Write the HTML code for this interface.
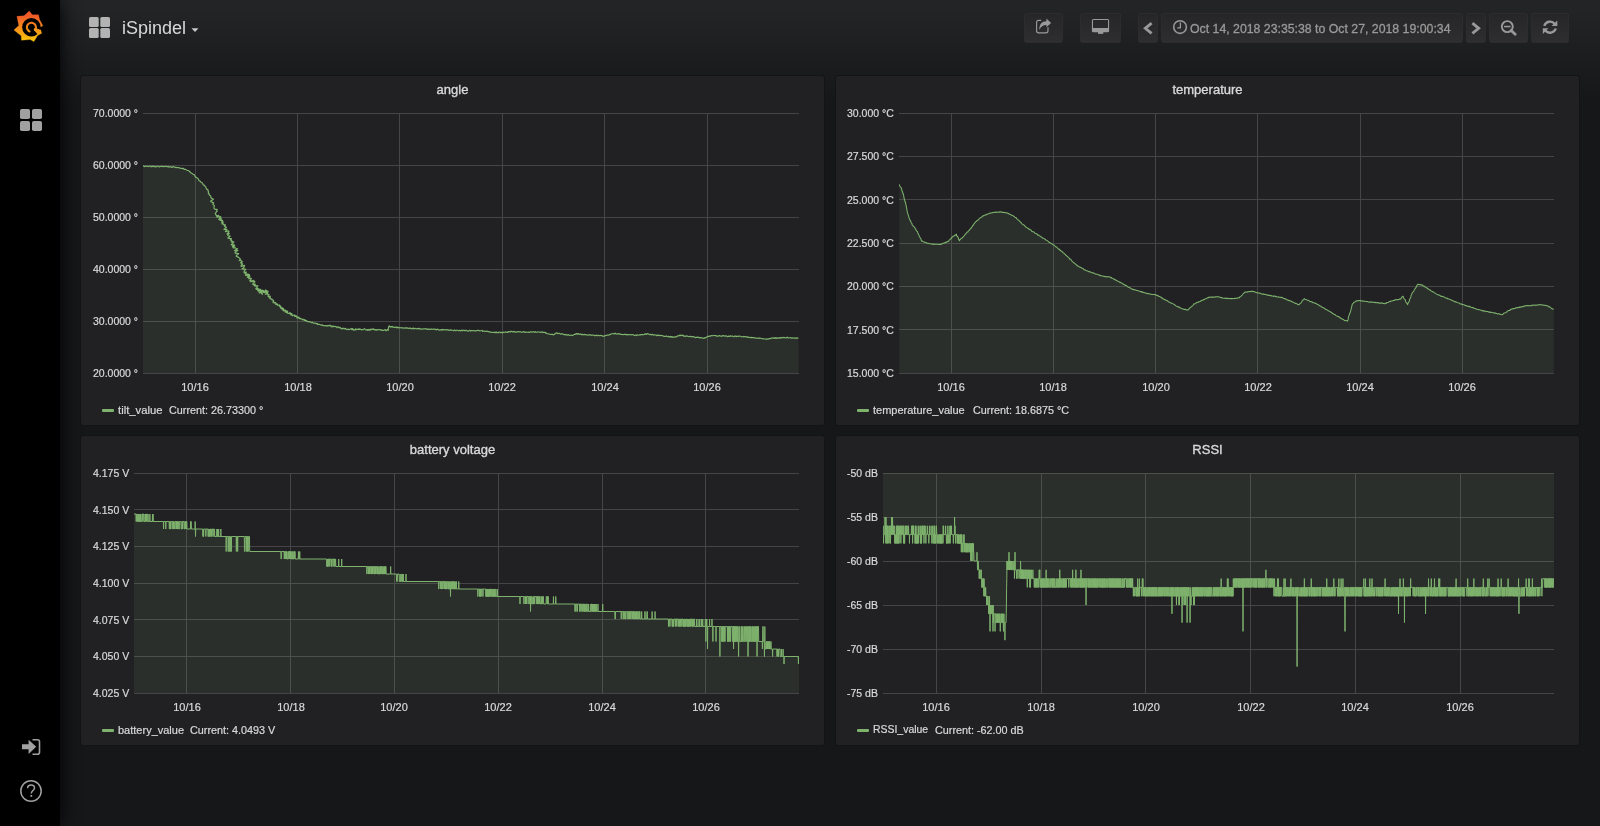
<!DOCTYPE html><html><head><meta charset="utf-8"><title>iSpindel - Grafana</title><style>
*{box-sizing:border-box}
html,body{margin:0;padding:0;width:1600px;height:826px;overflow:hidden}
body{-webkit-font-smoothing:antialiased;background:linear-gradient(180deg,#222426 10px,#161719 100px);font-family:"Liberation Sans",sans-serif;color:#d8d9da;position:relative}
.side{position:absolute;left:0;top:0;width:60px;height:826px;background:#000;box-shadow:0 0 20px #000;z-index:5}
.panel{position:absolute;background:#212124;border:1px solid #141414;border-radius:3px}
.ptitle{will-change:transform;-webkit-text-stroke:0.35px #d8d9da;position:absolute;text-align:center;font-size:13px;color:#d8d9da;line-height:14px}
.chart{position:absolute}
.ylab{will-change:transform;-webkit-text-stroke:0.2px #d8d9da;position:absolute;font-size:10.5px;line-height:14px;white-space:nowrap;text-align:right;color:#d8d9da}
.xlab{will-change:transform;-webkit-text-stroke:0.2px #d8d9da;position:absolute;width:60px;text-align:center;font-size:11px;line-height:14px;color:#d8d9da}
.lsw{position:absolute;width:12px;height:3.5px;background:#7eb26d;border-radius:1px}
.ltxt{will-change:transform;-webkit-text-stroke:0.2px #d8d9da;position:absolute;font-size:11px;line-height:14px;white-space:nowrap;color:#d8d9da}
.lcur{font-size:10.8px}
.btn{position:absolute;top:13px;height:30px;border:1px solid #2c2c2f;border-radius:2px;background:linear-gradient(180deg,#262628,#2e2e31)}
.ttl{will-change:transform;position:absolute;left:122px;top:18px;font-size:18px;line-height:21px;color:#d8d9da}
.tp{will-change:transform;-webkit-text-stroke:0.3px #999;position:absolute;left:1190px;top:22px;font-size:12.3px;line-height:14px;color:#999;white-space:nowrap}
</style></head><body>
<div class="btn" style="left:1024px;width:39px"></div>
<div class="btn" style="left:1080px;width:41px"></div>
<div class="btn" style="left:1138px;width:20px"></div>
<div class="btn" style="left:1161px;width:302px"></div>
<div class="btn" style="left:1466px;width:20px"></div>
<div class="btn" style="left:1489px;width:39px"></div>
<div class="btn" style="left:1531px;width:38px"></div>
<div class="tp">Oct 14, 2018 23:35:38 to Oct 27, 2018 19:00:34</div>
<div class="side"></div>
<svg width="60" height="826" style="position:absolute;left:0;top:0;z-index:6"><defs><linearGradient id="lg" x1="0" y1="11" x2="0" y2="42" gradientUnits="userSpaceOnUse"><stop offset="0" stop-color="#f05a28"/><stop offset="0.15" stop-color="#f05a28"/><stop offset="1" stop-color="#fbca0a"/></linearGradient></defs><path d="M29.3,11.0 L32.3,14.8 L38.5,14.7 L39.6,19.5 L42.8,25.6 L40.3,28.5 L41.7,33.3 L37.6,35.6 L33.9,41.6 L30.2,39.6 L21.5,40.2 L21.2,35.8 L13.9,30.1 L18.8,25.5 L16.9,16.3 L24.0,15.8 Z" fill="url(#lg)" stroke="url(#lg)" stroke-width="0.3" stroke-linejoin="round"/><circle cx="31.4" cy="27.3" r="9.25" fill="#000"/><path d="M33.61,29.75 L37.82,34.43 L38.31,33.97 L38.75,33.47 L39.17,32.94 L39.54,32.39 L39.88,31.81 L40.17,31.20 L40.42,30.58 L40.63,29.95 L40.71,29.62 L34.60,28.10 Z" fill="url(#lg)"/><path d="M34.41,30.64 L34.69,30.37 L34.95,30.07 L35.17,29.75 L35.37,29.41 L35.54,29.06 L35.68,28.69 L35.78,28.31 L35.86,27.93 L35.89,27.54 L35.90,27.14 L35.87,26.75 L35.80,26.36 L35.70,25.98 L35.57,25.61 L35.41,25.26 L35.22,24.92 L34.99,24.59 L34.74,24.29 L34.47,24.01 L34.17,23.75 L33.85,23.53 L33.51,23.33 L33.16,23.16 L32.79,23.02 L32.41,22.92 L32.03,22.84 L31.64,22.81 L31.24,22.80 L30.85,22.83 L30.46,22.90 L30.08,23.00 L29.71,23.13 L29.36,23.29 L29.02,23.48 L28.69,23.71 L28.39,23.96 L28.11,24.23 L27.85,24.53 L27.63,24.85 L27.43,25.19 L27.26,25.54 L27.12,25.91 L27.02,26.29 L26.94,26.67 L26.91,27.06 L26.90,27.46 L26.93,27.85 L27.00,28.24 L27.10,28.62 L27.23,28.99 L27.39,29.34 L27.58,29.68 L27.81,30.01 L28.06,30.31 L28.33,30.59 L28.63,30.85 L28.95,31.07 L29.29,31.27 L29.64,31.44 L30.01,31.58 L30.39,31.68" fill="none" stroke="url(#lg)" stroke-width="2.0"/><path d="M38.19,28.99 L43.04,30.20 L43.38,26.67 L38.39,26.93 Z" fill="#000"/><rect x="20" y="109" width="10" height="10" rx="1.8" fill="#a1a1a1"/><rect x="32" y="109" width="10" height="10" rx="1.8" fill="#a1a1a1"/><rect x="20" y="121" width="10" height="10" rx="1.8" fill="#a1a1a1"/><rect x="32" y="121" width="10" height="10" rx="1.8" fill="#a1a1a1"/><path d="M22,744.3 h6.6 v-4.6 l7.6,7.1 l-7.6,7.1 v-4.6 h-6.6 z" fill="#a1a1a1"/><path d="M32.5,739.7 h5 a2,2 0 0 1 2,2 v10.6 a2,2 0 0 1 -2,2 h-5" fill="none" stroke="#a1a1a1" stroke-width="1.6"/><circle cx="31" cy="791" r="10.2" fill="none" stroke="#a1a1a1" stroke-width="1.5"/><path d="M27.6,788.3 C27.6,786 29.2,784.9 31.1,784.9 C33.1,784.9 34.5,786.1 34.5,787.9 C34.5,790.4 31.3,790.6 31.3,793.4" fill="none" stroke="#a1a1a1" stroke-width="1.5"/><rect x="30.4" y="795" width="1.8" height="1.8" fill="#a1a1a1"/></svg>
<svg width="1600" height="60" style="position:absolute;left:0;top:0"><rect x="89" y="17" width="9.7" height="10.1" rx="1.6" fill="#b3b3b3"/><rect x="100.3" y="17" width="9.7" height="10.1" rx="1.6" fill="#b3b3b3"/><rect x="89" y="28" width="9.7" height="10" rx="1.6" fill="#b3b3b3"/><rect x="100.3" y="28" width="9.7" height="10" rx="1.6" fill="#b3b3b3"/><path d="M191.5,28.3 h7 l-3.5,3.8 z" fill="#c8c8c8"/><path d="M1041.2,20.4 h-2.6 a2,2 0 0 0 -2,2 v8.4 a2,2 0 0 0 2,2 h7.4 a2,2 0 0 0 2,-2 v-3.6" fill="none" stroke="#999" stroke-width="1.15"/><path d="M1039.4,29.9 C1039.1,24.2 1041.8,21.2 1046.4,21.2 V18.6 L1051.1,23.1 L1046.4,27.2 V25 C1043.2,25 1040.6,26.4 1039.4,29.9 Z" fill="#999"/><path d="M1093.4,18.9 h14.2 a1.5,1.5 0 0 1 1.5,1.5 v10.3 a1.5,1.5 0 0 1 -1.5,1.5 h-14.2 a1.5,1.5 0 0 1 -1.5,-1.5 v-10.3 a1.5,1.5 0 0 1 1.5,-1.5 z M1093,20 v8 h15 v-8 z" fill="#999" fill-rule="evenodd"/><rect x="1098" y="32" width="5.3" height="1.9" fill="#999"/><path d="M1151.6,23.2 L1145.3,28.3 L1151.6,33.4" fill="none" stroke="#999" stroke-width="2.8" stroke-linejoin="miter"/><path d="M1472.4,23.2 L1478.7,28.3 L1472.4,33.4" fill="none" stroke="#999" stroke-width="2.8" stroke-linejoin="miter"/><circle cx="1180.05" cy="27.05" r="6.35" fill="none" stroke="#999" stroke-width="1.55"/><path d="M1180.4,22.6 V27.8 H1177.3" fill="none" stroke="#999" stroke-width="1.3"/><circle cx="1507.3" cy="26.6" r="5.5" fill="none" stroke="#999" stroke-width="1.9"/><path d="M1504.1,26.55 H1510.5" stroke="#999" stroke-width="1.6"/><path d="M1511.1,30.4 L1515.2,34.3" stroke="#999" stroke-width="2.7" stroke-linecap="round"/><path d="M1544.3,25.9 A6.1,6.1 0 0 1 1554.8,23.9" fill="none" stroke="#999" stroke-width="2.4"/><path d="M1557.3,20.4 V26.1 H1551.6 Z" fill="#999"/><path d="M1555.8,28.5 A6.1,6.1 0 0 1 1545.3,30.6" fill="none" stroke="#999" stroke-width="2.4"/><path d="M1542.8,28.3 H1548.5 L1542.8,34 Z" fill="#999"/></svg>
<div class="ttl">iSpindel</div>
<div class="panel" style="left:80px;top:75px;width:745px;height:351px"></div>
<div class="ptitle" style="left:80px;top:82.5px;width:745px">angle</div>
<svg class="chart" width="1600" height="826" viewBox="0 0 1600 826" style="left:0;top:0"><defs><clipPath id="cl_angle"><rect x="143" y="83" width="656" height="290"/></clipPath></defs><path d="M143,113h656v1h-656zM143,165h656v1h-656zM143,217h656v1h-656zM143,269h656v1h-656zM143,321h656v1h-656zM143,373h656v1h-656zM195,113h1v261h-1zM297,113h1v261h-1zM399,113h1v261h-1zM502,113h1v261h-1zM604,113h1v261h-1zM707,113h1v261h-1z" fill="rgba(200,200,200,0.22)"/><g clip-path="url(#cl_angle)"><path d="M143,166.2 L143.71,165.89 L144.4,166.54 L145.1,166.49 L145.81,166.04 L146.51,166.28 L147.21,166.25 L147.91,166.45 L148.61,166.59 L149.33,165.98 L150.03,165.93 L150.72,166.68 L151.43,166.33 L152.12,166.64 L152.84,165.97 L153.54,166.39 L154.23,166.65 L154.94,166.23 L155.63,166.89 L156.33,166.86 L157.06,166.1 L157.76,166.11 L158.45,166.59 L159.14,166.96 L159.86,166.47 L160.56,166.34 L161.26,166.54 L161.97,166.21 L162.67,166.4 L163.37,166.61 L164.07,166.67 L164.78,166.45 L165.48,166.47 L166.18,166.47 L166.88,166.7 L167.58,166.57 L168.29,166.34 L168.98,167.09 L169.69,166.86 L170.39,166.95 L171.1,166.55 L171.78,167.3 L172.49,167.19 L173.21,166.54 L173.92,166.75 L174.58,167.21 L175.29,167.31 L175.97,167.62 L176.75,167.27 L177.4,167.74 L178.14,167.71 L178.9,167.5 L179.57,167.86 L180.24,168.23 L180.9,168.29 L181.67,168.24 L182.32,168.55 L183.16,168.31 L183.77,168.73 L184.27,169.43 L185.06,169.35 L185.81,169.38 L186.37,169.93 L186.99,170.3 L187.68,170.51 L188.47,170.51 L189.16,171.16 L189.86,171.81 L190.43,172.59 L191.31,173.01 L192.11,173.53 L192.79,174.19 L193.78,174.47 L194.5,175.08 L194.85,176.14 L195.39,176.91 L196.35,177.37 L197.18,177.95 L198.03,178.52 L198.53,179.43 L198.93,180.45 L199.78,181.02 L200.63,181.58 L201.14,182.5 L202.25,182.8 L202.77,183.69 L203.2,184.68 L204.14,185.14 L204.9,186.02 L205.7,186.87 L206.16,187.96 L206.53,189.12 L207.9,189.57 L207.99,190.91 L208.63,191.88 L208.27,193.55 L209.27,193.83 L209.3,195.11 L210.73,196.04 L210.86,197.3 L211.69,198.38 L213.42,199.24 L210.56,201.23 L212.03,202.15 L213.71,202.85 L212.89,204.06 L213.27,204.79 L214.05,205.35 L214.4,206.09 L213.99,207.14 L213.98,208.02 L214.33,208.76 L215.21,209.29 L217.11,209.4 L216.66,210.46 L217.17,211.13 L215.96,212.5 L215.24,213.67 L215.78,214.34 L216.09,215.09 L216.43,216.07 L218.63,215.36 L216.94,217.08 L217.81,217.21 L220.11,216.44 L220.64,216.78 L220.95,217.25 L218.73,219.3 L220.75,218.71 L221.52,218.89 L220.08,220.46 L221.33,220.35 L222.56,220.25 L222.55,220.92 L221.61,222.18 L223.13,221.9 L223.07,222.6 L221.88,224.01 L223.05,223.94 L223.8,224.14 L223.59,224.95 L225.51,224.76 L224.52,226.02 L224.7,226.69 L225.84,226.88 L226.42,227.35 L223.9,229.38 L225.6,229.29 L226.98,229.36 L225.87,230.68 L225.42,231.67 L228.57,230.85 L228.88,231.46 L228.73,232.3 L226.99,233.93 L229.29,233.54 L227.65,235.13 L228.05,235.69 L228.83,236.06 L230.29,236.09 L227.9,238.05 L228.83,238.33 L230.14,238.44 L231.49,238.52 L230.27,239.88 L231.48,240.04 L231.13,240.96 L232.34,241.12 L231.53,242.27 L233.88,241.86 L233.32,242.89 L231.22,244.69 L231.85,245.13 L234.19,244.72 L232.52,246.31 L234.78,245.94 L232.83,247.66 L233.83,247.92 L235.3,247.94 L236.19,248.25 L237.44,248.6 L234.49,250.65 L237.94,250.26 L235.33,252.18 L235.11,253.19 L236.88,253.44 L238.68,253.68 L236.38,255.48 L236.3,256.44 L237.61,256.87 L238.65,257.4 L239.45,258.02 L239.85,258.73 L240.65,259.08 L239.28,260.52 L240.44,260.69 L241.6,260.87 L242.22,261.32 L240.51,262.92 L242.13,262.87 L241.7,263.83 L242.63,264.13 L240.97,265.7 L241.17,266.36 L244.63,265.39 L244.27,266.32 L244.12,267.15 L242.06,268.93 L243.09,269.17 L244.98,268.98 L245.73,269.36 L244.37,270.79 L244.09,271.68 L244.05,272.46 L246.46,272.01 L244.83,273.58 L245.9,273.95 L246.85,273.87 L245.56,275.48 L248.26,274.07 L247,275.66 L249.35,274.52 L249.38,275.13 L247.32,277.32 L249.85,276.04 L248.41,277.76 L249.22,277.78 L248.76,278.77 L250.57,278.03 L250.96,278.37 L251.43,278.66 L249.89,280.45 L251.03,280.22 L250.22,281.46 L250.74,281.71 L253.44,280.3 L252.42,281.71 L254.15,281.04 L254.66,281.28 L254.86,281.77 L252.62,284.07 L253.17,284.29 L253.34,284.79 L255.21,284.03 L254.63,285.09 L254.39,285.89 L255.99,285.33 L255.67,286.2 L257.09,285.77 L257.84,285.84 L257.55,286.69 L255.84,288.58 L257.19,288.2 L256.33,289.47 L258.14,288.76 L259.02,288.73 L257.68,290.35 L257.85,290.85 L260.77,289.31 L258.95,291.29 L261.11,290.31 L261.34,290.77 L259.16,293.01 L262.18,291.4 L260.42,292.04 L262.4,294.31 L261.44,292.22 L261.06,291 L261.49,290.96 L261.96,291 L263.4,292.46 L262.27,290.13 L264.39,292.59 L263.5,290.62 L265.14,292.38 L265.31,291.96 L265.35,289.89 L265.78,290.18 L265.38,291.12 L266.87,290.58 L265.43,292.33 L267.67,291.21 L268.07,291.53 L265.3,294.31 L267.77,293.01 L267.13,294.14 L267.89,294.17 L268.33,294.45 L269.03,294.53 L267.99,295.97 L268.21,296.43 L268.51,296.82 L270.17,296.15 L270.31,296.67 L269.98,297.55 L269.71,298.39 L270.7,298.24 L270.78,298.81 L271.12,299.16 L272.06,299.06 L271.92,299.79 L272.59,299.9 L272.99,300.21 L273.56,300.4 L273.47,300.96 L272.9,302.3 L273.87,301.7 L273.92,302.26 L274.23,302.49 L274.16,303.2 L275.15,302.58 L275.56,302.7 L275.84,302.97 L276.15,303.2 L275.79,304.27 L276.04,304.58 L277.08,303.9 L277.34,304.19 L277.38,304.76 L277.64,305.06 L277.92,305.33 L278.66,305.02 L279.24,304.92 L279.27,305.51 L279.79,305.48 L279.49,306.47 L280.39,305.97 L280.69,306.21 L280.29,307.33 L281.02,307.04 L280.7,308.06 L281.38,307.84 L281.22,308.66 L282.41,307.79 L282.27,308.58 L282.21,309.28 L283.41,308.4 L282.62,310 L283.89,309.04 L283.44,310.22 L283.48,310.79 L283.99,310.77 L284.92,310.23 L285.49,310.14 L285.29,311.03 L285.21,311.9 L286.1,310.96 L285.83,312.18 L286.85,311.02 L286.42,312.54 L287.56,311.15 L287.59,311.81 L287.34,313.01 L287.73,313 L287.94,313.34 L288.31,313.39 L288.7,313.38 L289.05,313.45 L289.84,312.71 L289.9,313.32 L290.46,313 L290.24,314.14 L290.59,314.22 L291.28,313.65 L291.76,313.48 L291.21,315.23 L291.66,315.12 L292.21,314.82 L292.52,314.97 L292.53,315.68 L293.21,315.14 L293.57,315.2 L293.92,315.27 L294.3,315.29 L294.83,315.04 L294.54,316.3 L295.06,316.05 L295.22,316.49 L296,315.75 L296.02,316.43 L296.53,316.21 L296.85,316.35 L297.02,316.75 L296.79,317.92 L297.47,317.31 L297.77,317.42 L297.93,317.93 L298.49,317.33 L298.95,317.01 L298.89,318.1 L299.21,318.16 L299.42,318.55 L299.86,318.26 L300.07,318.65 L300.35,318.8 L300.81,318.49 L301.03,318.82 L301.34,318.91 L301.72,318.81 L301.96,319.08 L302.22,319.31 L302.42,319.71 L302.72,319.83 L303.22,319.4 L303.4,319.82 L303.89,319.43 L304.19,319.56 L304.35,320.04 L304.54,320.46 L305.07,319.96 L305.18,320.59 L305.45,320.79 L305.93,320.42 L306.11,320.85 L306.37,321.1 L306.82,320.8 L307.02,321.19 L307.31,321.33 L307.66,321.32 L307.88,321.65 L308.17,321.8 L308.45,321.96 L308.87,321.74 L309.3,321.52 L309.55,321.68 L310.25,321.82 L310.87,322.3 L311.52,322.64 L312.36,322.19 L312.91,322.92 L313.6,323.12 L314.37,322.97 L315.02,323.28 L315.79,323.15 L316.35,323.82 L317.19,323.38 L317.68,324.38 L318.41,324.4 L319.14,324.41 L319.91,324.27 L320.46,325 L321.14,325.22 L322.01,324.67 L322.56,325.4 L323.24,325.63 L323.99,325.64 L324.66,325.71 L325.34,325.51 L325.98,325.96 L326.65,326.03 L327.34,325.53 L327.99,325.94 L328.67,325.63 L329.35,325.42 L330.03,325.6 L330.84,325.32 L331.28,326.7 L331.97,326.94 L332.97,325.79 L333.52,326.7 L334.3,326.55 L335.11,326.26 L335.76,326.69 L336.48,326.78 L337.02,327.72 L337.99,326.71 L338.63,327.16 L339.26,327.71 L340.11,327.21 L340.61,328.32 L341.33,328.44 L341.96,328.96 L342.89,328.13 L343.52,328.41 L344,328.85 L344.52,328.44 L344.99,328.97 L345.52,328.46 L345.98,329.18 L346.47,329.38 L346.97,329.44 L347.46,329.73 L348,329.07 L348.5,329.01 L348.97,329.62 L349.48,329.51 L349.99,329.22 L350.51,328.95 L351.02,328.82 L351.53,328.57 L351.97,329.71 L352.53,328.64 L352.98,329.67 L353.5,329.38 L353.96,330.08 L354.48,329.78 L354.96,330.15 L355.53,328.84 L356,329.45 L356.49,329.59 L357,329.2 L357.5,329.5 L358,329.27 L358.5,329.55 L359,328.7 L359.5,329.41 L360,329.42 L360.5,329.19 L361,329.34 L361.5,329.95 L362,329.79 L362.5,329.49 L363,329.74 L363.5,329.3 L364,329.03 L364.5,328.71 L365,329.14 L365.5,329.66 L366,330.11 L366.5,330.03 L367,329.52 L367.5,330.28 L368,329.44 L368.5,330.04 L369,329.35 L369.5,329.89 L370,330.28 L370.5,329.19 L371,328.97 L371.5,329.69 L372,329.55 L372.5,329.28 L373,328.71 L373.5,329.32 L374,329.38 L374.5,329.35 L375,330.08 L375.5,329.64 L376,329.87 L376.5,330.14 L377,329.9 L377.5,329.49 L378,329.89 L378.5,329.72 L379,329.74 L379.48,329.71 L380.03,329.4 L380.51,329.8 L381.03,329.85 L381.5,330.38 L382.04,330.18 L382.54,330.33 L383.07,330.25 L383.58,330.38 L384.13,330.09 L384.68,329.73 L385.21,329.64 L385.66,330.39 L386.15,330.71 L386.71,330.23 L387.28,329.65 L388.26,330.39 L388.25,328.37 L388.81,326.45 L389.39,325.84 L389.82,326.64 L390.3,326.9 L390.85,326.67 L391.37,326.67 L391.84,327 L392.42,326.49 L392.88,326.99 L393.34,327.44 L393.88,327.27 L394.42,327.07 L394.9,327.39 L395.42,327.37 L395.97,327.08 L396.48,327.14 L396.92,327.81 L397.49,327.31 L398.02,327.2 L398.46,327.94 L399,327.72 L399.71,327.62 L400.41,327.78 L401.11,328.02 L401.84,327.54 L402.52,328.01 L403.23,328.1 L403.93,328.23 L404.66,327.78 L405.35,328.12 L406.07,327.81 L406.76,328.14 L407.49,327.83 L408.16,328.42 L408.87,328.52 L409.6,328.08 L410.31,328.02 L410.98,328.72 L411.7,328.52 L412.4,328.68 L413.14,327.98 L413.81,328.8 L414.52,328.59 L415.24,328.35 L415.94,328.49 L416.64,328.82 L417.34,328.87 L418.07,328.37 L418.76,328.8 L419.49,328.42 L420.16,329.18 L420.88,328.74 L421.57,329.2 L422.28,329.07 L423,329 L423.72,328.72 L424.41,328.99 L425.13,328.68 L425.84,328.72 L426.52,329.27 L427.24,328.99 L427.93,329.37 L428.66,328.95 L429.34,329.41 L430.05,329.45 L430.77,329.11 L431.49,328.97 L432.18,329.27 L432.88,329.39 L433.61,329.07 L434.31,329.18 L435.02,329.1 L435.69,329.61 L436.38,329.9 L437.1,329.33 L437.8,329.19 L438.48,329.82 L439.17,329.94 L439.86,330.1 L440.57,329.82 L441.27,329.6 L441.95,330.07 L442.67,329.45 L443.35,329.99 L444.07,329.48 L444.75,329.78 L445.45,329.9 L446.15,329.82 L446.85,329.66 L447.54,329.74 L448.22,330.3 L448.93,330 L449.62,330.13 L450.33,329.83 L451.01,330.31 L451.72,329.99 L452.41,330.25 L453.09,330.56 L453.79,330.67 L454.52,329.84 L455.19,330.54 L455.88,330.63 L456.6,330.17 L457.29,330.25 L457.98,330.46 L458.66,330.79 L459.38,330.35 L460.06,330.81 L460.76,330.72 L461.48,330.21 L462.15,330.92 L462.87,330.14 L463.57,330.28 L464.24,330.77 L464.96,330.25 L465.65,330.57 L466.35,330.37 L467.04,330.7 L467.72,331.06 L468.41,331.15 L469.14,330.39 L469.84,330.44 L470.51,331.17 L471.23,330.48 L471.92,330.72 L472.62,330.6 L473.32,330.61 L473.92,330.58 L474.77,330.97 L475.54,330.92 L476.28,330.71 L477.06,330.71 L477.73,330.4 L478.48,330.25 L479.16,330.56 L479.83,330.96 L480.58,330.77 L481.34,330.51 L482.08,330.44 L482.68,331.32 L483.44,331.11 L484.18,330.99 L484.86,331.32 L485.58,331.38 L486.3,331.44 L487.07,331.13 L487.74,331.48 L488.45,331.63 L489.19,331.54 L489.82,332.25 L490.58,331.94 L491.27,332.25 L491.99,332.39 L492.69,332.44 L493.39,332.44 L494.09,332.49 L494.81,332.06 L495.49,332.73 L496.21,332.01 L496.89,332.72 L497.59,332.68 L498.29,332.7 L499.01,332 L499.71,332.05 L500.39,332.72 L501.1,332.43 L501.8,332.36 L502.54,332.93 L503.16,332.03 L503.89,332.41 L504.57,332.28 L505.24,331.94 L505.95,332.12 L506.67,332.34 L507.37,332.44 L508,331.61 L508.73,332 L509.39,331.56 L510.14,332.13 L510.78,331.44 L511.51,331.33 L512.2,331.66 L512.9,331.98 L513.6,331.61 L514.3,331.46 L515,332.07 L515.7,332.09 L516.4,332.14 L517.1,331.65 L517.8,331.77 L518.5,331.62 L519.2,331.91 L519.9,331.72 L520.6,331.73 L521.3,332.15 L521.99,332.31 L522.7,331.99 L523.41,331.56 L524.1,332.07 L524.8,331.89 L525.49,332.39 L526.2,332.16 L526.9,332.27 L527.6,332.16 L528.3,332.02 L528.99,332.36 L529.7,332.31 L530.4,331.83 L531.1,331.72 L531.8,331.92 L532.5,332.07 L533.21,331.7 L533.9,331.93 L534.6,332.15 L535.31,331.68 L536,332.38 L536.7,332.25 L537.4,331.95 L538.1,331.95 L538.8,332.01 L539.5,331.99 L540.2,332.38 L540.9,332.17 L541.6,332.2 L542.3,331.87 L542.91,332.56 L543.74,332.22 L544.44,332.39 L545.19,332.33 L545.7,333.3 L546.5,333.03 L547.11,333.58 L547.81,333.76 L548.5,333.97 L549.23,334.01 L549.91,334.27 L550.61,334.44 L551.34,334.5 L552.18,334.09 L552.79,334.6 L553.54,334.8 L554.54,334.43 L555.17,333.64 L555.72,332.98 L556.42,333.15 L557.2,332.95 L557.81,333.6 L558.58,333.47 L559.33,333.39 L560.03,333.58 L560.66,334.17 L561.44,333.91 L562.22,333.72 L562.93,333.84 L563.56,334.45 L564.29,334.48 L564.94,334.91 L565.78,334.41 L566.45,334.75 L567.11,335.16 L567.94,334.7 L568.64,334.88 L569.28,335.41 L569.98,335.29 L570.67,335.1 L571.38,335.19 L572.11,335.47 L572.8,335.32 L573.29,334.93 L574.04,334.43 L575.18,334.51 L575.74,333.88 L576.47,333.51 L577.11,334.19 L577.87,333.49 L578.53,333.86 L579.19,334.34 L579.9,334.28 L580.62,333.95 L581.27,334.55 L581.99,334.34 L582.66,334.64 L583.35,334.72 L584.08,334.36 L584.76,334.64 L585.46,334.58 L586.12,334.99 L586.83,334.92 L587.53,334.91 L588.21,335.04 L588.9,335.27 L589.64,334.66 L590.34,334.66 L590.99,335.21 L591.69,335.29 L592.4,335.11 L593.09,335.14 L593.79,335.13 L594.45,335.61 L595.15,335.59 L595.86,335.46 L596.6,335.02 L597.23,335.81 L597.95,335.51 L598.67,335.33 L599.35,335.48 L600.02,335.89 L600.76,335.33 L601.45,335.49 L602.13,335.71 L602.78,336.29 L603.55,336.22 L604.3,336.24 L604.91,335.69 L605.62,335.54 L606.31,335.35 L607.01,335.16 L607.71,335 L608.47,335.06 L609.2,335.01 L609.78,334.36 L610.53,334.38 L611.16,333.93 L611.86,333.75 L612.6,333.75 L613.32,333.65 L614,333.44 L614.66,333.89 L615.43,333.22 L616.09,333.71 L616.76,334.09 L617.48,333.92 L618.19,333.83 L618.91,333.71 L619.61,333.81 L620.27,334.35 L620.97,334.37 L621.69,334.23 L622.37,334.5 L623.07,334.58 L623.77,334.57 L624.51,334.22 L625.2,334.35 L625.88,334.71 L626.61,334.4 L627.28,334.8 L628,334.62 L628.71,334.55 L629.4,334.72 L630.13,334.47 L630.81,334.75 L631.51,334.87 L632.24,334.57 L632.93,334.77 L633.62,334.91 L634.27,335.51 L635.01,335.33 L635.69,334.99 L636.46,335.55 L637.1,334.81 L637.82,334.97 L638.55,335.1 L639.25,334.98 L639.93,334.68 L640.67,334.91 L641.35,334.58 L642.08,334.71 L642.76,334.43 L643.51,334.79 L644.2,334.49 L644.84,333.85 L645.55,333.82 L646.34,334.49 L647.03,333.76 L647.74,333.66 L648.41,333.94 L649.08,334.23 L649.72,334.73 L650.47,334.32 L651.13,334.69 L651.81,334.87 L652.58,334.29 L653.22,334.84 L653.87,335.26 L654.61,334.95 L655.3,335.02 L656.02,334.93 L656.65,335.55 L657.33,335.65 L658.12,334.96 L658.76,335.44 L659.47,335.41 L660.14,335.71 L660.89,335.3 L661.56,335.51 L662.25,335.61 L662.93,335.87 L663.58,336.23 L664.27,336.37 L664.97,336.39 L665.67,336.37 L666.43,335.93 L667.09,336.28 L667.75,336.61 L668.48,336.36 L669.15,336.63 L669.8,337.07 L670.58,336.45 L671.19,337.19 L671.96,336.6 L672.63,336.93 L673.26,337.48 L673.92,336.94 L674.67,337 L675.31,336.7 L676.11,336.88 L676.8,336.75 L677.27,335.94 L678,335.89 L678.78,336.02 L679.35,335.51 L680.03,335 L680.68,335.57 L681.43,335.28 L682.12,335.5 L682.88,335.16 L683.47,336.13 L684.22,335.92 L684.89,336.25 L685.59,336.37 L686.38,335.84 L687.05,336.17 L687.77,336.17 L688.44,336.54 L689.14,336.7 L689.91,336.24 L690.61,336.37 L691.27,336.85 L692.01,336.67 L692.75,336.51 L693.45,336.65 L694.11,337.07 L694.81,337.19 L695.48,337.6 L696.23,337.31 L696.93,337.46 L697.69,337.14 L698.36,337.47 L699.08,337.44 L699.74,337.9 L700.5,337.6 L701.21,337.64 L701.9,337.87 L702.59,338.05 L703.31,338.02 L704.04,338.34 L704.55,337.7 L705.47,338 L706.07,337.56 L706.68,337.15 L707.18,336.47 L707.94,336.41 L708.73,336.42 L709.38,336.1 L709.99,335.98 L710.7,336.07 L711.42,335.58 L712.12,335.76 L712.83,335.63 L713.54,335.47 L714.24,335.5 L714.95,335.63 L715.66,335.49 L716.35,335.92 L717.05,336.09 L717.76,335.98 L718.47,336.11 L719.18,335.72 L719.89,335.72 L720.59,336.07 L721.28,336.38 L722,335.98 L722.72,335.62 L723.42,335.66 L724.12,335.94 L724.82,336.24 L725.54,335.78 L726.24,335.93 L726.94,336.36 L727.63,336.65 L728.36,336.09 L729.06,336.35 L729.76,336.29 L730.48,335.87 L731.18,336.16 L731.89,336.01 L732.59,336.13 L733.29,336.62 L734,336.56 L734.72,336.01 L735.42,336.06 L736.11,336.66 L736.83,336.13 L737.53,336.34 L738.24,336.32 L738.95,336.14 L739.66,336.14 L740.36,336.26 L741.06,336.52 L741.75,337.02 L742.47,336.77 L743.18,336.44 L743.88,336.85 L744.59,336.51 L745.29,336.74 L746.02,336.59 L746.65,337.24 L747.42,336.79 L748.07,337.28 L748.78,337.22 L749.46,337.48 L750.19,337.35 L750.86,337.68 L751.61,337.35 L752.28,337.67 L752.99,337.71 L753.7,337.71 L754.39,337.83 L755.1,337.89 L755.81,337.85 L756.46,338.38 L757.19,338.23 L757.89,338.24 L758.65,337.88 L759.3,338.37 L760.04,338.16 L760.73,338.28 L761.41,338.56 L762.1,338.75 L762.83,338.57 L763.52,338.67 L764.2,338.99 L764.9,339.02 L765.61,339.04 L766.34,338.86 L766.96,339.19 L767.8,339.17 L768.51,338.81 L769.26,338.55 L770.01,338.56 L770.7,338.42 L771.39,338.36 L772.06,337.74 L772.76,337.96 L773.47,338.27 L774.14,337.77 L774.86,338.42 L775.53,337.7 L776.24,338.33 L776.91,337.71 L777.63,338.24 L778.32,338.22 L778.99,337.73 L779.71,338.2 L780.37,337.51 L781.09,338.1 L781.76,337.65 L782.46,337.68 L783.14,337.36 L783.85,337.76 L784.53,337.44 L785.24,337.77 L785.93,337.86 L786.62,337.65 L787.29,337.09 L787.97,337.91 L788.67,337.93 L789.39,337.73 L790.11,337.54 L790.8,337.76 L791.48,338.09 L792.2,337.76 L792.88,338.1 L793.59,337.99 L794.3,337.88 L794.97,338.39 L795.71,337.97 L796.39,338.19 L797.13,337.75 L797.8,338.17 L798.5,338.25 L798.5,373 L143,373 Z" fill="rgba(126,178,109,0.1)"/><path d="M143,166.2 L143.71,165.89 L144.4,166.54 L145.1,166.49 L145.81,166.04 L146.51,166.28 L147.21,166.25 L147.91,166.45 L148.61,166.59 L149.33,165.98 L150.03,165.93 L150.72,166.68 L151.43,166.33 L152.12,166.64 L152.84,165.97 L153.54,166.39 L154.23,166.65 L154.94,166.23 L155.63,166.89 L156.33,166.86 L157.06,166.1 L157.76,166.11 L158.45,166.59 L159.14,166.96 L159.86,166.47 L160.56,166.34 L161.26,166.54 L161.97,166.21 L162.67,166.4 L163.37,166.61 L164.07,166.67 L164.78,166.45 L165.48,166.47 L166.18,166.47 L166.88,166.7 L167.58,166.57 L168.29,166.34 L168.98,167.09 L169.69,166.86 L170.39,166.95 L171.1,166.55 L171.78,167.3 L172.49,167.19 L173.21,166.54 L173.92,166.75 L174.58,167.21 L175.29,167.31 L175.97,167.62 L176.75,167.27 L177.4,167.74 L178.14,167.71 L178.9,167.5 L179.57,167.86 L180.24,168.23 L180.9,168.29 L181.67,168.24 L182.32,168.55 L183.16,168.31 L183.77,168.73 L184.27,169.43 L185.06,169.35 L185.81,169.38 L186.37,169.93 L186.99,170.3 L187.68,170.51 L188.47,170.51 L189.16,171.16 L189.86,171.81 L190.43,172.59 L191.31,173.01 L192.11,173.53 L192.79,174.19 L193.78,174.47 L194.5,175.08 L194.85,176.14 L195.39,176.91 L196.35,177.37 L197.18,177.95 L198.03,178.52 L198.53,179.43 L198.93,180.45 L199.78,181.02 L200.63,181.58 L201.14,182.5 L202.25,182.8 L202.77,183.69 L203.2,184.68 L204.14,185.14 L204.9,186.02 L205.7,186.87 L206.16,187.96 L206.53,189.12 L207.9,189.57 L207.99,190.91 L208.63,191.88 L208.27,193.55 L209.27,193.83 L209.3,195.11 L210.73,196.04 L210.86,197.3 L211.69,198.38 L213.42,199.24 L210.56,201.23 L212.03,202.15 L213.71,202.85 L212.89,204.06 L213.27,204.79 L214.05,205.35 L214.4,206.09 L213.99,207.14 L213.98,208.02 L214.33,208.76 L215.21,209.29 L217.11,209.4 L216.66,210.46 L217.17,211.13 L215.96,212.5 L215.24,213.67 L215.78,214.34 L216.09,215.09 L216.43,216.07 L218.63,215.36 L216.94,217.08 L217.81,217.21 L220.11,216.44 L220.64,216.78 L220.95,217.25 L218.73,219.3 L220.75,218.71 L221.52,218.89 L220.08,220.46 L221.33,220.35 L222.56,220.25 L222.55,220.92 L221.61,222.18 L223.13,221.9 L223.07,222.6 L221.88,224.01 L223.05,223.94 L223.8,224.14 L223.59,224.95 L225.51,224.76 L224.52,226.02 L224.7,226.69 L225.84,226.88 L226.42,227.35 L223.9,229.38 L225.6,229.29 L226.98,229.36 L225.87,230.68 L225.42,231.67 L228.57,230.85 L228.88,231.46 L228.73,232.3 L226.99,233.93 L229.29,233.54 L227.65,235.13 L228.05,235.69 L228.83,236.06 L230.29,236.09 L227.9,238.05 L228.83,238.33 L230.14,238.44 L231.49,238.52 L230.27,239.88 L231.48,240.04 L231.13,240.96 L232.34,241.12 L231.53,242.27 L233.88,241.86 L233.32,242.89 L231.22,244.69 L231.85,245.13 L234.19,244.72 L232.52,246.31 L234.78,245.94 L232.83,247.66 L233.83,247.92 L235.3,247.94 L236.19,248.25 L237.44,248.6 L234.49,250.65 L237.94,250.26 L235.33,252.18 L235.11,253.19 L236.88,253.44 L238.68,253.68 L236.38,255.48 L236.3,256.44 L237.61,256.87 L238.65,257.4 L239.45,258.02 L239.85,258.73 L240.65,259.08 L239.28,260.52 L240.44,260.69 L241.6,260.87 L242.22,261.32 L240.51,262.92 L242.13,262.87 L241.7,263.83 L242.63,264.13 L240.97,265.7 L241.17,266.36 L244.63,265.39 L244.27,266.32 L244.12,267.15 L242.06,268.93 L243.09,269.17 L244.98,268.98 L245.73,269.36 L244.37,270.79 L244.09,271.68 L244.05,272.46 L246.46,272.01 L244.83,273.58 L245.9,273.95 L246.85,273.87 L245.56,275.48 L248.26,274.07 L247,275.66 L249.35,274.52 L249.38,275.13 L247.32,277.32 L249.85,276.04 L248.41,277.76 L249.22,277.78 L248.76,278.77 L250.57,278.03 L250.96,278.37 L251.43,278.66 L249.89,280.45 L251.03,280.22 L250.22,281.46 L250.74,281.71 L253.44,280.3 L252.42,281.71 L254.15,281.04 L254.66,281.28 L254.86,281.77 L252.62,284.07 L253.17,284.29 L253.34,284.79 L255.21,284.03 L254.63,285.09 L254.39,285.89 L255.99,285.33 L255.67,286.2 L257.09,285.77 L257.84,285.84 L257.55,286.69 L255.84,288.58 L257.19,288.2 L256.33,289.47 L258.14,288.76 L259.02,288.73 L257.68,290.35 L257.85,290.85 L260.77,289.31 L258.95,291.29 L261.11,290.31 L261.34,290.77 L259.16,293.01 L262.18,291.4 L260.42,292.04 L262.4,294.31 L261.44,292.22 L261.06,291 L261.49,290.96 L261.96,291 L263.4,292.46 L262.27,290.13 L264.39,292.59 L263.5,290.62 L265.14,292.38 L265.31,291.96 L265.35,289.89 L265.78,290.18 L265.38,291.12 L266.87,290.58 L265.43,292.33 L267.67,291.21 L268.07,291.53 L265.3,294.31 L267.77,293.01 L267.13,294.14 L267.89,294.17 L268.33,294.45 L269.03,294.53 L267.99,295.97 L268.21,296.43 L268.51,296.82 L270.17,296.15 L270.31,296.67 L269.98,297.55 L269.71,298.39 L270.7,298.24 L270.78,298.81 L271.12,299.16 L272.06,299.06 L271.92,299.79 L272.59,299.9 L272.99,300.21 L273.56,300.4 L273.47,300.96 L272.9,302.3 L273.87,301.7 L273.92,302.26 L274.23,302.49 L274.16,303.2 L275.15,302.58 L275.56,302.7 L275.84,302.97 L276.15,303.2 L275.79,304.27 L276.04,304.58 L277.08,303.9 L277.34,304.19 L277.38,304.76 L277.64,305.06 L277.92,305.33 L278.66,305.02 L279.24,304.92 L279.27,305.51 L279.79,305.48 L279.49,306.47 L280.39,305.97 L280.69,306.21 L280.29,307.33 L281.02,307.04 L280.7,308.06 L281.38,307.84 L281.22,308.66 L282.41,307.79 L282.27,308.58 L282.21,309.28 L283.41,308.4 L282.62,310 L283.89,309.04 L283.44,310.22 L283.48,310.79 L283.99,310.77 L284.92,310.23 L285.49,310.14 L285.29,311.03 L285.21,311.9 L286.1,310.96 L285.83,312.18 L286.85,311.02 L286.42,312.54 L287.56,311.15 L287.59,311.81 L287.34,313.01 L287.73,313 L287.94,313.34 L288.31,313.39 L288.7,313.38 L289.05,313.45 L289.84,312.71 L289.9,313.32 L290.46,313 L290.24,314.14 L290.59,314.22 L291.28,313.65 L291.76,313.48 L291.21,315.23 L291.66,315.12 L292.21,314.82 L292.52,314.97 L292.53,315.68 L293.21,315.14 L293.57,315.2 L293.92,315.27 L294.3,315.29 L294.83,315.04 L294.54,316.3 L295.06,316.05 L295.22,316.49 L296,315.75 L296.02,316.43 L296.53,316.21 L296.85,316.35 L297.02,316.75 L296.79,317.92 L297.47,317.31 L297.77,317.42 L297.93,317.93 L298.49,317.33 L298.95,317.01 L298.89,318.1 L299.21,318.16 L299.42,318.55 L299.86,318.26 L300.07,318.65 L300.35,318.8 L300.81,318.49 L301.03,318.82 L301.34,318.91 L301.72,318.81 L301.96,319.08 L302.22,319.31 L302.42,319.71 L302.72,319.83 L303.22,319.4 L303.4,319.82 L303.89,319.43 L304.19,319.56 L304.35,320.04 L304.54,320.46 L305.07,319.96 L305.18,320.59 L305.45,320.79 L305.93,320.42 L306.11,320.85 L306.37,321.1 L306.82,320.8 L307.02,321.19 L307.31,321.33 L307.66,321.32 L307.88,321.65 L308.17,321.8 L308.45,321.96 L308.87,321.74 L309.3,321.52 L309.55,321.68 L310.25,321.82 L310.87,322.3 L311.52,322.64 L312.36,322.19 L312.91,322.92 L313.6,323.12 L314.37,322.97 L315.02,323.28 L315.79,323.15 L316.35,323.82 L317.19,323.38 L317.68,324.38 L318.41,324.4 L319.14,324.41 L319.91,324.27 L320.46,325 L321.14,325.22 L322.01,324.67 L322.56,325.4 L323.24,325.63 L323.99,325.64 L324.66,325.71 L325.34,325.51 L325.98,325.96 L326.65,326.03 L327.34,325.53 L327.99,325.94 L328.67,325.63 L329.35,325.42 L330.03,325.6 L330.84,325.32 L331.28,326.7 L331.97,326.94 L332.97,325.79 L333.52,326.7 L334.3,326.55 L335.11,326.26 L335.76,326.69 L336.48,326.78 L337.02,327.72 L337.99,326.71 L338.63,327.16 L339.26,327.71 L340.11,327.21 L340.61,328.32 L341.33,328.44 L341.96,328.96 L342.89,328.13 L343.52,328.41 L344,328.85 L344.52,328.44 L344.99,328.97 L345.52,328.46 L345.98,329.18 L346.47,329.38 L346.97,329.44 L347.46,329.73 L348,329.07 L348.5,329.01 L348.97,329.62 L349.48,329.51 L349.99,329.22 L350.51,328.95 L351.02,328.82 L351.53,328.57 L351.97,329.71 L352.53,328.64 L352.98,329.67 L353.5,329.38 L353.96,330.08 L354.48,329.78 L354.96,330.15 L355.53,328.84 L356,329.45 L356.49,329.59 L357,329.2 L357.5,329.5 L358,329.27 L358.5,329.55 L359,328.7 L359.5,329.41 L360,329.42 L360.5,329.19 L361,329.34 L361.5,329.95 L362,329.79 L362.5,329.49 L363,329.74 L363.5,329.3 L364,329.03 L364.5,328.71 L365,329.14 L365.5,329.66 L366,330.11 L366.5,330.03 L367,329.52 L367.5,330.28 L368,329.44 L368.5,330.04 L369,329.35 L369.5,329.89 L370,330.28 L370.5,329.19 L371,328.97 L371.5,329.69 L372,329.55 L372.5,329.28 L373,328.71 L373.5,329.32 L374,329.38 L374.5,329.35 L375,330.08 L375.5,329.64 L376,329.87 L376.5,330.14 L377,329.9 L377.5,329.49 L378,329.89 L378.5,329.72 L379,329.74 L379.48,329.71 L380.03,329.4 L380.51,329.8 L381.03,329.85 L381.5,330.38 L382.04,330.18 L382.54,330.33 L383.07,330.25 L383.58,330.38 L384.13,330.09 L384.68,329.73 L385.21,329.64 L385.66,330.39 L386.15,330.71 L386.71,330.23 L387.28,329.65 L388.26,330.39 L388.25,328.37 L388.81,326.45 L389.39,325.84 L389.82,326.64 L390.3,326.9 L390.85,326.67 L391.37,326.67 L391.84,327 L392.42,326.49 L392.88,326.99 L393.34,327.44 L393.88,327.27 L394.42,327.07 L394.9,327.39 L395.42,327.37 L395.97,327.08 L396.48,327.14 L396.92,327.81 L397.49,327.31 L398.02,327.2 L398.46,327.94 L399,327.72 L399.71,327.62 L400.41,327.78 L401.11,328.02 L401.84,327.54 L402.52,328.01 L403.23,328.1 L403.93,328.23 L404.66,327.78 L405.35,328.12 L406.07,327.81 L406.76,328.14 L407.49,327.83 L408.16,328.42 L408.87,328.52 L409.6,328.08 L410.31,328.02 L410.98,328.72 L411.7,328.52 L412.4,328.68 L413.14,327.98 L413.81,328.8 L414.52,328.59 L415.24,328.35 L415.94,328.49 L416.64,328.82 L417.34,328.87 L418.07,328.37 L418.76,328.8 L419.49,328.42 L420.16,329.18 L420.88,328.74 L421.57,329.2 L422.28,329.07 L423,329 L423.72,328.72 L424.41,328.99 L425.13,328.68 L425.84,328.72 L426.52,329.27 L427.24,328.99 L427.93,329.37 L428.66,328.95 L429.34,329.41 L430.05,329.45 L430.77,329.11 L431.49,328.97 L432.18,329.27 L432.88,329.39 L433.61,329.07 L434.31,329.18 L435.02,329.1 L435.69,329.61 L436.38,329.9 L437.1,329.33 L437.8,329.19 L438.48,329.82 L439.17,329.94 L439.86,330.1 L440.57,329.82 L441.27,329.6 L441.95,330.07 L442.67,329.45 L443.35,329.99 L444.07,329.48 L444.75,329.78 L445.45,329.9 L446.15,329.82 L446.85,329.66 L447.54,329.74 L448.22,330.3 L448.93,330 L449.62,330.13 L450.33,329.83 L451.01,330.31 L451.72,329.99 L452.41,330.25 L453.09,330.56 L453.79,330.67 L454.52,329.84 L455.19,330.54 L455.88,330.63 L456.6,330.17 L457.29,330.25 L457.98,330.46 L458.66,330.79 L459.38,330.35 L460.06,330.81 L460.76,330.72 L461.48,330.21 L462.15,330.92 L462.87,330.14 L463.57,330.28 L464.24,330.77 L464.96,330.25 L465.65,330.57 L466.35,330.37 L467.04,330.7 L467.72,331.06 L468.41,331.15 L469.14,330.39 L469.84,330.44 L470.51,331.17 L471.23,330.48 L471.92,330.72 L472.62,330.6 L473.32,330.61 L473.92,330.58 L474.77,330.97 L475.54,330.92 L476.28,330.71 L477.06,330.71 L477.73,330.4 L478.48,330.25 L479.16,330.56 L479.83,330.96 L480.58,330.77 L481.34,330.51 L482.08,330.44 L482.68,331.32 L483.44,331.11 L484.18,330.99 L484.86,331.32 L485.58,331.38 L486.3,331.44 L487.07,331.13 L487.74,331.48 L488.45,331.63 L489.19,331.54 L489.82,332.25 L490.58,331.94 L491.27,332.25 L491.99,332.39 L492.69,332.44 L493.39,332.44 L494.09,332.49 L494.81,332.06 L495.49,332.73 L496.21,332.01 L496.89,332.72 L497.59,332.68 L498.29,332.7 L499.01,332 L499.71,332.05 L500.39,332.72 L501.1,332.43 L501.8,332.36 L502.54,332.93 L503.16,332.03 L503.89,332.41 L504.57,332.28 L505.24,331.94 L505.95,332.12 L506.67,332.34 L507.37,332.44 L508,331.61 L508.73,332 L509.39,331.56 L510.14,332.13 L510.78,331.44 L511.51,331.33 L512.2,331.66 L512.9,331.98 L513.6,331.61 L514.3,331.46 L515,332.07 L515.7,332.09 L516.4,332.14 L517.1,331.65 L517.8,331.77 L518.5,331.62 L519.2,331.91 L519.9,331.72 L520.6,331.73 L521.3,332.15 L521.99,332.31 L522.7,331.99 L523.41,331.56 L524.1,332.07 L524.8,331.89 L525.49,332.39 L526.2,332.16 L526.9,332.27 L527.6,332.16 L528.3,332.02 L528.99,332.36 L529.7,332.31 L530.4,331.83 L531.1,331.72 L531.8,331.92 L532.5,332.07 L533.21,331.7 L533.9,331.93 L534.6,332.15 L535.31,331.68 L536,332.38 L536.7,332.25 L537.4,331.95 L538.1,331.95 L538.8,332.01 L539.5,331.99 L540.2,332.38 L540.9,332.17 L541.6,332.2 L542.3,331.87 L542.91,332.56 L543.74,332.22 L544.44,332.39 L545.19,332.33 L545.7,333.3 L546.5,333.03 L547.11,333.58 L547.81,333.76 L548.5,333.97 L549.23,334.01 L549.91,334.27 L550.61,334.44 L551.34,334.5 L552.18,334.09 L552.79,334.6 L553.54,334.8 L554.54,334.43 L555.17,333.64 L555.72,332.98 L556.42,333.15 L557.2,332.95 L557.81,333.6 L558.58,333.47 L559.33,333.39 L560.03,333.58 L560.66,334.17 L561.44,333.91 L562.22,333.72 L562.93,333.84 L563.56,334.45 L564.29,334.48 L564.94,334.91 L565.78,334.41 L566.45,334.75 L567.11,335.16 L567.94,334.7 L568.64,334.88 L569.28,335.41 L569.98,335.29 L570.67,335.1 L571.38,335.19 L572.11,335.47 L572.8,335.32 L573.29,334.93 L574.04,334.43 L575.18,334.51 L575.74,333.88 L576.47,333.51 L577.11,334.19 L577.87,333.49 L578.53,333.86 L579.19,334.34 L579.9,334.28 L580.62,333.95 L581.27,334.55 L581.99,334.34 L582.66,334.64 L583.35,334.72 L584.08,334.36 L584.76,334.64 L585.46,334.58 L586.12,334.99 L586.83,334.92 L587.53,334.91 L588.21,335.04 L588.9,335.27 L589.64,334.66 L590.34,334.66 L590.99,335.21 L591.69,335.29 L592.4,335.11 L593.09,335.14 L593.79,335.13 L594.45,335.61 L595.15,335.59 L595.86,335.46 L596.6,335.02 L597.23,335.81 L597.95,335.51 L598.67,335.33 L599.35,335.48 L600.02,335.89 L600.76,335.33 L601.45,335.49 L602.13,335.71 L602.78,336.29 L603.55,336.22 L604.3,336.24 L604.91,335.69 L605.62,335.54 L606.31,335.35 L607.01,335.16 L607.71,335 L608.47,335.06 L609.2,335.01 L609.78,334.36 L610.53,334.38 L611.16,333.93 L611.86,333.75 L612.6,333.75 L613.32,333.65 L614,333.44 L614.66,333.89 L615.43,333.22 L616.09,333.71 L616.76,334.09 L617.48,333.92 L618.19,333.83 L618.91,333.71 L619.61,333.81 L620.27,334.35 L620.97,334.37 L621.69,334.23 L622.37,334.5 L623.07,334.58 L623.77,334.57 L624.51,334.22 L625.2,334.35 L625.88,334.71 L626.61,334.4 L627.28,334.8 L628,334.62 L628.71,334.55 L629.4,334.72 L630.13,334.47 L630.81,334.75 L631.51,334.87 L632.24,334.57 L632.93,334.77 L633.62,334.91 L634.27,335.51 L635.01,335.33 L635.69,334.99 L636.46,335.55 L637.1,334.81 L637.82,334.97 L638.55,335.1 L639.25,334.98 L639.93,334.68 L640.67,334.91 L641.35,334.58 L642.08,334.71 L642.76,334.43 L643.51,334.79 L644.2,334.49 L644.84,333.85 L645.55,333.82 L646.34,334.49 L647.03,333.76 L647.74,333.66 L648.41,333.94 L649.08,334.23 L649.72,334.73 L650.47,334.32 L651.13,334.69 L651.81,334.87 L652.58,334.29 L653.22,334.84 L653.87,335.26 L654.61,334.95 L655.3,335.02 L656.02,334.93 L656.65,335.55 L657.33,335.65 L658.12,334.96 L658.76,335.44 L659.47,335.41 L660.14,335.71 L660.89,335.3 L661.56,335.51 L662.25,335.61 L662.93,335.87 L663.58,336.23 L664.27,336.37 L664.97,336.39 L665.67,336.37 L666.43,335.93 L667.09,336.28 L667.75,336.61 L668.48,336.36 L669.15,336.63 L669.8,337.07 L670.58,336.45 L671.19,337.19 L671.96,336.6 L672.63,336.93 L673.26,337.48 L673.92,336.94 L674.67,337 L675.31,336.7 L676.11,336.88 L676.8,336.75 L677.27,335.94 L678,335.89 L678.78,336.02 L679.35,335.51 L680.03,335 L680.68,335.57 L681.43,335.28 L682.12,335.5 L682.88,335.16 L683.47,336.13 L684.22,335.92 L684.89,336.25 L685.59,336.37 L686.38,335.84 L687.05,336.17 L687.77,336.17 L688.44,336.54 L689.14,336.7 L689.91,336.24 L690.61,336.37 L691.27,336.85 L692.01,336.67 L692.75,336.51 L693.45,336.65 L694.11,337.07 L694.81,337.19 L695.48,337.6 L696.23,337.31 L696.93,337.46 L697.69,337.14 L698.36,337.47 L699.08,337.44 L699.74,337.9 L700.5,337.6 L701.21,337.64 L701.9,337.87 L702.59,338.05 L703.31,338.02 L704.04,338.34 L704.55,337.7 L705.47,338 L706.07,337.56 L706.68,337.15 L707.18,336.47 L707.94,336.41 L708.73,336.42 L709.38,336.1 L709.99,335.98 L710.7,336.07 L711.42,335.58 L712.12,335.76 L712.83,335.63 L713.54,335.47 L714.24,335.5 L714.95,335.63 L715.66,335.49 L716.35,335.92 L717.05,336.09 L717.76,335.98 L718.47,336.11 L719.18,335.72 L719.89,335.72 L720.59,336.07 L721.28,336.38 L722,335.98 L722.72,335.62 L723.42,335.66 L724.12,335.94 L724.82,336.24 L725.54,335.78 L726.24,335.93 L726.94,336.36 L727.63,336.65 L728.36,336.09 L729.06,336.35 L729.76,336.29 L730.48,335.87 L731.18,336.16 L731.89,336.01 L732.59,336.13 L733.29,336.62 L734,336.56 L734.72,336.01 L735.42,336.06 L736.11,336.66 L736.83,336.13 L737.53,336.34 L738.24,336.32 L738.95,336.14 L739.66,336.14 L740.36,336.26 L741.06,336.52 L741.75,337.02 L742.47,336.77 L743.18,336.44 L743.88,336.85 L744.59,336.51 L745.29,336.74 L746.02,336.59 L746.65,337.24 L747.42,336.79 L748.07,337.28 L748.78,337.22 L749.46,337.48 L750.19,337.35 L750.86,337.68 L751.61,337.35 L752.28,337.67 L752.99,337.71 L753.7,337.71 L754.39,337.83 L755.1,337.89 L755.81,337.85 L756.46,338.38 L757.19,338.23 L757.89,338.24 L758.65,337.88 L759.3,338.37 L760.04,338.16 L760.73,338.28 L761.41,338.56 L762.1,338.75 L762.83,338.57 L763.52,338.67 L764.2,338.99 L764.9,339.02 L765.61,339.04 L766.34,338.86 L766.96,339.19 L767.8,339.17 L768.51,338.81 L769.26,338.55 L770.01,338.56 L770.7,338.42 L771.39,338.36 L772.06,337.74 L772.76,337.96 L773.47,338.27 L774.14,337.77 L774.86,338.42 L775.53,337.7 L776.24,338.33 L776.91,337.71 L777.63,338.24 L778.32,338.22 L778.99,337.73 L779.71,338.2 L780.37,337.51 L781.09,338.1 L781.76,337.65 L782.46,337.68 L783.14,337.36 L783.85,337.76 L784.53,337.44 L785.24,337.77 L785.93,337.86 L786.62,337.65 L787.29,337.09 L787.97,337.91 L788.67,337.93 L789.39,337.73 L790.11,337.54 L790.8,337.76 L791.48,338.09 L792.2,337.76 L792.88,338.1 L793.59,337.99 L794.3,337.88 L794.97,338.39 L795.71,337.97 L796.39,338.19 L797.13,337.75 L797.8,338.17 L798.5,338.25" fill="none" stroke="#7eb26d" stroke-width="1.2" stroke-linejoin="round"/></g></svg>
<div class="ylab" style="right:1462px;top:106px">70.0000 °</div>
<div class="ylab" style="right:1462px;top:158px">60.0000 °</div>
<div class="ylab" style="right:1462px;top:210px">50.0000 °</div>
<div class="ylab" style="right:1462px;top:262px">40.0000 °</div>
<div class="ylab" style="right:1462px;top:314px">30.0000 °</div>
<div class="ylab" style="right:1462px;top:366px">20.0000 °</div>
<div class="xlab" style="left:165.08px;top:380px">10/16</div>
<div class="xlab" style="left:267.51px;top:380px">10/18</div>
<div class="xlab" style="left:369.94px;top:380px">10/20</div>
<div class="xlab" style="left:472.37px;top:380px">10/22</div>
<div class="xlab" style="left:574.79px;top:380px">10/24</div>
<div class="xlab" style="left:677.22px;top:380px">10/26</div>
<div class="lsw" style="left:102px;top:408.5px"></div>
<div class="ltxt" style="left:118px;top:403px;font-size:11.3px">tilt_value</div>
<div class="ltxt lcur" style="left:169.4px;top:403px">Current: 26.73300 °</div>
<div class="panel" style="left:835px;top:75px;width:745px;height:351px"></div>
<div class="ptitle" style="left:835px;top:82.5px;width:745px">temperature</div>
<svg class="chart" width="1600" height="826" viewBox="0 0 1600 826" style="left:0;top:0"><defs><clipPath id="cl_temp"><rect x="899" y="83" width="655" height="290"/></clipPath></defs><path d="M899,113h655v1h-655zM899,156h655v1h-655zM899,199h655v1h-655zM899,243h655v1h-655zM899,286h655v1h-655zM899,329h655v1h-655zM899,373h655v1h-655zM951,113h1v261h-1zM1053,113h1v261h-1zM1155,113h1v261h-1zM1257,113h1v261h-1zM1360,113h1v261h-1zM1462,113h1v261h-1z" fill="rgba(200,200,200,0.22)"/><g clip-path="url(#cl_temp)"><path d="M899.4,184.4 L899.67,185.65 L900.19,186.79 L901.19,187.72 L901.69,188.86 L901.8,190.19 L902.36,191.28 L902.9,193.27 L903.61,195.22 L903.94,197.27 L904.44,199.27 L904.95,201.26 L905.69,203.22 L906.02,205.27 L906.53,207.28 L906.83,209.35 L907.16,211.4 L907.67,213.41 L908.4,215.37 L908.94,217.38 L909.52,219.33 L910.16,220.2 L910.68,221.13 L910.97,222.19 L911.56,223.08 L912.05,224.03 L912.31,225.14 L912.99,225.7 L913.47,226.4 L914.13,226.98 L914.73,227.59 L915.08,228.39 L915.68,229.01 L916,229.83 L916.26,230.7 L916.92,231.27 L917.67,231.82 L917.78,233.01 L918.32,234 L918.84,234.99 L919.24,236.05 L919.8,237.02 L920.28,238.04 L921,238.94 L921.15,240.11 L921.8,241.26 L922.46,241.01 L922.81,241.53 L923.3,241.7 L923.84,241.76 L924.31,241.99 L924.8,242.16 L925.19,242.6 L925.77,242.56 L926.2,242.94 L926.77,242.79 L927.19,243.22 L927.69,243.36 L928.26,243.23 L928.74,243.41 L929.19,243.74 L929.72,243.76 L930.25,243.74 L930.79,243.71 L931.25,243.89 L931.73,244.14 L932.23,243.84 L932.7,244.31 L933.2,243.95 L933.67,244.36 L934.17,244.02 L934.64,244.43 L935.13,244.3 L935.62,244.2 L936.11,244.23 L936.59,244.34 L937.08,244.32 L937.57,244.18 L938.06,244.14 L938.54,244.34 L939.02,244.62 L939.51,244.45 L939.92,244.16 L940.56,244.42 L941.04,244.2 L941.58,244.14 L941.94,243.56 L942.55,243.71 L942.92,243.16 L943.53,243.33 L943.96,242.95 L944.45,242.76 L945.1,242.95 L945.37,242.32 L945.94,242.32 L946.5,242.29 L946.81,241.74 L947.27,241.5 L947.91,241.64 L948.26,241.18 L948.85,241.09 L949.01,240.3 L949.63,239.92 L950.01,239.33 L950.7,239.02 L950.91,238.27 L951.76,238.11 L951.82,237.22 L952.58,237.01 L952.81,236.35 L953.36,236.15 L954.01,236.12 L954.26,235.48 L954.74,235.18 L955.38,235.12 L955.74,234.66 L956.49,234.28 L956.51,235.57 L957.49,236.37 L958.07,237.37 L958.43,238.49 L958.81,239.6 L959.51,240.7 L959.74,239.91 L960.34,239.47 L960.71,238.81 L961.4,238.45 L962.04,238.04 L962.53,237.5 L963.11,237.03 L963.55,236.44 L964.1,235.95 L964.54,235.35 L964.94,234.72 L965.34,234.09 L966.03,233.73 L966.39,233.06 L966.8,232.44 L967.45,232.05 L968.14,231.69 L968.32,230.85 L969.03,230.5 L969.45,229.89 L970.01,229.41 L970.32,228.64 L971.2,228.31 L971.36,227.43 L972.02,226.92 L972.43,226.23 L972.73,225.45 L973.48,225.02 L973.77,224.24 L974.23,223.58 L974.71,222.94 L975.26,222.36 L975.72,221.71 L976.47,221.28 L976.9,220.6 L977.59,220.43 L978.08,220.01 L978.61,219.65 L978.84,218.89 L979.43,218.6 L979.86,218.11 L980.5,217.88 L981.02,217.5 L981.59,217.18 L982.07,216.74 L982.45,216.11 L982.97,216.01 L983.48,215.88 L983.85,215.39 L984.34,215.21 L984.91,215.23 L985.33,214.87 L985.95,215.01 L986.33,214.55 L986.79,214.28 L987.29,214.13 L987.79,213.96 L988.27,213.76 L988.82,213.73 L989.3,213.51 L989.75,213.23 L990.31,213.22 L990.7,212.78 L991.27,212.99 L991.76,212.98 L992.24,212.79 L992.7,212.57 L993.2,212.57 L993.69,212.56 L994.14,212.2 L994.65,212.37 L995.14,212.39 L995.61,212.13 L996.09,212.04 L996.61,212.41 L997.08,212.1 L997.57,212.15 L998.08,212.34 L998.55,212.11 L999.02,211.87 L999.54,212.24 L1000.01,211.82 L1000.55,211.7 L1000.98,212.17 L1001.54,211.9 L1002.02,212.11 L1002.47,212.5 L1002.98,212.48 L1003.55,212.17 L1004,212.51 L1004.51,212.57 L1005,212.69 L1005.53,212.61 L1005.99,212.91 L1006.54,212.69 L1007.02,212.89 L1007.53,213.03 L1007.88,213.59 L1008.61,213.38 L1008.93,214 L1009.58,213.95 L1009.98,214.4 L1010.53,214.56 L1011.01,214.85 L1011.43,215.26 L1012.03,215.32 L1012.6,215.43 L1013.1,215.68 L1013.61,215.92 L1013.91,216.58 L1014.46,216.72 L1014.81,217.1 L1015.42,217.45 L1016.19,217.63 L1016.43,218.37 L1016.89,218.89 L1017.41,219.34 L1018,219.7 L1018.56,220.11 L1019.02,220.62 L1019.38,221.24 L1020.09,221.47 L1020.49,222.05 L1021.01,222.5 L1021.31,223.18 L1021.88,223.58 L1022.32,224.1 L1022.86,224.53 L1023.58,224.76 L1024.11,225.2 L1024.5,225.78 L1025.08,226.13 L1025.55,226.58 L1025.98,227.06 L1026.42,227.54 L1027.05,227.74 L1027.5,228.22 L1028.26,228.23 L1028.7,228.72 L1029,229.4 L1029.81,229.34 L1030.24,229.83 L1030.88,230.02 L1031.38,230.39 L1031.62,231.12 L1032.09,231.48 L1032.7,231.62 L1033.37,231.67 L1033.82,232.07 L1034.34,232.35 L1034.7,232.89 L1035.19,233.21 L1035.77,233.4 L1036.24,233.76 L1036.87,233.87 L1037.24,234.4 L1037.61,234.92 L1038.17,235.14 L1038.88,235.12 L1039.24,235.65 L1039.68,236.06 L1040.33,236.15 L1040.62,236.79 L1041.26,236.88 L1041.68,237.33 L1042.28,237.5 L1042.59,238.12 L1043.16,238.34 L1043.73,238.56 L1044.37,238.67 L1044.77,239.14 L1045.4,239.26 L1045.72,239.86 L1046.13,240.33 L1046.85,240.3 L1047.25,240.79 L1047.76,241.1 L1048.28,241.39 L1048.68,241.87 L1049.11,242.3 L1049.68,242.51 L1050.26,242.72 L1050.6,243.29 L1051.31,243.29 L1051.67,243.83 L1052.2,244.11 L1052.66,244.48 L1053.14,244.85 L1053.85,244.87 L1054.19,245.44 L1054.76,245.72 L1055.15,246.23 L1055.52,246.76 L1056.13,246.98 L1056.85,247.07 L1057.17,247.67 L1057.56,248.17 L1057.98,248.63 L1058.56,248.9 L1058.98,249.37 L1059.76,249.37 L1059.9,250.19 L1060.47,250.47 L1061,250.8 L1061.38,251.32 L1061.87,251.7 L1062.67,251.73 L1062.86,252.5 L1063.37,252.95 L1064.1,253.17 L1064.36,253.88 L1064.92,254.28 L1065.57,254.57 L1065.81,255.31 L1066.58,255.49 L1066.87,256.16 L1067.44,256.55 L1068,256.94 L1068.37,257.54 L1068.9,257.97 L1069.5,258.32 L1069.67,259.12 L1070.53,259.2 L1071.05,259.64 L1071.35,260.32 L1071.69,260.94 L1072.26,261.33 L1072.71,261.84 L1073.31,262.19 L1073.72,262.74 L1074.35,263.06 L1074.87,263.5 L1075.27,264.07 L1075.95,264.33 L1076.38,264.78 L1076.66,265.41 L1077.32,265.39 L1077.63,265.96 L1078.11,266.26 L1078.71,266.34 L1079.11,266.76 L1079.57,267.09 L1080.03,267.41 L1080.73,267.31 L1081.21,267.6 L1081.63,267.99 L1082.09,268.31 L1082.63,268.5 L1083.2,268.63 L1083.52,269.2 L1083.89,269.69 L1084.55,269.65 L1084.99,270.02 L1085.53,270.13 L1086.01,270.37 L1086.42,270.81 L1087.04,270.69 L1087.47,271.08 L1088,271.17 L1088.49,271.37 L1088.92,271.76 L1089.58,271.46 L1089.94,272.06 L1090.54,271.94 L1090.97,272.31 L1091.44,272.57 L1091.97,272.66 L1092.52,272.69 L1092.93,273.12 L1093.58,272.87 L1093.97,273.35 L1094.52,273.39 L1094.99,273.64 L1095.43,274 L1095.94,274.14 L1096.47,274.22 L1097.04,274.22 L1097.55,274.35 L1098.01,274.65 L1098.55,274.7 L1099.04,274.9 L1099.41,275.46 L1100.08,275.16 L1100.44,275.73 L1101.02,275.66 L1101.53,275.82 L1102.04,275.97 L1102.53,276 L1103,276.27 L1103.52,276.15 L1104,276.37 L1104.51,276.33 L1104.98,276.74 L1105.47,276.8 L1106,276.57 L1106.49,276.73 L1106.97,276.96 L1107.51,276.65 L1108.02,276.56 L1108.52,276.69 L1109.02,276.71 L1109.49,277.06 L1110.03,276.93 L1110.54,277.17 L1110.92,277.66 L1111.57,277.61 L1111.92,278.17 L1112.46,278.32 L1113.03,278.45 L1113.41,278.92 L1114.04,278.92 L1114.4,279.45 L1114.89,279.73 L1115.5,279.75 L1115.95,280.1 L1116.38,280.49 L1116.93,280.63 L1117.43,280.88 L1117.89,281.23 L1118.37,281.55 L1118.92,281.74 L1119.36,282.14 L1120.06,282.07 L1120.46,282.52 L1120.95,282.83 L1121.54,282.96 L1122.03,283.26 L1122.6,283.43 L1122.86,284.12 L1123.54,284.09 L1124.01,284.44 L1124.38,284.95 L1125.09,284.86 L1125.36,285.55 L1126.11,285.4 L1126.64,285.63 L1127.04,286.09 L1127.54,286.38 L1127.88,286.95 L1128.39,287.22 L1128.92,287.44 L1129.52,287.56 L1129.99,287.9 L1130.58,288.02 L1130.9,288.62 L1131.53,288.67 L1132.06,288.9 L1132.48,289.38 L1133.06,289.24 L1133.53,289.47 L1133.93,289.97 L1134.57,289.63 L1135.06,289.79 L1135.55,289.97 L1136.04,290.14 L1136.51,290.37 L1137.04,290.42 L1137.53,290.61 L1138.04,290.69 L1138.54,290.83 L1138.98,291.18 L1139.53,291.17 L1140.02,291.33 L1140.46,291.69 L1141.07,291.43 L1141.56,291.61 L1141.94,292.16 L1142.51,292.06 L1142.95,292.4 L1143.56,292.17 L1144,292.53 L1144.44,292.86 L1145.03,292.71 L1145.46,293.09 L1145.98,293.14 L1146.52,293.16 L1146.92,293.65 L1147.51,293.44 L1148,293.57 L1148.49,293.74 L1149.02,293.64 L1149.47,294.03 L1149.99,293.97 L1150.49,294.05 L1151,294.11 L1151.45,294.45 L1151.95,294.54 L1152.47,294.54 L1153,294.39 L1153.51,294.45 L1154,294.6 L1154.54,294.4 L1155.04,294.52 L1155.45,295.13 L1156.04,294.7 L1156.37,295.23 L1156.95,295.37 L1157.38,295.77 L1158.12,295.61 L1158.56,296.01 L1158.91,296.55 L1159.64,296.41 L1160.11,296.74 L1160.54,297.14 L1161.1,297.33 L1161.6,297.59 L1161.95,298.14 L1162.62,298.12 L1162.86,298.86 L1163.46,298.97 L1164.13,298.93 L1164.38,299.65 L1165.08,299.59 L1165.51,299.99 L1165.98,300.31 L1166.61,300.37 L1167,300.83 L1167.63,300.88 L1168.09,301.23 L1168.38,301.89 L1168.91,302.11 L1169.49,302.23 L1169.95,302.6 L1170.4,302.96 L1171.1,302.83 L1171.5,303.28 L1172.1,303.35 L1172.61,303.61 L1173.11,303.87 L1173.58,304.18 L1174.12,304.36 L1174.58,304.71 L1175.03,305.06 L1175.47,305.45 L1175.9,305.84 L1176.39,306.13 L1176.94,306.29 L1177.5,306.44 L1177.88,306.92 L1178.59,306.78 L1179.11,307.02 L1179.41,307.66 L1179.96,307.82 L1180.58,307.86 L1181.03,308.21 L1181.56,308.43 L1182.01,308.76 L1182.51,308.86 L1183.01,308.94 L1183.46,309.28 L1183.96,309.38 L1184.49,309.34 L1185,309.38 L1185.53,309.37 L1185.97,309.76 L1186.44,309.99 L1187.03,309.64 L1187.48,310.02 L1188.08,310.08 L1188.57,309.57 L1188.8,308.8 L1189.52,308.52 L1189.87,307.87 L1190.37,307.37 L1191.03,307.03 L1191.56,306.56 L1192.05,306.05 L1192.6,305.6 L1193.09,305.09 L1193.49,304.49 L1193.89,303.75 L1194.57,303.92 L1195.08,303.73 L1195.58,303.51 L1196.02,303.15 L1196.39,302.62 L1196.93,302.48 L1197.4,302.21 L1198.03,302.27 L1198.51,302 L1198.92,301.58 L1199.61,301.77 L1200.12,301.56 L1200.6,301.29 L1200.99,300.83 L1201.45,300.51 L1201.93,300.24 L1202.58,300.35 L1203.05,300.06 L1203.45,299.6 L1204.1,299.72 L1204.52,299.31 L1204.98,299 L1205.48,298.78 L1206.05,298.72 L1206.49,298.35 L1207.04,298.24 L1207.41,297.72 L1208.05,297.81 L1208.44,297.35 L1209.01,297.5 L1209.49,297.05 L1210,297.1 L1210.5,297.2 L1211,297.09 L1211.5,297.14 L1212.01,297.35 L1212.49,296.9 L1213.01,297.21 L1213.51,297.14 L1214.01,297.17 L1214.5,296.94 L1215,296.92 L1215.5,296.83 L1216,296.88 L1216.49,296.73 L1216.99,296.66 L1217.5,296.81 L1218.04,296.62 L1218.5,296.91 L1218.99,297.09 L1219.53,297.06 L1220.05,297.11 L1220.48,297.49 L1220.95,297.76 L1221.54,297.51 L1221.98,297.87 L1222.48,298.02 L1222.94,298.27 L1223.47,298.28 L1224.01,298.18 L1224.51,298.15 L1224.99,298.55 L1225.51,298.25 L1226.01,298.11 L1226.49,298.65 L1227.01,298.27 L1227.51,298.36 L1228.01,298.39 L1228.51,298.38 L1228.99,298.68 L1229.5,298.48 L1230,298.56 L1230.5,298.58 L1230.99,298.85 L1231.51,298.39 L1232,298.75 L1232.51,298.5 L1232.96,298.54 L1233.51,298.73 L1233.99,298.5 L1234.45,298.23 L1235.01,298.45 L1235.54,298.56 L1236.02,298.31 L1236.5,298.13 L1237.03,298.23 L1237.54,298.21 L1237.96,297.67 L1238.48,297.67 L1239.19,297.91 L1239.67,297.44 L1239.88,296.67 L1240.58,296.44 L1241.15,296.07 L1241.54,295.49 L1242.08,295.09 L1242.51,294.56 L1242.89,293.98 L1243.38,293.52 L1243.82,293 L1244.57,292.82 L1244.97,292.09 L1245.51,292.3 L1245.99,292.1 L1246.49,292.05 L1247.04,292.3 L1247.49,291.89 L1248,291.87 L1248.49,291.74 L1248.98,291.57 L1249.48,291.51 L1250,291.62 L1250.53,291.72 L1250.97,291.22 L1251.54,291.65 L1252.01,291.42 L1252.58,290.99 L1252.96,291.52 L1253.52,291.49 L1254,291.71 L1254.57,291.62 L1255,292.01 L1255.5,292.16 L1255.95,292.46 L1256.49,292.5 L1256.96,292.72 L1257.46,292.88 L1258.05,292.74 L1258.58,292.78 L1259,293.19 L1259.56,293.14 L1260.04,293.29 L1260.52,293.5 L1261,293.72 L1261.49,293.87 L1261.98,293.99 L1262.45,294.26 L1263.05,293.87 L1263.49,294.23 L1264.05,294.06 L1264.48,294.5 L1265.01,294.46 L1265.54,294.39 L1266.02,294.59 L1266.48,294.89 L1267,294.88 L1267.45,295.26 L1268.02,295 L1268.52,295.09 L1268.96,295.52 L1269.49,295.42 L1270.04,295.22 L1270.47,295.71 L1271.01,295.55 L1271.45,295.98 L1271.99,295.89 L1272.47,296.08 L1272.96,296.22 L1273.5,296.09 L1273.95,296.45 L1274.55,295.98 L1275.02,296.26 L1275.46,296.64 L1276.05,296.24 L1276.48,296.72 L1276.95,297 L1277.48,296.93 L1277.96,297.1 L1278.54,296.73 L1279,297.09 L1279.49,297.22 L1280.01,297.21 L1280.51,297.29 L1280.97,297.6 L1281.54,297.32 L1282.05,297.34 L1282.48,297.75 L1282.89,298.18 L1283.42,298.32 L1283.96,298.46 L1284.55,298.47 L1284.9,299.02 L1285.61,298.77 L1286.06,299.1 L1286.43,299.62 L1286.9,299.9 L1287.52,299.85 L1287.9,300.34 L1288.59,300.13 L1288.98,300.61 L1289.6,300.54 L1290.06,300.85 L1290.57,301.04 L1291.11,301.14 L1291.52,301.57 L1292,301.83 L1292.55,301.92 L1292.97,302.33 L1293.6,302.21 L1294,302.68 L1294.49,302.89 L1295.02,303.03 L1295.4,303.52 L1296.09,303.29 L1296.52,303.67 L1297.01,303.89 L1297.53,304.05 L1297.89,304.6 L1298.48,304.58 L1299.01,304.76 L1299.5,304.13 L1300.02,303.53 L1300.78,303.13 L1301.24,302.47 L1301.69,301.81 L1302,301.02 L1302.72,300.59 L1303.03,299.8 L1303.66,299.29 L1304.36,298.49 L1304.68,299.07 L1305.09,299.43 L1305.65,299.45 L1306.15,299.62 L1306.71,299.65 L1307.14,299.97 L1307.61,300.19 L1308.1,300.37 L1308.62,300.5 L1309.11,300.68 L1309.46,301.18 L1309.9,301.5 L1310.45,301.63 L1311.02,301.71 L1311.66,301.57 L1312.13,301.92 L1312.53,302.42 L1313.03,302.69 L1313.64,302.65 L1314.15,302.86 L1314.65,303.12 L1315.26,303.07 L1315.68,303.52 L1316.29,303.53 L1316.64,304.06 L1317.25,304.15 L1317.68,304.54 L1318.2,304.77 L1318.7,305.04 L1319.21,305.28 L1319.56,305.82 L1320.11,306.01 L1320.7,306.12 L1321.17,306.44 L1321.54,306.93 L1322.08,307.14 L1322.6,307.37 L1323,307.82 L1323.75,307.66 L1324.09,308.2 L1324.58,308.5 L1325.12,308.69 L1325.46,309.24 L1325.95,309.54 L1326.62,309.54 L1327.05,309.95 L1327.5,310.33 L1328.01,310.59 L1328.61,310.71 L1328.97,311.23 L1329.6,311.3 L1330.16,311.49 L1330.5,312.06 L1331,312.35 L1331.57,312.52 L1332.03,312.87 L1332.38,313.41 L1332.93,313.62 L1333.54,313.71 L1333.88,314.27 L1334.48,314.39 L1335.03,314.6 L1335.45,315.02 L1335.9,315.39 L1336.36,315.75 L1336.93,315.93 L1337.42,316.22 L1338,316.38 L1338.61,316.5 L1338.97,317.01 L1339.57,317.13 L1339.81,317.85 L1340.48,317.85 L1340.9,318.27 L1341.36,318.64 L1342.03,318.65 L1342.32,319.28 L1342.97,319.32 L1343.54,319.49 L1343.87,320.05 L1344.42,320.24 L1344.84,320.7 L1345.44,320.58 L1346.02,320.54 L1346.55,320.66 L1347.07,320.82 L1347.5,321.25 L1348.15,319.41 L1348.29,317.43 L1348.97,315.61 L1349.58,313.76 L1350.34,311.95 L1350.91,310.09 L1351.37,308.2 L1351.76,306.29 L1352.23,304.43 L1352.6,303.76 L1353.28,303.4 L1353.61,302.68 L1354.18,302.22 L1354.92,301.91 L1355.31,301.29 L1355.81,301.29 L1356.27,301.04 L1356.74,300.84 L1357.25,300.88 L1357.75,300.82 L1358.2,300.54 L1358.75,300.8 L1359.16,300.79 L1359.74,300.39 L1360.24,300.5 L1360.7,300.91 L1361.22,300.93 L1361.77,300.71 L1362.25,301 L1362.79,300.87 L1363.25,301.32 L1363.78,301.23 L1364.3,301.26 L1364.84,301.12 L1365.33,301.34 L1365.83,301.46 L1366.35,301.47 L1366.88,301.43 L1367.39,301.52 L1367.85,301.89 L1368.34,302.1 L1368.86,302.13 L1369.39,302.07 L1369.88,302.22 L1370.4,301.87 L1370.89,301.95 L1371.36,302.29 L1371.89,301.91 L1372.37,302 L1372.83,302.46 L1373.35,302.16 L1373.85,302.19 L1374.33,302.36 L1374.8,302.66 L1375.33,302.21 L1375.78,302.77 L1376.3,302.47 L1376.78,302.67 L1377.28,302.66 L1377.79,302.49 L1378.23,303.03 L1378.77,302.61 L1379.25,303.05 L1379.76,303.16 L1380.32,302.97 L1380.8,303.34 L1381.39,302.87 L1381.9,302.99 L1382.4,303.26 L1382.95,303.08 L1383.41,303.58 L1383.96,303.48 L1384.46,303.71 L1384.95,303.48 L1385.38,303.14 L1386.06,303.43 L1386.4,302.86 L1386.93,302.78 L1387.35,302.42 L1387.94,302.49 L1388.4,302.22 L1388.83,301.88 L1389.29,301.6 L1389.84,301.57 L1390.43,301.63 L1390.77,301.08 L1391.28,300.93 L1391.85,300.95 L1392.34,300.77 L1392.84,300.68 L1393.3,300.49 L1393.82,300.51 L1394.22,300 L1394.8,300.35 L1395.18,299.72 L1395.68,299.68 L1396.16,299.57 L1396.73,299.86 L1397.19,299.6 L1397.73,299.75 L1398.22,299.68 L1398.7,299.57 L1399.15,299.27 L1399.61,299.01 L1400.17,299.27 L1400.7,298.99 L1400.94,298.25 L1401.58,297.86 L1401.83,297.12 L1402.31,296.59 L1402.93,296.29 L1403.41,297.25 L1403.86,298.23 L1404.43,299.14 L1405.28,299.9 L1405.49,301.01 L1405.88,302.02 L1406.56,302.87 L1407.19,303.76 L1407.58,304.66 L1407.94,303.3 L1408.75,302.1 L1409.42,300.86 L1409.43,299.37 L1410.32,298.2 L1410.85,296.91 L1411.03,295.48 L1411.78,294.31 L1411.94,293.27 L1412.53,292.5 L1413.18,291.77 L1413.86,291.06 L1414.2,290.13 L1414.49,289.17 L1415.43,288.62 L1415.77,287.69 L1416.39,286.94 L1416.63,285.95 L1417.2,285.16 L1417.83,284.16 L1418.31,284.26 L1418.78,284.46 L1419.27,284.5 L1419.74,284.69 L1420.22,284.85 L1420.74,284.6 L1421.19,285 L1421.65,284.88 L1422.25,285.03 L1422.79,285.27 L1423.04,285.97 L1423.64,286.13 L1424.33,286.13 L1424.62,286.77 L1425.22,286.93 L1425.7,287.27 L1426.08,287.75 L1426.76,287.79 L1427.24,288.13 L1427.65,288.58 L1428.03,289.08 L1428.79,288.98 L1429.04,289.67 L1429.58,289.93 L1430.25,289.96 L1430.59,290.52 L1431.1,290.81 L1431.57,291.17 L1432.12,291.4 L1432.69,291.6 L1433.12,292.01 L1433.7,292.19 L1434.13,292.61 L1434.64,292.9 L1435.24,293.06 L1435.69,293.44 L1436.15,293.81 L1436.62,294.14 L1437.08,294.44 L1437.54,294.74 L1438.15,294.67 L1438.58,295.03 L1439.13,295.11 L1439.65,295.25 L1440.17,295.4 L1440.48,296.06 L1440.98,296.24 L1441.5,296.38 L1442.15,296.22 L1442.65,296.41 L1443.16,296.58 L1443.61,296.89 L1444.08,297.16 L1444.68,297.13 L1445.08,297.56 L1445.52,297.91 L1445.98,298.19 L1446.63,298.03 L1447.17,298.12 L1447.49,298.76 L1448.08,298.73 L1448.59,298.9 L1449.12,299.01 L1449.6,299.27 L1450.09,299.47 L1450.59,299.66 L1451.1,299.85 L1451.53,300.21 L1451.96,300.57 L1452.57,300.49 L1453.05,300.75 L1453.53,300.99 L1453.95,301.39 L1454.46,301.55 L1454.91,301.87 L1455.59,301.62 L1455.95,302.17 L1456.56,302.09 L1457,302.44 L1457.5,302.62 L1457.99,302.84 L1458.55,302.9 L1459.1,302.96 L1459.61,303.13 L1459.92,303.84 L1460.43,303.98 L1461,303.9 L1461.57,303.84 L1461.93,304.43 L1462.49,304.4 L1462.99,304.54 L1463.46,304.79 L1464.04,304.68 L1464.53,304.87 L1464.92,305.37 L1465.43,305.48 L1465.88,305.79 L1466.48,305.63 L1466.88,306.1 L1467.39,306.21 L1467.96,306.15 L1468.39,306.53 L1469.02,306.27 L1469.54,306.38 L1469.9,306.96 L1470.52,306.74 L1470.95,307.11 L1471.4,307.39 L1471.91,307.52 L1472.49,307.42 L1472.89,307.9 L1473.52,307.63 L1473.93,308.09 L1474.36,308.44 L1474.92,308.4 L1475.47,308.42 L1475.84,308.98 L1476.38,308.98 L1476.87,309.18 L1477.35,309.39 L1477.84,309.58 L1478.4,309.53 L1478.85,309.83 L1479.41,309.81 L1479.95,309.82 L1480.45,310 L1480.95,310.15 L1481.49,310.17 L1481.89,310.67 L1482.41,310.64 L1482.84,311.03 L1483.44,310.62 L1483.85,311.15 L1484.41,310.9 L1484.89,311.07 L1485.39,311.14 L1485.81,311.63 L1486.34,311.54 L1486.85,311.53 L1487.38,311.46 L1487.89,311.47 L1488.35,311.76 L1488.78,312.21 L1489.33,311.99 L1489.8,312.23 L1490.27,312.44 L1490.86,312.05 L1491.33,312.3 L1491.81,312.45 L1492.33,312.44 L1492.81,312.62 L1493.27,312.89 L1493.82,312.67 L1494.26,313.09 L1494.8,312.95 L1495.25,313.26 L1495.8,313.07 L1496.23,313.53 L1496.76,313.41 L1497.21,313.74 L1497.69,313.92 L1498.23,313.79 L1498.79,313.55 L1499.24,313.85 L1499.67,314.3 L1500.2,314.21 L1500.69,314.37 L1501.21,314.3 L1501.66,314.66 L1502.32,314.71 L1502.73,314.27 L1503.22,313.97 L1503.56,313.43 L1504.03,313.09 L1504.58,312.9 L1505.24,312.88 L1505.77,312.65 L1506.24,312.32 L1506.77,312.1 L1507.01,311.36 L1507.5,311.07 L1508.06,310.9 L1508.49,310.49 L1509.15,310.49 L1509.75,310.38 L1510.24,310.08 L1510.49,309.38 L1511.16,309.37 L1511.62,309.1 L1512.12,308.98 L1512.59,308.73 L1513.07,308.51 L1513.65,308.78 L1514.15,308.68 L1514.63,308.46 L1515.11,308.25 L1515.54,307.84 L1516.07,307.87 L1516.57,307.74 L1517.07,307.63 L1517.56,307.51 L1518.12,307.66 L1518.62,307.56 L1519.06,307.15 L1519.65,307.46 L1520.04,306.83 L1520.66,307.27 L1521.11,306.95 L1521.62,306.87 L1522.07,306.55 L1522.62,306.68 L1523.15,306.67 L1523.56,306.17 L1524.05,306.02 L1524.64,306.29 L1525.07,305.86 L1525.58,305.66 L1526.1,305.86 L1526.58,305.63 L1527.08,305.61 L1527.58,305.61 L1528.06,305.45 L1528.6,305.85 L1529.08,305.66 L1529.58,305.67 L1530.06,305.42 L1530.58,305.66 L1531.09,305.74 L1531.58,305.72 L1532.03,305.11 L1532.54,305.23 L1533.03,305.05 L1533.55,305.24 L1534.05,305.31 L1534.55,305.24 L1535.03,305.05 L1535.56,305.38 L1536.04,305.13 L1536.55,305.32 L1537.02,304.94 L1537.53,305.03 L1538,304.66 L1538.52,304.88 L1539.02,304.91 L1539.49,304.62 L1540.01,304.81 L1540.54,304.48 L1541,304.76 L1541.49,304.93 L1542,304.95 L1542.54,304.84 L1543.03,304.95 L1543.51,305.14 L1543.98,305.39 L1544.51,305.35 L1545.03,305.29 L1545.52,305.46 L1546.02,305.53 L1546.54,305.51 L1546.99,305.87 L1547.51,305.88 L1548.07,306.1 L1548.69,306.22 L1548.94,306.99 L1549.72,306.83 L1550.22,307.16 L1550.69,307.54 L1551.06,308.09 L1551.54,308.46 L1552.11,308.66 L1552.79,308.66 L1553.13,309.29 L1553.75,309.4 L1553.75,373 L899.4,373 Z" fill="rgba(126,178,109,0.1)"/><path d="M899.4,184.4 L899.67,185.65 L900.19,186.79 L901.19,187.72 L901.69,188.86 L901.8,190.19 L902.36,191.28 L902.9,193.27 L903.61,195.22 L903.94,197.27 L904.44,199.27 L904.95,201.26 L905.69,203.22 L906.02,205.27 L906.53,207.28 L906.83,209.35 L907.16,211.4 L907.67,213.41 L908.4,215.37 L908.94,217.38 L909.52,219.33 L910.16,220.2 L910.68,221.13 L910.97,222.19 L911.56,223.08 L912.05,224.03 L912.31,225.14 L912.99,225.7 L913.47,226.4 L914.13,226.98 L914.73,227.59 L915.08,228.39 L915.68,229.01 L916,229.83 L916.26,230.7 L916.92,231.27 L917.67,231.82 L917.78,233.01 L918.32,234 L918.84,234.99 L919.24,236.05 L919.8,237.02 L920.28,238.04 L921,238.94 L921.15,240.11 L921.8,241.26 L922.46,241.01 L922.81,241.53 L923.3,241.7 L923.84,241.76 L924.31,241.99 L924.8,242.16 L925.19,242.6 L925.77,242.56 L926.2,242.94 L926.77,242.79 L927.19,243.22 L927.69,243.36 L928.26,243.23 L928.74,243.41 L929.19,243.74 L929.72,243.76 L930.25,243.74 L930.79,243.71 L931.25,243.89 L931.73,244.14 L932.23,243.84 L932.7,244.31 L933.2,243.95 L933.67,244.36 L934.17,244.02 L934.64,244.43 L935.13,244.3 L935.62,244.2 L936.11,244.23 L936.59,244.34 L937.08,244.32 L937.57,244.18 L938.06,244.14 L938.54,244.34 L939.02,244.62 L939.51,244.45 L939.92,244.16 L940.56,244.42 L941.04,244.2 L941.58,244.14 L941.94,243.56 L942.55,243.71 L942.92,243.16 L943.53,243.33 L943.96,242.95 L944.45,242.76 L945.1,242.95 L945.37,242.32 L945.94,242.32 L946.5,242.29 L946.81,241.74 L947.27,241.5 L947.91,241.64 L948.26,241.18 L948.85,241.09 L949.01,240.3 L949.63,239.92 L950.01,239.33 L950.7,239.02 L950.91,238.27 L951.76,238.11 L951.82,237.22 L952.58,237.01 L952.81,236.35 L953.36,236.15 L954.01,236.12 L954.26,235.48 L954.74,235.18 L955.38,235.12 L955.74,234.66 L956.49,234.28 L956.51,235.57 L957.49,236.37 L958.07,237.37 L958.43,238.49 L958.81,239.6 L959.51,240.7 L959.74,239.91 L960.34,239.47 L960.71,238.81 L961.4,238.45 L962.04,238.04 L962.53,237.5 L963.11,237.03 L963.55,236.44 L964.1,235.95 L964.54,235.35 L964.94,234.72 L965.34,234.09 L966.03,233.73 L966.39,233.06 L966.8,232.44 L967.45,232.05 L968.14,231.69 L968.32,230.85 L969.03,230.5 L969.45,229.89 L970.01,229.41 L970.32,228.64 L971.2,228.31 L971.36,227.43 L972.02,226.92 L972.43,226.23 L972.73,225.45 L973.48,225.02 L973.77,224.24 L974.23,223.58 L974.71,222.94 L975.26,222.36 L975.72,221.71 L976.47,221.28 L976.9,220.6 L977.59,220.43 L978.08,220.01 L978.61,219.65 L978.84,218.89 L979.43,218.6 L979.86,218.11 L980.5,217.88 L981.02,217.5 L981.59,217.18 L982.07,216.74 L982.45,216.11 L982.97,216.01 L983.48,215.88 L983.85,215.39 L984.34,215.21 L984.91,215.23 L985.33,214.87 L985.95,215.01 L986.33,214.55 L986.79,214.28 L987.29,214.13 L987.79,213.96 L988.27,213.76 L988.82,213.73 L989.3,213.51 L989.75,213.23 L990.31,213.22 L990.7,212.78 L991.27,212.99 L991.76,212.98 L992.24,212.79 L992.7,212.57 L993.2,212.57 L993.69,212.56 L994.14,212.2 L994.65,212.37 L995.14,212.39 L995.61,212.13 L996.09,212.04 L996.61,212.41 L997.08,212.1 L997.57,212.15 L998.08,212.34 L998.55,212.11 L999.02,211.87 L999.54,212.24 L1000.01,211.82 L1000.55,211.7 L1000.98,212.17 L1001.54,211.9 L1002.02,212.11 L1002.47,212.5 L1002.98,212.48 L1003.55,212.17 L1004,212.51 L1004.51,212.57 L1005,212.69 L1005.53,212.61 L1005.99,212.91 L1006.54,212.69 L1007.02,212.89 L1007.53,213.03 L1007.88,213.59 L1008.61,213.38 L1008.93,214 L1009.58,213.95 L1009.98,214.4 L1010.53,214.56 L1011.01,214.85 L1011.43,215.26 L1012.03,215.32 L1012.6,215.43 L1013.1,215.68 L1013.61,215.92 L1013.91,216.58 L1014.46,216.72 L1014.81,217.1 L1015.42,217.45 L1016.19,217.63 L1016.43,218.37 L1016.89,218.89 L1017.41,219.34 L1018,219.7 L1018.56,220.11 L1019.02,220.62 L1019.38,221.24 L1020.09,221.47 L1020.49,222.05 L1021.01,222.5 L1021.31,223.18 L1021.88,223.58 L1022.32,224.1 L1022.86,224.53 L1023.58,224.76 L1024.11,225.2 L1024.5,225.78 L1025.08,226.13 L1025.55,226.58 L1025.98,227.06 L1026.42,227.54 L1027.05,227.74 L1027.5,228.22 L1028.26,228.23 L1028.7,228.72 L1029,229.4 L1029.81,229.34 L1030.24,229.83 L1030.88,230.02 L1031.38,230.39 L1031.62,231.12 L1032.09,231.48 L1032.7,231.62 L1033.37,231.67 L1033.82,232.07 L1034.34,232.35 L1034.7,232.89 L1035.19,233.21 L1035.77,233.4 L1036.24,233.76 L1036.87,233.87 L1037.24,234.4 L1037.61,234.92 L1038.17,235.14 L1038.88,235.12 L1039.24,235.65 L1039.68,236.06 L1040.33,236.15 L1040.62,236.79 L1041.26,236.88 L1041.68,237.33 L1042.28,237.5 L1042.59,238.12 L1043.16,238.34 L1043.73,238.56 L1044.37,238.67 L1044.77,239.14 L1045.4,239.26 L1045.72,239.86 L1046.13,240.33 L1046.85,240.3 L1047.25,240.79 L1047.76,241.1 L1048.28,241.39 L1048.68,241.87 L1049.11,242.3 L1049.68,242.51 L1050.26,242.72 L1050.6,243.29 L1051.31,243.29 L1051.67,243.83 L1052.2,244.11 L1052.66,244.48 L1053.14,244.85 L1053.85,244.87 L1054.19,245.44 L1054.76,245.72 L1055.15,246.23 L1055.52,246.76 L1056.13,246.98 L1056.85,247.07 L1057.17,247.67 L1057.56,248.17 L1057.98,248.63 L1058.56,248.9 L1058.98,249.37 L1059.76,249.37 L1059.9,250.19 L1060.47,250.47 L1061,250.8 L1061.38,251.32 L1061.87,251.7 L1062.67,251.73 L1062.86,252.5 L1063.37,252.95 L1064.1,253.17 L1064.36,253.88 L1064.92,254.28 L1065.57,254.57 L1065.81,255.31 L1066.58,255.49 L1066.87,256.16 L1067.44,256.55 L1068,256.94 L1068.37,257.54 L1068.9,257.97 L1069.5,258.32 L1069.67,259.12 L1070.53,259.2 L1071.05,259.64 L1071.35,260.32 L1071.69,260.94 L1072.26,261.33 L1072.71,261.84 L1073.31,262.19 L1073.72,262.74 L1074.35,263.06 L1074.87,263.5 L1075.27,264.07 L1075.95,264.33 L1076.38,264.78 L1076.66,265.41 L1077.32,265.39 L1077.63,265.96 L1078.11,266.26 L1078.71,266.34 L1079.11,266.76 L1079.57,267.09 L1080.03,267.41 L1080.73,267.31 L1081.21,267.6 L1081.63,267.99 L1082.09,268.31 L1082.63,268.5 L1083.2,268.63 L1083.52,269.2 L1083.89,269.69 L1084.55,269.65 L1084.99,270.02 L1085.53,270.13 L1086.01,270.37 L1086.42,270.81 L1087.04,270.69 L1087.47,271.08 L1088,271.17 L1088.49,271.37 L1088.92,271.76 L1089.58,271.46 L1089.94,272.06 L1090.54,271.94 L1090.97,272.31 L1091.44,272.57 L1091.97,272.66 L1092.52,272.69 L1092.93,273.12 L1093.58,272.87 L1093.97,273.35 L1094.52,273.39 L1094.99,273.64 L1095.43,274 L1095.94,274.14 L1096.47,274.22 L1097.04,274.22 L1097.55,274.35 L1098.01,274.65 L1098.55,274.7 L1099.04,274.9 L1099.41,275.46 L1100.08,275.16 L1100.44,275.73 L1101.02,275.66 L1101.53,275.82 L1102.04,275.97 L1102.53,276 L1103,276.27 L1103.52,276.15 L1104,276.37 L1104.51,276.33 L1104.98,276.74 L1105.47,276.8 L1106,276.57 L1106.49,276.73 L1106.97,276.96 L1107.51,276.65 L1108.02,276.56 L1108.52,276.69 L1109.02,276.71 L1109.49,277.06 L1110.03,276.93 L1110.54,277.17 L1110.92,277.66 L1111.57,277.61 L1111.92,278.17 L1112.46,278.32 L1113.03,278.45 L1113.41,278.92 L1114.04,278.92 L1114.4,279.45 L1114.89,279.73 L1115.5,279.75 L1115.95,280.1 L1116.38,280.49 L1116.93,280.63 L1117.43,280.88 L1117.89,281.23 L1118.37,281.55 L1118.92,281.74 L1119.36,282.14 L1120.06,282.07 L1120.46,282.52 L1120.95,282.83 L1121.54,282.96 L1122.03,283.26 L1122.6,283.43 L1122.86,284.12 L1123.54,284.09 L1124.01,284.44 L1124.38,284.95 L1125.09,284.86 L1125.36,285.55 L1126.11,285.4 L1126.64,285.63 L1127.04,286.09 L1127.54,286.38 L1127.88,286.95 L1128.39,287.22 L1128.92,287.44 L1129.52,287.56 L1129.99,287.9 L1130.58,288.02 L1130.9,288.62 L1131.53,288.67 L1132.06,288.9 L1132.48,289.38 L1133.06,289.24 L1133.53,289.47 L1133.93,289.97 L1134.57,289.63 L1135.06,289.79 L1135.55,289.97 L1136.04,290.14 L1136.51,290.37 L1137.04,290.42 L1137.53,290.61 L1138.04,290.69 L1138.54,290.83 L1138.98,291.18 L1139.53,291.17 L1140.02,291.33 L1140.46,291.69 L1141.07,291.43 L1141.56,291.61 L1141.94,292.16 L1142.51,292.06 L1142.95,292.4 L1143.56,292.17 L1144,292.53 L1144.44,292.86 L1145.03,292.71 L1145.46,293.09 L1145.98,293.14 L1146.52,293.16 L1146.92,293.65 L1147.51,293.44 L1148,293.57 L1148.49,293.74 L1149.02,293.64 L1149.47,294.03 L1149.99,293.97 L1150.49,294.05 L1151,294.11 L1151.45,294.45 L1151.95,294.54 L1152.47,294.54 L1153,294.39 L1153.51,294.45 L1154,294.6 L1154.54,294.4 L1155.04,294.52 L1155.45,295.13 L1156.04,294.7 L1156.37,295.23 L1156.95,295.37 L1157.38,295.77 L1158.12,295.61 L1158.56,296.01 L1158.91,296.55 L1159.64,296.41 L1160.11,296.74 L1160.54,297.14 L1161.1,297.33 L1161.6,297.59 L1161.95,298.14 L1162.62,298.12 L1162.86,298.86 L1163.46,298.97 L1164.13,298.93 L1164.38,299.65 L1165.08,299.59 L1165.51,299.99 L1165.98,300.31 L1166.61,300.37 L1167,300.83 L1167.63,300.88 L1168.09,301.23 L1168.38,301.89 L1168.91,302.11 L1169.49,302.23 L1169.95,302.6 L1170.4,302.96 L1171.1,302.83 L1171.5,303.28 L1172.1,303.35 L1172.61,303.61 L1173.11,303.87 L1173.58,304.18 L1174.12,304.36 L1174.58,304.71 L1175.03,305.06 L1175.47,305.45 L1175.9,305.84 L1176.39,306.13 L1176.94,306.29 L1177.5,306.44 L1177.88,306.92 L1178.59,306.78 L1179.11,307.02 L1179.41,307.66 L1179.96,307.82 L1180.58,307.86 L1181.03,308.21 L1181.56,308.43 L1182.01,308.76 L1182.51,308.86 L1183.01,308.94 L1183.46,309.28 L1183.96,309.38 L1184.49,309.34 L1185,309.38 L1185.53,309.37 L1185.97,309.76 L1186.44,309.99 L1187.03,309.64 L1187.48,310.02 L1188.08,310.08 L1188.57,309.57 L1188.8,308.8 L1189.52,308.52 L1189.87,307.87 L1190.37,307.37 L1191.03,307.03 L1191.56,306.56 L1192.05,306.05 L1192.6,305.6 L1193.09,305.09 L1193.49,304.49 L1193.89,303.75 L1194.57,303.92 L1195.08,303.73 L1195.58,303.51 L1196.02,303.15 L1196.39,302.62 L1196.93,302.48 L1197.4,302.21 L1198.03,302.27 L1198.51,302 L1198.92,301.58 L1199.61,301.77 L1200.12,301.56 L1200.6,301.29 L1200.99,300.83 L1201.45,300.51 L1201.93,300.24 L1202.58,300.35 L1203.05,300.06 L1203.45,299.6 L1204.1,299.72 L1204.52,299.31 L1204.98,299 L1205.48,298.78 L1206.05,298.72 L1206.49,298.35 L1207.04,298.24 L1207.41,297.72 L1208.05,297.81 L1208.44,297.35 L1209.01,297.5 L1209.49,297.05 L1210,297.1 L1210.5,297.2 L1211,297.09 L1211.5,297.14 L1212.01,297.35 L1212.49,296.9 L1213.01,297.21 L1213.51,297.14 L1214.01,297.17 L1214.5,296.94 L1215,296.92 L1215.5,296.83 L1216,296.88 L1216.49,296.73 L1216.99,296.66 L1217.5,296.81 L1218.04,296.62 L1218.5,296.91 L1218.99,297.09 L1219.53,297.06 L1220.05,297.11 L1220.48,297.49 L1220.95,297.76 L1221.54,297.51 L1221.98,297.87 L1222.48,298.02 L1222.94,298.27 L1223.47,298.28 L1224.01,298.18 L1224.51,298.15 L1224.99,298.55 L1225.51,298.25 L1226.01,298.11 L1226.49,298.65 L1227.01,298.27 L1227.51,298.36 L1228.01,298.39 L1228.51,298.38 L1228.99,298.68 L1229.5,298.48 L1230,298.56 L1230.5,298.58 L1230.99,298.85 L1231.51,298.39 L1232,298.75 L1232.51,298.5 L1232.96,298.54 L1233.51,298.73 L1233.99,298.5 L1234.45,298.23 L1235.01,298.45 L1235.54,298.56 L1236.02,298.31 L1236.5,298.13 L1237.03,298.23 L1237.54,298.21 L1237.96,297.67 L1238.48,297.67 L1239.19,297.91 L1239.67,297.44 L1239.88,296.67 L1240.58,296.44 L1241.15,296.07 L1241.54,295.49 L1242.08,295.09 L1242.51,294.56 L1242.89,293.98 L1243.38,293.52 L1243.82,293 L1244.57,292.82 L1244.97,292.09 L1245.51,292.3 L1245.99,292.1 L1246.49,292.05 L1247.04,292.3 L1247.49,291.89 L1248,291.87 L1248.49,291.74 L1248.98,291.57 L1249.48,291.51 L1250,291.62 L1250.53,291.72 L1250.97,291.22 L1251.54,291.65 L1252.01,291.42 L1252.58,290.99 L1252.96,291.52 L1253.52,291.49 L1254,291.71 L1254.57,291.62 L1255,292.01 L1255.5,292.16 L1255.95,292.46 L1256.49,292.5 L1256.96,292.72 L1257.46,292.88 L1258.05,292.74 L1258.58,292.78 L1259,293.19 L1259.56,293.14 L1260.04,293.29 L1260.52,293.5 L1261,293.72 L1261.49,293.87 L1261.98,293.99 L1262.45,294.26 L1263.05,293.87 L1263.49,294.23 L1264.05,294.06 L1264.48,294.5 L1265.01,294.46 L1265.54,294.39 L1266.02,294.59 L1266.48,294.89 L1267,294.88 L1267.45,295.26 L1268.02,295 L1268.52,295.09 L1268.96,295.52 L1269.49,295.42 L1270.04,295.22 L1270.47,295.71 L1271.01,295.55 L1271.45,295.98 L1271.99,295.89 L1272.47,296.08 L1272.96,296.22 L1273.5,296.09 L1273.95,296.45 L1274.55,295.98 L1275.02,296.26 L1275.46,296.64 L1276.05,296.24 L1276.48,296.72 L1276.95,297 L1277.48,296.93 L1277.96,297.1 L1278.54,296.73 L1279,297.09 L1279.49,297.22 L1280.01,297.21 L1280.51,297.29 L1280.97,297.6 L1281.54,297.32 L1282.05,297.34 L1282.48,297.75 L1282.89,298.18 L1283.42,298.32 L1283.96,298.46 L1284.55,298.47 L1284.9,299.02 L1285.61,298.77 L1286.06,299.1 L1286.43,299.62 L1286.9,299.9 L1287.52,299.85 L1287.9,300.34 L1288.59,300.13 L1288.98,300.61 L1289.6,300.54 L1290.06,300.85 L1290.57,301.04 L1291.11,301.14 L1291.52,301.57 L1292,301.83 L1292.55,301.92 L1292.97,302.33 L1293.6,302.21 L1294,302.68 L1294.49,302.89 L1295.02,303.03 L1295.4,303.52 L1296.09,303.29 L1296.52,303.67 L1297.01,303.89 L1297.53,304.05 L1297.89,304.6 L1298.48,304.58 L1299.01,304.76 L1299.5,304.13 L1300.02,303.53 L1300.78,303.13 L1301.24,302.47 L1301.69,301.81 L1302,301.02 L1302.72,300.59 L1303.03,299.8 L1303.66,299.29 L1304.36,298.49 L1304.68,299.07 L1305.09,299.43 L1305.65,299.45 L1306.15,299.62 L1306.71,299.65 L1307.14,299.97 L1307.61,300.19 L1308.1,300.37 L1308.62,300.5 L1309.11,300.68 L1309.46,301.18 L1309.9,301.5 L1310.45,301.63 L1311.02,301.71 L1311.66,301.57 L1312.13,301.92 L1312.53,302.42 L1313.03,302.69 L1313.64,302.65 L1314.15,302.86 L1314.65,303.12 L1315.26,303.07 L1315.68,303.52 L1316.29,303.53 L1316.64,304.06 L1317.25,304.15 L1317.68,304.54 L1318.2,304.77 L1318.7,305.04 L1319.21,305.28 L1319.56,305.82 L1320.11,306.01 L1320.7,306.12 L1321.17,306.44 L1321.54,306.93 L1322.08,307.14 L1322.6,307.37 L1323,307.82 L1323.75,307.66 L1324.09,308.2 L1324.58,308.5 L1325.12,308.69 L1325.46,309.24 L1325.95,309.54 L1326.62,309.54 L1327.05,309.95 L1327.5,310.33 L1328.01,310.59 L1328.61,310.71 L1328.97,311.23 L1329.6,311.3 L1330.16,311.49 L1330.5,312.06 L1331,312.35 L1331.57,312.52 L1332.03,312.87 L1332.38,313.41 L1332.93,313.62 L1333.54,313.71 L1333.88,314.27 L1334.48,314.39 L1335.03,314.6 L1335.45,315.02 L1335.9,315.39 L1336.36,315.75 L1336.93,315.93 L1337.42,316.22 L1338,316.38 L1338.61,316.5 L1338.97,317.01 L1339.57,317.13 L1339.81,317.85 L1340.48,317.85 L1340.9,318.27 L1341.36,318.64 L1342.03,318.65 L1342.32,319.28 L1342.97,319.32 L1343.54,319.49 L1343.87,320.05 L1344.42,320.24 L1344.84,320.7 L1345.44,320.58 L1346.02,320.54 L1346.55,320.66 L1347.07,320.82 L1347.5,321.25 L1348.15,319.41 L1348.29,317.43 L1348.97,315.61 L1349.58,313.76 L1350.34,311.95 L1350.91,310.09 L1351.37,308.2 L1351.76,306.29 L1352.23,304.43 L1352.6,303.76 L1353.28,303.4 L1353.61,302.68 L1354.18,302.22 L1354.92,301.91 L1355.31,301.29 L1355.81,301.29 L1356.27,301.04 L1356.74,300.84 L1357.25,300.88 L1357.75,300.82 L1358.2,300.54 L1358.75,300.8 L1359.16,300.79 L1359.74,300.39 L1360.24,300.5 L1360.7,300.91 L1361.22,300.93 L1361.77,300.71 L1362.25,301 L1362.79,300.87 L1363.25,301.32 L1363.78,301.23 L1364.3,301.26 L1364.84,301.12 L1365.33,301.34 L1365.83,301.46 L1366.35,301.47 L1366.88,301.43 L1367.39,301.52 L1367.85,301.89 L1368.34,302.1 L1368.86,302.13 L1369.39,302.07 L1369.88,302.22 L1370.4,301.87 L1370.89,301.95 L1371.36,302.29 L1371.89,301.91 L1372.37,302 L1372.83,302.46 L1373.35,302.16 L1373.85,302.19 L1374.33,302.36 L1374.8,302.66 L1375.33,302.21 L1375.78,302.77 L1376.3,302.47 L1376.78,302.67 L1377.28,302.66 L1377.79,302.49 L1378.23,303.03 L1378.77,302.61 L1379.25,303.05 L1379.76,303.16 L1380.32,302.97 L1380.8,303.34 L1381.39,302.87 L1381.9,302.99 L1382.4,303.26 L1382.95,303.08 L1383.41,303.58 L1383.96,303.48 L1384.46,303.71 L1384.95,303.48 L1385.38,303.14 L1386.06,303.43 L1386.4,302.86 L1386.93,302.78 L1387.35,302.42 L1387.94,302.49 L1388.4,302.22 L1388.83,301.88 L1389.29,301.6 L1389.84,301.57 L1390.43,301.63 L1390.77,301.08 L1391.28,300.93 L1391.85,300.95 L1392.34,300.77 L1392.84,300.68 L1393.3,300.49 L1393.82,300.51 L1394.22,300 L1394.8,300.35 L1395.18,299.72 L1395.68,299.68 L1396.16,299.57 L1396.73,299.86 L1397.19,299.6 L1397.73,299.75 L1398.22,299.68 L1398.7,299.57 L1399.15,299.27 L1399.61,299.01 L1400.17,299.27 L1400.7,298.99 L1400.94,298.25 L1401.58,297.86 L1401.83,297.12 L1402.31,296.59 L1402.93,296.29 L1403.41,297.25 L1403.86,298.23 L1404.43,299.14 L1405.28,299.9 L1405.49,301.01 L1405.88,302.02 L1406.56,302.87 L1407.19,303.76 L1407.58,304.66 L1407.94,303.3 L1408.75,302.1 L1409.42,300.86 L1409.43,299.37 L1410.32,298.2 L1410.85,296.91 L1411.03,295.48 L1411.78,294.31 L1411.94,293.27 L1412.53,292.5 L1413.18,291.77 L1413.86,291.06 L1414.2,290.13 L1414.49,289.17 L1415.43,288.62 L1415.77,287.69 L1416.39,286.94 L1416.63,285.95 L1417.2,285.16 L1417.83,284.16 L1418.31,284.26 L1418.78,284.46 L1419.27,284.5 L1419.74,284.69 L1420.22,284.85 L1420.74,284.6 L1421.19,285 L1421.65,284.88 L1422.25,285.03 L1422.79,285.27 L1423.04,285.97 L1423.64,286.13 L1424.33,286.13 L1424.62,286.77 L1425.22,286.93 L1425.7,287.27 L1426.08,287.75 L1426.76,287.79 L1427.24,288.13 L1427.65,288.58 L1428.03,289.08 L1428.79,288.98 L1429.04,289.67 L1429.58,289.93 L1430.25,289.96 L1430.59,290.52 L1431.1,290.81 L1431.57,291.17 L1432.12,291.4 L1432.69,291.6 L1433.12,292.01 L1433.7,292.19 L1434.13,292.61 L1434.64,292.9 L1435.24,293.06 L1435.69,293.44 L1436.15,293.81 L1436.62,294.14 L1437.08,294.44 L1437.54,294.74 L1438.15,294.67 L1438.58,295.03 L1439.13,295.11 L1439.65,295.25 L1440.17,295.4 L1440.48,296.06 L1440.98,296.24 L1441.5,296.38 L1442.15,296.22 L1442.65,296.41 L1443.16,296.58 L1443.61,296.89 L1444.08,297.16 L1444.68,297.13 L1445.08,297.56 L1445.52,297.91 L1445.98,298.19 L1446.63,298.03 L1447.17,298.12 L1447.49,298.76 L1448.08,298.73 L1448.59,298.9 L1449.12,299.01 L1449.6,299.27 L1450.09,299.47 L1450.59,299.66 L1451.1,299.85 L1451.53,300.21 L1451.96,300.57 L1452.57,300.49 L1453.05,300.75 L1453.53,300.99 L1453.95,301.39 L1454.46,301.55 L1454.91,301.87 L1455.59,301.62 L1455.95,302.17 L1456.56,302.09 L1457,302.44 L1457.5,302.62 L1457.99,302.84 L1458.55,302.9 L1459.1,302.96 L1459.61,303.13 L1459.92,303.84 L1460.43,303.98 L1461,303.9 L1461.57,303.84 L1461.93,304.43 L1462.49,304.4 L1462.99,304.54 L1463.46,304.79 L1464.04,304.68 L1464.53,304.87 L1464.92,305.37 L1465.43,305.48 L1465.88,305.79 L1466.48,305.63 L1466.88,306.1 L1467.39,306.21 L1467.96,306.15 L1468.39,306.53 L1469.02,306.27 L1469.54,306.38 L1469.9,306.96 L1470.52,306.74 L1470.95,307.11 L1471.4,307.39 L1471.91,307.52 L1472.49,307.42 L1472.89,307.9 L1473.52,307.63 L1473.93,308.09 L1474.36,308.44 L1474.92,308.4 L1475.47,308.42 L1475.84,308.98 L1476.38,308.98 L1476.87,309.18 L1477.35,309.39 L1477.84,309.58 L1478.4,309.53 L1478.85,309.83 L1479.41,309.81 L1479.95,309.82 L1480.45,310 L1480.95,310.15 L1481.49,310.17 L1481.89,310.67 L1482.41,310.64 L1482.84,311.03 L1483.44,310.62 L1483.85,311.15 L1484.41,310.9 L1484.89,311.07 L1485.39,311.14 L1485.81,311.63 L1486.34,311.54 L1486.85,311.53 L1487.38,311.46 L1487.89,311.47 L1488.35,311.76 L1488.78,312.21 L1489.33,311.99 L1489.8,312.23 L1490.27,312.44 L1490.86,312.05 L1491.33,312.3 L1491.81,312.45 L1492.33,312.44 L1492.81,312.62 L1493.27,312.89 L1493.82,312.67 L1494.26,313.09 L1494.8,312.95 L1495.25,313.26 L1495.8,313.07 L1496.23,313.53 L1496.76,313.41 L1497.21,313.74 L1497.69,313.92 L1498.23,313.79 L1498.79,313.55 L1499.24,313.85 L1499.67,314.3 L1500.2,314.21 L1500.69,314.37 L1501.21,314.3 L1501.66,314.66 L1502.32,314.71 L1502.73,314.27 L1503.22,313.97 L1503.56,313.43 L1504.03,313.09 L1504.58,312.9 L1505.24,312.88 L1505.77,312.65 L1506.24,312.32 L1506.77,312.1 L1507.01,311.36 L1507.5,311.07 L1508.06,310.9 L1508.49,310.49 L1509.15,310.49 L1509.75,310.38 L1510.24,310.08 L1510.49,309.38 L1511.16,309.37 L1511.62,309.1 L1512.12,308.98 L1512.59,308.73 L1513.07,308.51 L1513.65,308.78 L1514.15,308.68 L1514.63,308.46 L1515.11,308.25 L1515.54,307.84 L1516.07,307.87 L1516.57,307.74 L1517.07,307.63 L1517.56,307.51 L1518.12,307.66 L1518.62,307.56 L1519.06,307.15 L1519.65,307.46 L1520.04,306.83 L1520.66,307.27 L1521.11,306.95 L1521.62,306.87 L1522.07,306.55 L1522.62,306.68 L1523.15,306.67 L1523.56,306.17 L1524.05,306.02 L1524.64,306.29 L1525.07,305.86 L1525.58,305.66 L1526.1,305.86 L1526.58,305.63 L1527.08,305.61 L1527.58,305.61 L1528.06,305.45 L1528.6,305.85 L1529.08,305.66 L1529.58,305.67 L1530.06,305.42 L1530.58,305.66 L1531.09,305.74 L1531.58,305.72 L1532.03,305.11 L1532.54,305.23 L1533.03,305.05 L1533.55,305.24 L1534.05,305.31 L1534.55,305.24 L1535.03,305.05 L1535.56,305.38 L1536.04,305.13 L1536.55,305.32 L1537.02,304.94 L1537.53,305.03 L1538,304.66 L1538.52,304.88 L1539.02,304.91 L1539.49,304.62 L1540.01,304.81 L1540.54,304.48 L1541,304.76 L1541.49,304.93 L1542,304.95 L1542.54,304.84 L1543.03,304.95 L1543.51,305.14 L1543.98,305.39 L1544.51,305.35 L1545.03,305.29 L1545.52,305.46 L1546.02,305.53 L1546.54,305.51 L1546.99,305.87 L1547.51,305.88 L1548.07,306.1 L1548.69,306.22 L1548.94,306.99 L1549.72,306.83 L1550.22,307.16 L1550.69,307.54 L1551.06,308.09 L1551.54,308.46 L1552.11,308.66 L1552.79,308.66 L1553.13,309.29 L1553.75,309.4" fill="none" stroke="#7eb26d" stroke-width="1.05" stroke-linejoin="round"/></g></svg>
<div class="ylab" style="right:706px;top:106px">30.000 °C</div>
<div class="ylab" style="right:706px;top:149.33px">27.500 °C</div>
<div class="ylab" style="right:706px;top:192.67px">25.000 °C</div>
<div class="ylab" style="right:706px;top:236px">22.500 °C</div>
<div class="ylab" style="right:706px;top:279.33px">20.000 °C</div>
<div class="ylab" style="right:706px;top:322.67px">17.500 °C</div>
<div class="ylab" style="right:706px;top:366px">15.000 °C</div>
<div class="xlab" style="left:921px;top:380px">10/16</div>
<div class="xlab" style="left:1023.27px;top:380px">10/18</div>
<div class="xlab" style="left:1125.55px;top:380px">10/20</div>
<div class="xlab" style="left:1227.82px;top:380px">10/22</div>
<div class="xlab" style="left:1330.09px;top:380px">10/24</div>
<div class="xlab" style="left:1432.36px;top:380px">10/26</div>
<div class="lsw" style="left:857px;top:408.5px"></div>
<div class="ltxt" style="left:873px;top:403px;font-size:11px">temperature_value</div>
<div class="ltxt lcur" style="left:972.5px;top:403px">Current: 18.6875 °C</div>
<div class="panel" style="left:80px;top:435px;width:745px;height:311px"></div>
<div class="ptitle" style="left:80px;top:442.5px;width:745px">battery voltage</div>
<svg class="chart" width="1600" height="826" viewBox="0 0 1600 826" style="left:0;top:0"><defs><clipPath id="cl_batt"><rect x="134" y="443" width="665" height="250"/></clipPath></defs><path d="M134,473h665v1h-665zM134,509h665v1h-665zM134,546h665v1h-665zM134,583h665v1h-665zM134,619h665v1h-665zM134,656h665v1h-665zM134,693h665v1h-665zM186,473h1v221h-1zM290,473h1v221h-1zM394,473h1v221h-1zM498,473h1v221h-1zM602,473h1v221h-1zM705,473h1v221h-1z" fill="rgba(200,200,200,0.22)"/><g clip-path="url(#cl_batt)"><path d="M134,514L136.03,514L136.22,521.5L136.4,514L136.59,514L136.77,521.5L137.51,521.5L137.7,514L138.07,514L138.25,521.5L138.43,514L138.62,521.5L139.54,521.5L139.73,514L139.91,521.5L140.1,514L140.28,514L140.47,521.5L140.65,514L140.84,521.5L141.76,521.5L141.95,514L142.5,514L142.68,521.5L142.87,514L143.61,514L143.79,521.5L144.9,521.5L145.09,514L145.27,521.5L145.46,514L145.64,514L145.83,521.5L146.38,521.5L146.56,514L147.12,514L147.3,521.5L147.86,521.5L148.04,514L148.23,521.5L149.71,521.5L149.89,514L150.08,521.5L152.29,521.5L152.48,514L152.66,521.5L152.85,521.5L153.03,514L153.22,521.5L163.38,521.5L163.56,529L163.75,521.5L165.6,521.5L165.78,529L165.97,521.5L169.11,521.5L169.29,529L169.48,529L169.66,521.5L169.85,521.5L170.03,529L170.22,529L170.4,521.5L170.59,521.5L170.77,529L170.95,529L171.14,521.5L172.62,521.5L172.8,529L172.99,529L173.17,521.5L173.36,529L173.54,521.5L174.28,521.5L174.47,529L174.83,529L175.02,521.5L175.94,521.5L176.13,529L176.31,521.5L176.5,521.5L176.68,529L176.87,521.5L177.24,521.5L177.42,529L177.61,521.5L177.79,529L177.98,529L178.16,521.5L178.53,521.5L178.72,529L179.27,529L179.45,521.5L180.93,521.5L181.12,529L181.86,529L182.04,521.5L182.23,529L182.41,521.5L182.6,521.5L182.78,529L182.96,521.5L184.26,521.5L184.44,529L185,529L185.18,521.5L185.37,529L185.55,521.5L185.92,521.5L186.11,529L186.29,529L186.48,521.5L186.85,521.5L187.03,529L190.36,529L190.54,521.5L190.73,529L190.91,529L191.1,521.5L191.28,529L194.98,529L195.16,521.5L195.34,529L195.53,536.5L195.71,529L202.74,529L202.92,536.5L203.11,529L203.29,529L203.47,536.5L203.66,536.5L203.84,529L205.69,529L205.88,536.5L206.06,529L207.91,529L208.09,536.5L208.28,536.5L208.46,529L208.83,529L209.02,536.5L209.2,529L209.39,536.5L209.76,536.5L209.94,529L210.13,536.5L210.31,529L211.05,529L211.24,536.5L211.42,536.5L211.6,529L211.79,529L211.97,536.5L212.16,536.5L212.34,529L213.64,529L213.82,536.5L214.01,536.5L214.19,529L214.56,529L214.75,536.5L216.78,536.5L216.96,529L217.15,536.5L217.33,529L217.52,536.5L218.44,536.5L218.63,529L218.81,536.5L220.66,536.5L220.84,529L221.03,536.5L226.02,536.5L226.2,551.5L226.39,536.5L228.05,536.5L228.23,551.5L228.42,536.5L228.97,536.5L229.16,551.5L229.34,536.5L229.9,536.5L230.08,551.5L230.27,551.5L230.45,536.5L231.01,536.5L231.19,551.5L231.38,551.5L231.56,536.5L236.18,536.5L236.36,551.5L236.55,536.5L237.47,536.5L237.66,551.5L237.84,536.5L244.31,536.5L244.49,551.5L244.86,551.5L245.05,536.5L246.16,536.5L246.34,551.5L246.53,536.5L247.27,536.5L247.45,551.5L247.64,536.5L248.01,536.5L248.19,551.5L248.37,536.5L249.48,536.5L249.67,551.5L280.89,551.5L281.08,559L281.26,559L281.45,551.5L284.04,551.5L284.22,559L284.41,559L284.59,551.5L284.96,551.5L285.14,559L285.33,551.5L285.88,551.5L286.07,559L286.25,551.5L286.44,551.5L286.62,559L286.81,559L286.99,551.5L287.18,559L288.1,559L288.29,551.5L288.66,551.5L288.84,559L289.03,559L289.21,551.5L289.58,551.5L289.76,559L289.95,551.5L290.13,559L290.32,551.5L290.5,559L290.69,559L290.87,551.5L291.24,551.5L291.43,559L291.98,559L292.17,551.5L292.35,559L292.91,559L293.09,551.5L293.27,559L294.01,559L294.2,551.5L294.38,559L294.57,551.5L294.75,559L294.94,551.5L295.12,559L298.26,559L298.45,551.5L298.63,559L299.56,559L299.74,551.5L299.93,559L326.72,559L326.9,566.5L327.09,559L327.27,566.5L327.64,566.5L327.83,559L328.01,559L328.2,566.5L328.38,559L329.12,559L329.31,566.5L329.49,559L330.78,559L330.97,566.5L331.52,566.5L331.71,559L331.89,566.5L332.08,566.5L332.26,559L333.74,559L333.92,566.5L334.11,559L334.48,559L334.66,566.5L335.03,566.5L335.22,559L335.59,559L335.77,566.5L338.54,566.5L338.73,559L338.91,566.5L341.5,566.5L341.69,559L341.87,566.5L366.63,566.5L366.81,574L367,574L367.18,566.5L368.11,566.5L368.29,574L368.48,574L368.66,566.5L369.22,566.5L369.4,574L369.59,566.5L370.69,566.5L370.88,574L371.06,566.5L371.43,566.5L371.62,574L371.99,574L372.17,566.5L372.36,566.5L372.54,574L372.73,566.5L373.65,566.5L373.84,574L374.02,574L374.21,566.5L374.39,574L374.76,574L374.94,566.5L375.13,566.5L375.31,574L375.5,566.5L375.68,566.5L375.87,574L376.05,574L376.24,566.5L376.98,566.5L377.16,574L377.35,566.5L377.53,566.5L377.72,574L378.46,574L378.64,566.5L379.19,566.5L379.38,574L379.93,574L380.12,566.5L380.3,574L380.49,574L380.67,566.5L380.86,574L381.04,574L381.23,566.5L381.78,566.5L381.97,574L382.15,566.5L382.34,566.5L382.52,574L383.44,574L383.63,566.5L384,566.5L384.18,574L384.37,574L384.55,566.5L384.74,566.5L384.92,574L385.29,574L385.48,566.5L385.66,574L385.85,566.5L386.03,574L390.47,574L390.65,566.5L390.84,574L396.38,574L396.56,581.5L397.3,581.5L397.49,574L399.15,574L399.33,581.5L400.07,581.5L400.26,574L400.44,581.5L401.55,581.5L401.74,574L402.11,574L402.29,581.5L402.48,581.5L402.66,574L402.85,581.5L403.03,581.5L403.22,574L403.4,581.5L405.8,581.5L405.99,574L406.17,581.5L438.51,581.5L438.69,589L438.88,589L439.06,581.5L440.54,581.5L440.72,589L440.91,581.5L441.09,581.5L441.28,589L441.46,589L441.65,581.5L442.57,581.5L442.76,589L442.94,581.5L443.87,581.5L444.05,589L444.23,581.5L444.42,581.5L444.6,589L444.79,581.5L444.97,581.5L445.16,589L445.34,581.5L445.53,589L446.45,589L446.64,581.5L446.82,589L447.01,589L447.19,581.5L447.75,581.5L447.93,589L448.3,589L448.48,581.5L448.67,589L449.41,589L449.59,581.5L449.78,589L450.33,589L450.52,596.5L450.7,581.5L450.89,589L451.44,589L451.63,581.5L451.81,581.5L452,589L452.18,581.5L452.36,589L452.55,589L452.73,581.5L452.92,589L453.29,589L453.47,581.5L453.66,589L454.21,589L454.4,581.5L454.58,589L455.51,589L455.69,581.5L455.88,589L456.25,589L456.43,581.5L456.61,589L458.46,589L458.65,581.5L458.83,581.5L459.02,589L477.68,589L477.86,596.5L478.05,589L479.34,589L479.53,596.5L479.71,589L480.27,589L480.45,596.5L480.64,589L481,589L481.19,596.5L481.37,589L482.67,589L482.85,596.5L483.04,596.5L483.22,589L485.62,589L485.81,596.5L485.99,596.5L486.18,589L486.36,589L486.55,596.5L486.73,589L486.92,596.5L487.1,589L487.29,596.5L487.47,596.5L487.66,589L487.84,589L488.03,596.5L488.21,596.5L488.4,589L488.58,596.5L488.77,589L488.95,596.5L489.13,589L489.32,589L489.5,596.5L489.69,596.5L489.87,589L490.43,589L490.61,596.5L491.35,596.5L491.54,589L491.72,589L491.91,596.5L492.65,596.5L492.83,589L493.02,589L493.2,596.5L493.38,589L493.57,596.5L494.49,596.5L494.68,589L494.86,589L495.05,596.5L495.6,596.5L495.79,589L495.97,589L496.16,596.5L497.26,596.5L497.45,589L497.63,596.5L519.81,596.5L519.99,604L520.18,596.5L523.69,596.5L523.87,604L524.06,604L524.24,596.5L525.35,596.5L525.54,604L525.72,596.5L526.09,596.5L526.27,604L526.46,596.5L526.64,596.5L526.83,604L527.01,596.5L528.68,596.5L528.86,604L529.05,596.5L529.6,596.5L529.78,604L530.15,604L530.34,596.5L530.52,611.5L530.71,596.5L530.89,596.5L531.08,604L531.26,604L531.45,596.5L532.19,596.5L532.37,604L532.93,604L533.11,596.5L533.48,596.5L533.67,604L533.85,604L534.03,596.5L534.4,596.5L534.59,604L534.77,604L534.96,596.5L536.62,596.5L536.81,604L536.99,596.5L537.18,604L537.36,596.5L537.55,596.5L537.73,604L537.91,604L538.1,596.5L538.28,596.5L538.47,604L538.84,604L539.02,596.5L539.21,604L539.39,596.5L539.58,604L539.76,596.5L540.13,596.5L540.32,604L541.43,604L541.61,596.5L541.8,604L541.98,604L542.16,596.5L542.35,604L542.53,604L542.72,596.5L543.46,596.5L543.64,604L546.05,604L546.23,596.5L546.97,596.5L547.15,604L547.34,596.5L547.52,604L547.89,604L548.08,596.5L548.26,596.5L548.45,604L553.25,604L553.44,596.5L553.62,604L555.47,604L555.65,596.5L555.84,596.5L556.02,604L574.87,604L575.05,611.5L575.24,604L575.79,604L575.98,611.5L576.16,604L577.09,604L577.27,611.5L577.46,611.5L577.64,604L579.49,604L579.67,611.5L579.86,604L580.6,604L580.78,611.5L580.97,611.5L581.15,604L581.71,604L581.89,611.5L582.45,611.5L582.63,604L583.55,604L583.74,611.5L583.92,611.5L584.11,604L584.29,604L584.48,611.5L584.66,604L584.85,604L585.03,611.5L585.59,611.5L585.77,604L586.33,604L586.51,611.5L586.7,604L587.25,604L587.43,611.5L588.36,611.5L588.54,604L588.73,604L588.91,611.5L590.58,611.5L590.76,604L590.94,611.5L591.13,611.5L591.31,604L591.87,604L592.05,611.5L592.24,604L592.42,604L592.61,611.5L592.79,611.5L592.98,604L593.16,611.5L593.53,611.5L593.72,604L593.9,611.5L594.46,611.5L594.64,604L594.83,611.5L595.19,611.5L595.38,604L595.56,611.5L595.93,611.5L596.12,604L596.3,604L596.49,611.5L597.78,611.5L597.97,604L598.15,611.5L602.4,611.5L602.59,604L602.77,604L602.96,611.5L614.78,611.5L614.97,619L615.34,619L615.52,611.5L621.06,611.5L621.25,619L621.43,611.5L622.91,611.5L623.1,619L623.28,619L623.47,611.5L624.02,611.5L624.2,619L624.39,611.5L624.94,611.5L625.13,619L625.5,619L625.68,611.5L626.98,611.5L627.16,619L627.35,611.5L628.27,611.5L628.45,619L628.64,619L628.82,611.5L629.01,611.5L629.19,619L629.38,611.5L629.56,611.5L629.75,619L629.93,619L630.12,611.5L630.3,611.5L630.49,619L630.67,611.5L630.86,611.5L631.04,619L631.23,611.5L632.33,611.5L632.52,619L632.7,611.5L633.26,611.5L633.44,619L633.63,611.5L633.81,619L634.18,619L634.37,611.5L634.55,611.5L634.74,619L635.48,619L635.66,611.5L635.84,619L636.21,619L636.4,611.5L636.58,611.5L636.77,619L636.95,611.5L637.14,619L637.69,619L637.88,611.5L638.06,619L638.62,619L638.8,611.5L639.36,611.5L639.54,619L639.73,611.5L639.91,611.5L640.09,619L641.39,619L641.57,611.5L641.76,611.5L641.94,619L644.71,619L644.9,611.5L645.08,611.5L645.27,619L646.75,619L646.93,611.5L647.3,611.5L647.49,619L651.92,619L652.11,611.5L652.29,619L654.88,619L655.06,611.5L655.25,619L668.37,619L668.55,626.5L668.73,626.5L668.92,619L669.66,619L669.84,626.5L670.03,626.5L670.21,619L671.88,619L672.06,626.5L672.43,626.5L672.61,619L672.8,619L672.98,626.5L673.17,619L673.35,626.5L673.72,626.5L673.91,619L675.2,619L675.39,626.5L675.57,619L676.5,619L676.68,626.5L676.86,619L677.97,619L678.16,626.5L678.34,626.5L678.53,619L678.9,619L679.08,626.5L679.45,626.5L679.64,619L680.01,619L680.19,626.5L680.38,626.5L680.56,619L680.93,619L681.11,626.5L681.3,626.5L681.48,619L682.78,619L682.96,626.5L683.15,619L683.33,626.5L683.7,626.5L683.89,619L684.07,626.5L684.26,619L684.44,619L684.63,626.5L684.81,619L684.99,619L685.18,626.5L685.36,619L685.55,626.5L685.92,626.5L686.1,619L686.84,619L687.03,626.5L687.21,619L687.4,626.5L687.77,626.5L687.95,619L688.14,626.5L688.32,619L688.51,626.5L689.06,626.5L689.24,619L689.43,619L689.61,626.5L689.8,626.5L689.98,619L690.35,619L690.54,626.5L690.72,626.5L690.91,619L691.65,619L691.83,626.5L692.02,619L692.39,619L692.57,626.5L692.94,626.5L693.12,619L693.31,626.5L693.49,626.5L693.68,619L694.42,619L694.6,626.5L696.27,626.5L696.45,619L696.64,626.5L696.82,619L697.01,626.5L698.85,626.5L699.04,619L699.22,626.5L699.59,626.5L699.78,619L699.96,626.5L701.44,626.5L701.62,619L701.81,626.5L702.55,626.5L702.73,619L702.92,626.5L705.14,626.5L705.32,619L705.5,626.5L705.69,626.5L705.87,641.5L706.06,626.5L706.24,619L706.43,626.5L706.61,626.5L706.8,619L706.98,626.5L707.35,626.5L707.54,649L707.72,626.5L709.38,626.5L709.57,619L709.75,626.5L711.79,626.5L711.97,619L712.16,626.5L712.71,626.5L712.9,641.5L713.08,626.5L715.85,626.5L716.04,641.5L716.22,626.5L719.73,626.5L719.92,656.5L720.1,626.5L721.58,626.5L721.76,641.5L721.95,626.5L722.13,626.5L722.32,641.5L722.5,626.5L722.69,641.5L722.87,626.5L723.06,626.5L723.24,641.5L723.43,626.5L724.17,626.5L724.35,641.5L724.54,626.5L724.72,626.5L724.91,641.5L725.09,641.5L725.28,626.5L727.31,626.5L727.49,641.5L727.68,626.5L727.86,626.5L728.05,641.5L728.23,626.5L728.42,626.5L728.6,641.5L728.79,626.5L728.97,626.5L729.16,641.5L729.34,626.5L729.89,626.5L730.08,641.5L730.26,626.5L730.45,641.5L730.63,641.5L730.82,626.5L732.3,626.5L732.48,641.5L732.67,641.5L732.85,626.5L733.22,626.5L733.41,641.5L733.59,649L733.77,626.5L733.96,641.5L734.14,626.5L734.33,641.5L734.51,641.5L734.7,626.5L734.88,641.5L735.25,641.5L735.44,626.5L735.62,641.5L735.81,626.5L735.99,641.5L736.18,626.5L736.55,626.5L736.73,641.5L736.92,641.5L737.1,626.5L737.29,626.5L737.47,641.5L737.66,626.5L737.84,641.5L738.39,641.5L738.58,656.5L738.76,641.5L738.95,626.5L739.13,641.5L739.32,641.5L739.5,626.5L739.87,626.5L740.06,641.5L741.17,641.5L741.35,626.5L741.54,641.5L741.72,641.5L741.9,626.5L742.09,626.5L742.27,641.5L742.46,641.5L742.64,626.5L743.2,626.5L743.38,641.5L744.12,641.5L744.31,626.5L744.49,626.5L744.68,641.5L745.05,641.5L745.23,626.5L745.6,626.5L745.79,641.5L746.34,641.5L746.52,626.5L746.71,626.5L746.89,641.5L747.26,641.5L747.45,626.5L747.82,626.5L748,656.5L748.19,641.5L748.56,641.5L748.74,626.5L748.93,641.5L749.11,626.5L749.3,641.5L749.67,641.5L749.85,626.5L750.04,641.5L750.22,626.5L750.59,626.5L750.77,641.5L751.7,641.5L751.88,626.5L752.07,641.5L752.25,641.5L752.44,626.5L752.62,626.5L752.81,641.5L753.55,641.5L753.73,626.5L753.92,641.5L754.1,626.5L754.28,641.5L754.84,641.5L755.02,626.5L755.21,641.5L755.58,641.5L755.76,626.5L755.95,641.5L756.32,641.5L756.5,626.5L756.87,626.5L757.06,656.5L757.24,626.5L757.43,626.5L757.61,641.5L757.8,641.5L757.98,626.5L758.53,626.5L758.72,641.5L762.23,641.5L762.41,649L762.6,641.5L762.78,626.5L763.15,626.5L763.34,641.5L764.26,641.5L764.45,656.5L764.63,641.5L764.82,626.5L765,641.5L765.19,641.5L765.37,649L766.3,649L766.48,641.5L766.66,649L766.85,641.5L767.4,641.5L767.59,649L767.77,641.5L768.51,641.5L768.7,649L768.88,649L769.07,641.5L769.25,649L769.44,641.5L769.62,641.5L769.81,649L770.54,649L770.73,641.5L771.1,641.5L771.28,649L772.39,649L772.58,656.5L772.76,649L776.83,649L777.01,656.5L777.2,649L777.57,649L777.75,656.5L777.94,649L778.12,649L778.31,656.5L778.49,656.5L778.67,649L779.97,649L780.15,656.5L781.08,656.5L781.26,649L781.45,649L781.63,656.5L782.92,656.5L783.11,649L783.29,656.5L783.85,656.5L784.03,664L784.22,656.5L798.26,656.5L798.45,664L798.63,656.5L799,656.5L799.00,693L134.00,693Z" fill="rgba(126,178,109,0.1)"/><path d="M134,514L136.03,514L136.22,521.5L136.4,514L136.59,514L136.77,521.5L137.51,521.5L137.7,514L138.07,514L138.25,521.5L138.43,514L138.62,521.5L139.54,521.5L139.73,514L139.91,521.5L140.1,514L140.28,514L140.47,521.5L140.65,514L140.84,521.5L141.76,521.5L141.95,514L142.5,514L142.68,521.5L142.87,514L143.61,514L143.79,521.5L144.9,521.5L145.09,514L145.27,521.5L145.46,514L145.64,514L145.83,521.5L146.38,521.5L146.56,514L147.12,514L147.3,521.5L147.86,521.5L148.04,514L148.23,521.5L149.71,521.5L149.89,514L150.08,521.5L152.29,521.5L152.48,514L152.66,521.5L152.85,521.5L153.03,514L153.22,521.5L163.38,521.5L163.56,529L163.75,521.5L165.6,521.5L165.78,529L165.97,521.5L169.11,521.5L169.29,529L169.48,529L169.66,521.5L169.85,521.5L170.03,529L170.22,529L170.4,521.5L170.59,521.5L170.77,529L170.95,529L171.14,521.5L172.62,521.5L172.8,529L172.99,529L173.17,521.5L173.36,529L173.54,521.5L174.28,521.5L174.47,529L174.83,529L175.02,521.5L175.94,521.5L176.13,529L176.31,521.5L176.5,521.5L176.68,529L176.87,521.5L177.24,521.5L177.42,529L177.61,521.5L177.79,529L177.98,529L178.16,521.5L178.53,521.5L178.72,529L179.27,529L179.45,521.5L180.93,521.5L181.12,529L181.86,529L182.04,521.5L182.23,529L182.41,521.5L182.6,521.5L182.78,529L182.96,521.5L184.26,521.5L184.44,529L185,529L185.18,521.5L185.37,529L185.55,521.5L185.92,521.5L186.11,529L186.29,529L186.48,521.5L186.85,521.5L187.03,529L190.36,529L190.54,521.5L190.73,529L190.91,529L191.1,521.5L191.28,529L194.98,529L195.16,521.5L195.34,529L195.53,536.5L195.71,529L202.74,529L202.92,536.5L203.11,529L203.29,529L203.47,536.5L203.66,536.5L203.84,529L205.69,529L205.88,536.5L206.06,529L207.91,529L208.09,536.5L208.28,536.5L208.46,529L208.83,529L209.02,536.5L209.2,529L209.39,536.5L209.76,536.5L209.94,529L210.13,536.5L210.31,529L211.05,529L211.24,536.5L211.42,536.5L211.6,529L211.79,529L211.97,536.5L212.16,536.5L212.34,529L213.64,529L213.82,536.5L214.01,536.5L214.19,529L214.56,529L214.75,536.5L216.78,536.5L216.96,529L217.15,536.5L217.33,529L217.52,536.5L218.44,536.5L218.63,529L218.81,536.5L220.66,536.5L220.84,529L221.03,536.5L226.02,536.5L226.2,551.5L226.39,536.5L228.05,536.5L228.23,551.5L228.42,536.5L228.97,536.5L229.16,551.5L229.34,536.5L229.9,536.5L230.08,551.5L230.27,551.5L230.45,536.5L231.01,536.5L231.19,551.5L231.38,551.5L231.56,536.5L236.18,536.5L236.36,551.5L236.55,536.5L237.47,536.5L237.66,551.5L237.84,536.5L244.31,536.5L244.49,551.5L244.86,551.5L245.05,536.5L246.16,536.5L246.34,551.5L246.53,536.5L247.27,536.5L247.45,551.5L247.64,536.5L248.01,536.5L248.19,551.5L248.37,536.5L249.48,536.5L249.67,551.5L280.89,551.5L281.08,559L281.26,559L281.45,551.5L284.04,551.5L284.22,559L284.41,559L284.59,551.5L284.96,551.5L285.14,559L285.33,551.5L285.88,551.5L286.07,559L286.25,551.5L286.44,551.5L286.62,559L286.81,559L286.99,551.5L287.18,559L288.1,559L288.29,551.5L288.66,551.5L288.84,559L289.03,559L289.21,551.5L289.58,551.5L289.76,559L289.95,551.5L290.13,559L290.32,551.5L290.5,559L290.69,559L290.87,551.5L291.24,551.5L291.43,559L291.98,559L292.17,551.5L292.35,559L292.91,559L293.09,551.5L293.27,559L294.01,559L294.2,551.5L294.38,559L294.57,551.5L294.75,559L294.94,551.5L295.12,559L298.26,559L298.45,551.5L298.63,559L299.56,559L299.74,551.5L299.93,559L326.72,559L326.9,566.5L327.09,559L327.27,566.5L327.64,566.5L327.83,559L328.01,559L328.2,566.5L328.38,559L329.12,559L329.31,566.5L329.49,559L330.78,559L330.97,566.5L331.52,566.5L331.71,559L331.89,566.5L332.08,566.5L332.26,559L333.74,559L333.92,566.5L334.11,559L334.48,559L334.66,566.5L335.03,566.5L335.22,559L335.59,559L335.77,566.5L338.54,566.5L338.73,559L338.91,566.5L341.5,566.5L341.69,559L341.87,566.5L366.63,566.5L366.81,574L367,574L367.18,566.5L368.11,566.5L368.29,574L368.48,574L368.66,566.5L369.22,566.5L369.4,574L369.59,566.5L370.69,566.5L370.88,574L371.06,566.5L371.43,566.5L371.62,574L371.99,574L372.17,566.5L372.36,566.5L372.54,574L372.73,566.5L373.65,566.5L373.84,574L374.02,574L374.21,566.5L374.39,574L374.76,574L374.94,566.5L375.13,566.5L375.31,574L375.5,566.5L375.68,566.5L375.87,574L376.05,574L376.24,566.5L376.98,566.5L377.16,574L377.35,566.5L377.53,566.5L377.72,574L378.46,574L378.64,566.5L379.19,566.5L379.38,574L379.93,574L380.12,566.5L380.3,574L380.49,574L380.67,566.5L380.86,574L381.04,574L381.23,566.5L381.78,566.5L381.97,574L382.15,566.5L382.34,566.5L382.52,574L383.44,574L383.63,566.5L384,566.5L384.18,574L384.37,574L384.55,566.5L384.74,566.5L384.92,574L385.29,574L385.48,566.5L385.66,574L385.85,566.5L386.03,574L390.47,574L390.65,566.5L390.84,574L396.38,574L396.56,581.5L397.3,581.5L397.49,574L399.15,574L399.33,581.5L400.07,581.5L400.26,574L400.44,581.5L401.55,581.5L401.74,574L402.11,574L402.29,581.5L402.48,581.5L402.66,574L402.85,581.5L403.03,581.5L403.22,574L403.4,581.5L405.8,581.5L405.99,574L406.17,581.5L438.51,581.5L438.69,589L438.88,589L439.06,581.5L440.54,581.5L440.72,589L440.91,581.5L441.09,581.5L441.28,589L441.46,589L441.65,581.5L442.57,581.5L442.76,589L442.94,581.5L443.87,581.5L444.05,589L444.23,581.5L444.42,581.5L444.6,589L444.79,581.5L444.97,581.5L445.16,589L445.34,581.5L445.53,589L446.45,589L446.64,581.5L446.82,589L447.01,589L447.19,581.5L447.75,581.5L447.93,589L448.3,589L448.48,581.5L448.67,589L449.41,589L449.59,581.5L449.78,589L450.33,589L450.52,596.5L450.7,581.5L450.89,589L451.44,589L451.63,581.5L451.81,581.5L452,589L452.18,581.5L452.36,589L452.55,589L452.73,581.5L452.92,589L453.29,589L453.47,581.5L453.66,589L454.21,589L454.4,581.5L454.58,589L455.51,589L455.69,581.5L455.88,589L456.25,589L456.43,581.5L456.61,589L458.46,589L458.65,581.5L458.83,581.5L459.02,589L477.68,589L477.86,596.5L478.05,589L479.34,589L479.53,596.5L479.71,589L480.27,589L480.45,596.5L480.64,589L481,589L481.19,596.5L481.37,589L482.67,589L482.85,596.5L483.04,596.5L483.22,589L485.62,589L485.81,596.5L485.99,596.5L486.18,589L486.36,589L486.55,596.5L486.73,589L486.92,596.5L487.1,589L487.29,596.5L487.47,596.5L487.66,589L487.84,589L488.03,596.5L488.21,596.5L488.4,589L488.58,596.5L488.77,589L488.95,596.5L489.13,589L489.32,589L489.5,596.5L489.69,596.5L489.87,589L490.43,589L490.61,596.5L491.35,596.5L491.54,589L491.72,589L491.91,596.5L492.65,596.5L492.83,589L493.02,589L493.2,596.5L493.38,589L493.57,596.5L494.49,596.5L494.68,589L494.86,589L495.05,596.5L495.6,596.5L495.79,589L495.97,589L496.16,596.5L497.26,596.5L497.45,589L497.63,596.5L519.81,596.5L519.99,604L520.18,596.5L523.69,596.5L523.87,604L524.06,604L524.24,596.5L525.35,596.5L525.54,604L525.72,596.5L526.09,596.5L526.27,604L526.46,596.5L526.64,596.5L526.83,604L527.01,596.5L528.68,596.5L528.86,604L529.05,596.5L529.6,596.5L529.78,604L530.15,604L530.34,596.5L530.52,611.5L530.71,596.5L530.89,596.5L531.08,604L531.26,604L531.45,596.5L532.19,596.5L532.37,604L532.93,604L533.11,596.5L533.48,596.5L533.67,604L533.85,604L534.03,596.5L534.4,596.5L534.59,604L534.77,604L534.96,596.5L536.62,596.5L536.81,604L536.99,596.5L537.18,604L537.36,596.5L537.55,596.5L537.73,604L537.91,604L538.1,596.5L538.28,596.5L538.47,604L538.84,604L539.02,596.5L539.21,604L539.39,596.5L539.58,604L539.76,596.5L540.13,596.5L540.32,604L541.43,604L541.61,596.5L541.8,604L541.98,604L542.16,596.5L542.35,604L542.53,604L542.72,596.5L543.46,596.5L543.64,604L546.05,604L546.23,596.5L546.97,596.5L547.15,604L547.34,596.5L547.52,604L547.89,604L548.08,596.5L548.26,596.5L548.45,604L553.25,604L553.44,596.5L553.62,604L555.47,604L555.65,596.5L555.84,596.5L556.02,604L574.87,604L575.05,611.5L575.24,604L575.79,604L575.98,611.5L576.16,604L577.09,604L577.27,611.5L577.46,611.5L577.64,604L579.49,604L579.67,611.5L579.86,604L580.6,604L580.78,611.5L580.97,611.5L581.15,604L581.71,604L581.89,611.5L582.45,611.5L582.63,604L583.55,604L583.74,611.5L583.92,611.5L584.11,604L584.29,604L584.48,611.5L584.66,604L584.85,604L585.03,611.5L585.59,611.5L585.77,604L586.33,604L586.51,611.5L586.7,604L587.25,604L587.43,611.5L588.36,611.5L588.54,604L588.73,604L588.91,611.5L590.58,611.5L590.76,604L590.94,611.5L591.13,611.5L591.31,604L591.87,604L592.05,611.5L592.24,604L592.42,604L592.61,611.5L592.79,611.5L592.98,604L593.16,611.5L593.53,611.5L593.72,604L593.9,611.5L594.46,611.5L594.64,604L594.83,611.5L595.19,611.5L595.38,604L595.56,611.5L595.93,611.5L596.12,604L596.3,604L596.49,611.5L597.78,611.5L597.97,604L598.15,611.5L602.4,611.5L602.59,604L602.77,604L602.96,611.5L614.78,611.5L614.97,619L615.34,619L615.52,611.5L621.06,611.5L621.25,619L621.43,611.5L622.91,611.5L623.1,619L623.28,619L623.47,611.5L624.02,611.5L624.2,619L624.39,611.5L624.94,611.5L625.13,619L625.5,619L625.68,611.5L626.98,611.5L627.16,619L627.35,611.5L628.27,611.5L628.45,619L628.64,619L628.82,611.5L629.01,611.5L629.19,619L629.38,611.5L629.56,611.5L629.75,619L629.93,619L630.12,611.5L630.3,611.5L630.49,619L630.67,611.5L630.86,611.5L631.04,619L631.23,611.5L632.33,611.5L632.52,619L632.7,611.5L633.26,611.5L633.44,619L633.63,611.5L633.81,619L634.18,619L634.37,611.5L634.55,611.5L634.74,619L635.48,619L635.66,611.5L635.84,619L636.21,619L636.4,611.5L636.58,611.5L636.77,619L636.95,611.5L637.14,619L637.69,619L637.88,611.5L638.06,619L638.62,619L638.8,611.5L639.36,611.5L639.54,619L639.73,611.5L639.91,611.5L640.09,619L641.39,619L641.57,611.5L641.76,611.5L641.94,619L644.71,619L644.9,611.5L645.08,611.5L645.27,619L646.75,619L646.93,611.5L647.3,611.5L647.49,619L651.92,619L652.11,611.5L652.29,619L654.88,619L655.06,611.5L655.25,619L668.37,619L668.55,626.5L668.73,626.5L668.92,619L669.66,619L669.84,626.5L670.03,626.5L670.21,619L671.88,619L672.06,626.5L672.43,626.5L672.61,619L672.8,619L672.98,626.5L673.17,619L673.35,626.5L673.72,626.5L673.91,619L675.2,619L675.39,626.5L675.57,619L676.5,619L676.68,626.5L676.86,619L677.97,619L678.16,626.5L678.34,626.5L678.53,619L678.9,619L679.08,626.5L679.45,626.5L679.64,619L680.01,619L680.19,626.5L680.38,626.5L680.56,619L680.93,619L681.11,626.5L681.3,626.5L681.48,619L682.78,619L682.96,626.5L683.15,619L683.33,626.5L683.7,626.5L683.89,619L684.07,626.5L684.26,619L684.44,619L684.63,626.5L684.81,619L684.99,619L685.18,626.5L685.36,619L685.55,626.5L685.92,626.5L686.1,619L686.84,619L687.03,626.5L687.21,619L687.4,626.5L687.77,626.5L687.95,619L688.14,626.5L688.32,619L688.51,626.5L689.06,626.5L689.24,619L689.43,619L689.61,626.5L689.8,626.5L689.98,619L690.35,619L690.54,626.5L690.72,626.5L690.91,619L691.65,619L691.83,626.5L692.02,619L692.39,619L692.57,626.5L692.94,626.5L693.12,619L693.31,626.5L693.49,626.5L693.68,619L694.42,619L694.6,626.5L696.27,626.5L696.45,619L696.64,626.5L696.82,619L697.01,626.5L698.85,626.5L699.04,619L699.22,626.5L699.59,626.5L699.78,619L699.96,626.5L701.44,626.5L701.62,619L701.81,626.5L702.55,626.5L702.73,619L702.92,626.5L705.14,626.5L705.32,619L705.5,626.5L705.69,626.5L705.87,641.5L706.06,626.5L706.24,619L706.43,626.5L706.61,626.5L706.8,619L706.98,626.5L707.35,626.5L707.54,649L707.72,626.5L709.38,626.5L709.57,619L709.75,626.5L711.79,626.5L711.97,619L712.16,626.5L712.71,626.5L712.9,641.5L713.08,626.5L715.85,626.5L716.04,641.5L716.22,626.5L719.73,626.5L719.92,656.5L720.1,626.5L721.58,626.5L721.76,641.5L721.95,626.5L722.13,626.5L722.32,641.5L722.5,626.5L722.69,641.5L722.87,626.5L723.06,626.5L723.24,641.5L723.43,626.5L724.17,626.5L724.35,641.5L724.54,626.5L724.72,626.5L724.91,641.5L725.09,641.5L725.28,626.5L727.31,626.5L727.49,641.5L727.68,626.5L727.86,626.5L728.05,641.5L728.23,626.5L728.42,626.5L728.6,641.5L728.79,626.5L728.97,626.5L729.16,641.5L729.34,626.5L729.89,626.5L730.08,641.5L730.26,626.5L730.45,641.5L730.63,641.5L730.82,626.5L732.3,626.5L732.48,641.5L732.67,641.5L732.85,626.5L733.22,626.5L733.41,641.5L733.59,649L733.77,626.5L733.96,641.5L734.14,626.5L734.33,641.5L734.51,641.5L734.7,626.5L734.88,641.5L735.25,641.5L735.44,626.5L735.62,641.5L735.81,626.5L735.99,641.5L736.18,626.5L736.55,626.5L736.73,641.5L736.92,641.5L737.1,626.5L737.29,626.5L737.47,641.5L737.66,626.5L737.84,641.5L738.39,641.5L738.58,656.5L738.76,641.5L738.95,626.5L739.13,641.5L739.32,641.5L739.5,626.5L739.87,626.5L740.06,641.5L741.17,641.5L741.35,626.5L741.54,641.5L741.72,641.5L741.9,626.5L742.09,626.5L742.27,641.5L742.46,641.5L742.64,626.5L743.2,626.5L743.38,641.5L744.12,641.5L744.31,626.5L744.49,626.5L744.68,641.5L745.05,641.5L745.23,626.5L745.6,626.5L745.79,641.5L746.34,641.5L746.52,626.5L746.71,626.5L746.89,641.5L747.26,641.5L747.45,626.5L747.82,626.5L748,656.5L748.19,641.5L748.56,641.5L748.74,626.5L748.93,641.5L749.11,626.5L749.3,641.5L749.67,641.5L749.85,626.5L750.04,641.5L750.22,626.5L750.59,626.5L750.77,641.5L751.7,641.5L751.88,626.5L752.07,641.5L752.25,641.5L752.44,626.5L752.62,626.5L752.81,641.5L753.55,641.5L753.73,626.5L753.92,641.5L754.1,626.5L754.28,641.5L754.84,641.5L755.02,626.5L755.21,641.5L755.58,641.5L755.76,626.5L755.95,641.5L756.32,641.5L756.5,626.5L756.87,626.5L757.06,656.5L757.24,626.5L757.43,626.5L757.61,641.5L757.8,641.5L757.98,626.5L758.53,626.5L758.72,641.5L762.23,641.5L762.41,649L762.6,641.5L762.78,626.5L763.15,626.5L763.34,641.5L764.26,641.5L764.45,656.5L764.63,641.5L764.82,626.5L765,641.5L765.19,641.5L765.37,649L766.3,649L766.48,641.5L766.66,649L766.85,641.5L767.4,641.5L767.59,649L767.77,641.5L768.51,641.5L768.7,649L768.88,649L769.07,641.5L769.25,649L769.44,641.5L769.62,641.5L769.81,649L770.54,649L770.73,641.5L771.1,641.5L771.28,649L772.39,649L772.58,656.5L772.76,649L776.83,649L777.01,656.5L777.2,649L777.57,649L777.75,656.5L777.94,649L778.12,649L778.31,656.5L778.49,656.5L778.67,649L779.97,649L780.15,656.5L781.08,656.5L781.26,649L781.45,649L781.63,656.5L782.92,656.5L783.11,649L783.29,656.5L783.85,656.5L784.03,664L784.22,656.5L798.26,656.5L798.45,664L798.63,656.5L799,656.5" fill="none" stroke="#7eb26d" stroke-width="1"/></g></svg>
<div class="ylab" style="right:1471px;top:466px">4.175 V</div>
<div class="ylab" style="right:1471px;top:502.67px">4.150 V</div>
<div class="ylab" style="right:1471px;top:539.33px">4.125 V</div>
<div class="ylab" style="right:1471px;top:576px">4.100 V</div>
<div class="ylab" style="right:1471px;top:612.67px">4.075 V</div>
<div class="ylab" style="right:1471px;top:649.33px">4.050 V</div>
<div class="ylab" style="right:1471px;top:686px">4.025 V</div>
<div class="xlab" style="left:156.8px;top:700px">10/16</div>
<div class="xlab" style="left:260.63px;top:700px">10/18</div>
<div class="xlab" style="left:364.46px;top:700px">10/20</div>
<div class="xlab" style="left:468.3px;top:700px">10/22</div>
<div class="xlab" style="left:572.13px;top:700px">10/24</div>
<div class="xlab" style="left:675.96px;top:700px">10/26</div>
<div class="lsw" style="left:102px;top:728.5px"></div>
<div class="ltxt" style="left:118px;top:723px;font-size:11px">battery_value</div>
<div class="ltxt lcur" style="left:190px;top:723px">Current: 4.0493 V</div>
<div class="panel" style="left:835px;top:435px;width:745px;height:311px"></div>
<div class="ptitle" style="left:835px;top:442.5px;width:745px">RSSI</div>
<svg class="chart" width="1600" height="826" viewBox="0 0 1600 826" style="left:0;top:0"><defs><clipPath id="cl_rssi"><rect x="883" y="443" width="671" height="250"/></clipPath></defs><path d="M883,473h671v1h-671zM883,517h671v1h-671zM883,561h671v1h-671zM883,605h671v1h-671zM883,649h671v1h-671zM883,693h671v1h-671zM936,473h1v221h-1zM1041,473h1v221h-1zM1145,473h1v221h-1zM1250,473h1v221h-1zM1355,473h1v221h-1zM1460,473h1v221h-1z" fill="rgba(200,200,200,0.22)"/><g clip-path="url(#cl_rssi)"><path d="M883,534.6L883.19,525.8L883.37,534.6L883.56,543.4L883.75,534.6L884.86,534.6L885.05,517L885.24,534.6L885.42,525.8L885.61,534.6L885.8,543.4L885.98,517L886.17,534.6L886.36,525.8L886.54,525.8L886.73,534.6L886.92,543.4L887.1,525.8L887.29,543.4L887.47,525.8L887.66,534.6L887.85,534.6L888.03,525.8L888.22,543.4L888.41,534.6L888.97,534.6L889.15,525.8L889.34,534.6L889.71,534.6L889.9,543.4L890.08,525.8L890.27,534.6L890.46,543.4L890.64,534.6L890.83,525.8L891.02,525.8L891.2,534.6L891.39,534.6L891.58,517L891.76,525.8L891.95,534.6L892.14,525.8L892.32,534.6L892.51,517L892.69,525.8L892.88,525.8L893.07,534.6L893.44,534.6L893.63,525.8L893.81,525.8L894,534.6L894.19,525.8L894.37,534.6L894.56,534.6L894.75,543.4L894.93,534.6L895.31,534.6L895.49,543.4L895.68,534.6L895.86,534.6L896.05,543.4L896.24,525.8L896.42,525.8L896.61,543.4L896.8,534.6L896.98,525.8L897.17,543.4L897.36,525.8L897.73,525.8L897.92,543.4L898.1,534.6L898.29,534.6L898.47,525.8L898.66,543.4L898.85,534.6L899.03,543.4L899.22,525.8L899.41,534.6L899.78,534.6L899.97,525.8L900.15,534.6L900.34,534.6L900.53,525.8L900.71,534.6L900.9,543.4L901.08,534.6L901.27,525.8L901.46,534.6L901.83,534.6L902.02,525.8L902.2,534.6L902.76,534.6L902.95,525.8L903.14,525.8L903.32,534.6L903.51,543.4L903.69,525.8L903.88,525.8L904.07,534.6L904.25,543.4L904.44,534.6L904.63,543.4L904.81,534.6L905.19,534.6L905.37,525.8L905.56,534.6L905.75,525.8L905.93,534.6L906.12,534.6L906.31,525.8L906.49,534.6L907.61,534.6L907.8,525.8L907.98,525.8L908.17,534.6L908.36,525.8L908.54,525.8L908.73,534.6L909.29,534.6L909.47,543.4L909.66,534.6L911.34,534.6L911.53,525.8L911.71,534.6L912.27,534.6L912.46,525.8L912.64,543.4L912.83,525.8L913.02,534.6L913.2,525.8L913.39,525.8L913.58,534.6L913.76,525.8L913.95,534.6L914.88,534.6L915.07,543.4L915.25,534.6L915.44,543.4L915.63,525.8L915.81,534.6L916,525.8L916.19,543.4L916.56,543.4L916.75,534.6L916.93,543.4L917.12,534.6L917.31,543.4L917.49,543.4L917.68,534.6L918.05,534.6L918.24,525.8L918.42,534.6L918.61,543.4L918.8,534.6L918.98,525.8L919.17,534.6L920.29,534.6L920.47,543.4L920.66,525.8L920.85,534.6L921.03,543.4L921.22,534.6L921.41,534.6L921.59,543.4L921.78,534.6L921.97,525.8L922.15,534.6L922.34,534.6L922.53,525.8L922.71,534.6L922.9,534.6L923.08,525.8L923.27,534.6L923.83,534.6L924.02,543.4L924.2,525.8L924.39,534.6L924.58,525.8L924.76,534.6L924.95,534.6L925.14,525.8L925.32,534.6L925.69,534.6L925.88,543.4L926.07,534.6L927,534.6L927.19,525.8L927.37,525.8L927.56,534.6L928.68,534.6L928.86,543.4L929.05,534.6L929.24,534.6L929.42,525.8L929.61,534.6L930.92,534.6L931.1,525.8L931.29,534.6L931.66,534.6L931.85,543.4L932.03,534.6L932.22,534.6L932.41,525.8L932.59,525.8L932.78,534.6L932.97,534.6L933.15,543.4L933.34,534.6L933.71,534.6L933.9,543.4L934.08,525.8L934.27,543.4L934.46,525.8L934.83,525.8L935.02,534.6L935.2,534.6L935.39,543.4L935.58,534.6L935.76,543.4L935.95,534.6L936.14,534.6L936.32,525.8L936.51,525.8L936.69,534.6L936.88,534.6L937.07,543.4L937.44,543.4L937.63,534.6L938.19,534.6L938.37,543.4L938.56,543.4L938.75,534.6L939.49,534.6L939.68,543.4L939.86,543.4L940.05,534.6L940.24,543.4L940.42,534.6L940.61,534.6L940.8,543.4L940.98,534.6L941.17,534.6L941.36,543.4L941.54,543.4L941.73,534.6L941.92,543.4L942.1,534.6L942.85,534.6L943.03,543.4L943.22,525.8L943.41,534.6L943.59,525.8L943.78,534.6L945.46,534.6L945.64,525.8L945.83,534.6L946.2,534.6L946.39,543.4L946.95,543.4L947.14,534.6L947.32,543.4L947.51,534.6L947.69,534.6L947.88,525.8L948.07,534.6L948.25,543.4L948.44,534.6L949,534.6L949.19,543.4L949.37,534.6L949.75,534.6L949.93,525.8L950.12,543.4L950.31,534.6L950.49,534.6L950.68,525.8L950.86,525.8L951.05,534.6L951.24,534.6L951.42,525.8L951.61,534.6L953.1,534.6L953.29,543.4L953.47,543.4L953.66,534.6L954.41,534.6L954.59,517L954.78,534.6L954.97,525.8L955.15,534.6L955.34,534.6L955.53,543.4L955.71,534.6L957.02,534.6L957.2,543.4L957.39,534.6L957.58,534.6L957.76,543.4L957.95,534.6L958.14,543.4L958.51,543.4L958.69,534.6L958.88,543.4L959.07,534.6L959.25,543.4L960,543.4L960.19,534.6L960.37,543.4L960.56,543.4L960.75,534.6L960.93,543.4L961.12,534.6L961.31,552.2L961.49,534.6L961.68,543.4L962.24,543.4L962.42,552.2L962.61,543.4L962.8,543.4L962.98,552.2L963.17,534.6L963.36,543.4L963.92,543.4L964.1,534.6L964.29,552.2L964.47,543.4L965.03,543.4L965.22,552.2L965.41,543.4L965.78,543.4L965.97,552.2L966.15,543.4L966.34,543.4L966.53,552.2L966.71,543.4L966.9,543.4L967.08,552.2L967.27,543.4L967.46,543.4L967.64,552.2L968.39,552.2L968.58,543.4L969.32,543.4L969.51,552.2L969.69,552.2L969.88,543.4L970.07,552.2L970.44,552.2L970.63,543.4L970.81,561L971,552.2L971.19,552.2L971.37,561L971.56,543.4L971.75,552.2L971.93,552.2L972.12,543.4L972.31,552.2L972.49,552.2L972.68,543.4L972.86,561L973.05,552.2L973.24,552.2L973.42,543.4L973.61,552.2L973.8,552.2L973.98,561L976.78,561L976.97,552.2L977.15,561L977.34,561L977.53,569.8L977.9,569.8L978.08,561L978.27,561L978.46,569.8L979.02,569.8L979.2,578.6L979.39,569.8L979.58,569.8L979.76,578.6L979.95,569.8L980.14,569.8L980.32,578.6L981.07,578.6L981.25,569.8L981.44,578.6L981.63,578.6L981.81,587.4L982,578.6L982.19,587.4L982.56,587.4L982.75,578.6L982.93,587.4L983.31,587.4L983.49,578.6L983.68,587.4L983.86,596.2L984.05,578.6L984.24,587.4L984.42,596.2L984.8,596.2L984.98,587.4L985.17,596.2L985.36,596.2L985.54,587.4L985.73,587.4L985.92,596.2L986.47,596.2L986.66,605L986.85,596.2L987.03,605L987.22,605L987.41,596.2L987.78,596.2L987.97,605L988.53,605L988.71,613.8L988.9,605L989.08,596.2L989.27,613.8L989.46,596.2L989.64,605L989.83,613.8L990.02,631.4L990.2,613.8L990.39,605L990.58,613.8L991.51,613.8L991.69,605L991.88,613.8L992.25,613.8L992.44,605L992.63,613.8L992.81,613.8L993,631.4L993.19,605L993.37,622.6L993.56,613.8L994.86,613.8L995.05,631.4L995.24,613.8L995.98,613.8L996.17,622.6L996.54,622.6L996.73,613.8L996.92,622.6L997.1,613.8L997.29,622.6L997.47,613.8L997.66,613.8L997.85,622.6L998.22,622.6L998.41,613.8L998.59,622.6L998.78,622.6L998.97,613.8L999.34,613.8L999.53,622.6L999.71,622.6L999.9,613.8L1000.08,613.8L1000.27,631.4L1000.46,622.6L1001.02,622.6L1001.2,613.8L1001.39,622.6L1001.58,613.8L1001.76,613.8L1001.95,622.6L1002.14,622.6L1002.32,613.8L1002.51,622.6L1002.69,622.6L1002.88,613.8L1003.07,613.8L1003.25,622.6L1003.44,631.4L1003.63,631.4L1003.81,613.8L1004,613.8L1004.19,622.6L1004.75,622.6L1004.93,640.2L1005.12,622.6L1006.05,622.6L1006.24,613.8L1006.42,605L1006.61,587.4L1006.8,578.6L1006.98,561L1007.17,569.8L1007.36,561L1007.54,569.8L1007.73,561L1007.92,569.8L1008.1,561L1008.47,561L1008.66,569.8L1008.85,561L1009.03,552.2L1009.22,569.8L1009.41,569.8L1009.59,561L1009.78,569.8L1009.97,561L1010.15,561L1010.34,569.8L1010.53,561L1010.9,561L1011.08,569.8L1011.27,561L1011.46,569.8L1011.83,569.8L1012.02,561L1012.2,569.8L1012.76,569.8L1012.95,561L1013.14,561L1013.32,569.8L1013.88,569.8L1014.07,561L1014.25,561L1014.44,578.6L1014.63,569.8L1014.81,569.8L1015,552.2L1015.19,561L1015.37,569.8L1016.31,569.8L1016.49,578.6L1016.68,578.6L1016.86,569.8L1017.8,569.8L1017.98,578.6L1018.17,569.8L1019.66,569.8L1019.85,578.6L1020.03,569.8L1020.41,569.8L1020.59,561L1020.78,578.6L1020.97,578.6L1021.15,569.8L1021.34,578.6L1021.53,569.8L1021.71,578.6L1021.9,569.8L1022.08,578.6L1022.27,569.8L1022.46,578.6L1022.64,569.8L1022.83,569.8L1023.02,578.6L1023.2,578.6L1023.39,569.8L1023.58,578.6L1023.95,578.6L1024.14,569.8L1024.32,578.6L1024.69,578.6L1024.88,569.8L1025.07,569.8L1025.25,578.6L1025.44,569.8L1025.63,578.6L1026.19,578.6L1026.37,569.8L1026.56,569.8L1026.75,578.6L1027.12,578.6L1027.31,587.4L1027.49,569.8L1027.68,569.8L1027.86,578.6L1028.05,578.6L1028.24,569.8L1028.42,569.8L1028.61,578.6L1029.36,578.6L1029.54,569.8L1029.73,587.4L1029.92,578.6L1030.1,578.6L1030.29,569.8L1030.47,587.4L1030.66,578.6L1031.41,578.6L1031.59,569.8L1031.78,578.6L1032.71,578.6L1032.9,569.8L1033.08,578.6L1034.02,578.6L1034.2,587.4L1034.39,587.4L1034.58,578.6L1035.14,578.6L1035.32,587.4L1035.51,587.4L1035.69,578.6L1035.88,578.6L1036.07,587.4L1036.25,578.6L1036.44,578.6L1036.63,587.4L1036.81,587.4L1037,578.6L1037.56,578.6L1037.75,587.4L1038.12,587.4L1038.31,578.6L1038.49,587.4L1038.68,587.4L1038.86,578.6L1039.05,578.6L1039.24,569.8L1039.42,578.6L1039.61,578.6L1039.8,569.8L1039.98,587.4L1040.36,587.4L1040.54,578.6L1040.92,578.6L1041.1,587.4L1041.29,587.4L1041.47,578.6L1041.66,587.4L1042.03,587.4L1042.22,578.6L1042.41,587.4L1042.59,578.6L1042.78,578.6L1042.97,587.4L1043.34,587.4L1043.53,578.6L1043.71,587.4L1043.9,578.6L1044.08,587.4L1044.27,578.6L1044.64,578.6L1044.83,587.4L1045.02,578.6L1045.2,578.6L1045.39,587.4L1045.95,587.4L1046.14,569.8L1046.32,587.4L1046.51,578.6L1046.69,587.4L1047.07,587.4L1047.25,578.6L1047.44,587.4L1047.63,578.6L1048.19,578.6L1048.37,587.4L1048.56,587.4L1048.75,578.6L1048.93,578.6L1049.12,587.4L1049.68,587.4L1049.86,578.6L1050.42,578.6L1050.61,587.4L1051.17,587.4L1051.36,578.6L1051.73,578.6L1051.92,587.4L1052.1,587.4L1052.29,578.6L1052.47,587.4L1052.66,578.6L1052.85,578.6L1053.03,587.4L1053.22,578.6L1053.59,578.6L1053.78,587.4L1053.97,587.4L1054.15,578.6L1054.34,587.4L1054.53,587.4L1054.71,578.6L1054.9,578.6L1055.08,587.4L1056.02,587.4L1056.2,578.6L1056.39,578.6L1056.58,587.4L1057.14,587.4L1057.32,578.6L1057.51,587.4L1058.25,587.4L1058.44,578.6L1058.63,587.4L1059.19,587.4L1059.37,578.6L1059.56,587.4L1059.75,569.8L1059.93,578.6L1060.31,578.6L1060.49,587.4L1060.68,578.6L1061.24,578.6L1061.42,587.4L1061.61,587.4L1061.8,578.6L1062.17,578.6L1062.36,587.4L1062.73,587.4L1062.92,578.6L1063.29,578.6L1063.47,587.4L1063.66,578.6L1063.85,587.4L1064.03,587.4L1064.22,578.6L1064.41,578.6L1064.59,587.4L1064.78,587.4L1064.97,578.6L1065.15,578.6L1065.34,587.4L1065.53,587.4L1065.71,578.6L1065.9,578.6L1066.08,587.4L1066.46,587.4L1066.64,578.6L1068.51,578.6L1068.69,587.4L1068.88,587.4L1069.07,578.6L1070.56,578.6L1070.75,587.4L1070.93,578.6L1071.12,578.6L1071.31,587.4L1071.49,578.6L1071.86,578.6L1072.05,587.4L1072.24,578.6L1072.42,587.4L1072.61,569.8L1072.8,578.6L1072.98,578.6L1073.17,587.4L1073.36,578.6L1073.92,578.6L1074.1,587.4L1074.29,578.6L1074.47,578.6L1074.66,587.4L1074.85,578.6L1075.03,578.6L1075.22,587.4L1075.59,587.4L1075.78,569.8L1075.97,569.8L1076.15,578.6L1076.34,587.4L1076.53,578.6L1076.71,587.4L1077.46,587.4L1077.64,578.6L1077.83,578.6L1078.02,587.4L1078.39,587.4L1078.58,578.6L1078.95,578.6L1079.14,587.4L1079.32,578.6L1079.88,578.6L1080.07,587.4L1080.25,578.6L1080.44,578.6L1080.63,587.4L1080.81,578.6L1081,569.8L1081.19,587.4L1081.37,578.6L1081.56,587.4L1081.75,578.6L1081.93,587.4L1082.12,578.6L1082.31,587.4L1082.49,578.6L1083.05,578.6L1083.24,587.4L1083.42,587.4L1083.61,578.6L1083.8,587.4L1083.98,587.4L1084.17,578.6L1084.36,578.6L1084.54,587.4L1084.73,587.4L1084.92,578.6L1085.1,587.4L1085.29,578.6L1085.85,578.6L1086.03,605L1086.22,587.4L1086.41,578.6L1086.59,587.4L1086.78,578.6L1087.71,578.6L1087.9,587.4L1088.08,578.6L1088.46,578.6L1088.64,587.4L1088.83,587.4L1089.02,578.6L1089.2,587.4L1089.39,578.6L1089.58,587.4L1090.32,587.4L1090.51,578.6L1090.69,587.4L1091.25,587.4L1091.44,578.6L1091.81,578.6L1092,587.4L1092.19,578.6L1092.37,587.4L1092.75,587.4L1092.93,578.6L1093.12,587.4L1093.31,578.6L1093.49,578.6L1093.68,587.4L1094.24,587.4L1094.42,578.6L1094.61,587.4L1094.8,587.4L1094.98,578.6L1095.17,587.4L1095.36,587.4L1095.54,578.6L1095.73,578.6L1095.92,587.4L1096.1,578.6L1096.29,587.4L1096.66,587.4L1096.85,578.6L1097.03,587.4L1097.41,587.4L1097.59,578.6L1097.78,587.4L1098.34,587.4L1098.53,578.6L1099.46,578.6L1099.64,587.4L1099.83,578.6L1100.02,578.6L1100.2,587.4L1100.58,587.4L1100.76,578.6L1100.95,578.6L1101.14,587.4L1101.51,587.4L1101.69,578.6L1102.07,578.6L1102.25,587.4L1102.44,578.6L1102.63,587.4L1103,587.4L1103.19,578.6L1103.37,587.4L1103.75,587.4L1103.93,578.6L1104.12,587.4L1104.31,587.4L1104.49,578.6L1104.68,578.6L1104.86,587.4L1105.05,578.6L1105.24,578.6L1105.42,587.4L1106.17,587.4L1106.36,578.6L1106.54,578.6L1106.73,587.4L1107.47,587.4L1107.66,578.6L1107.85,578.6L1108.03,587.4L1108.22,587.4L1108.41,578.6L1109.15,578.6L1109.34,587.4L1109.53,587.4L1109.71,578.6L1109.9,578.6L1110.08,587.4L1110.27,578.6L1110.46,587.4L1110.64,587.4L1110.83,578.6L1111.02,578.6L1111.2,587.4L1111.39,578.6L1111.58,578.6L1111.76,587.4L1111.95,587.4L1112.14,578.6L1112.32,578.6L1112.51,587.4L1112.69,578.6L1112.88,587.4L1113.07,578.6L1113.44,578.6L1113.63,587.4L1113.81,578.6L1114,587.4L1114.56,587.4L1114.75,578.6L1114.93,587.4L1115.12,578.6L1115.31,578.6L1115.49,587.4L1115.68,587.4L1115.86,578.6L1116.24,578.6L1116.42,587.4L1116.61,578.6L1116.8,578.6L1116.98,587.4L1117.17,578.6L1117.36,578.6L1117.54,587.4L1117.92,587.4L1118.1,578.6L1118.29,587.4L1118.47,587.4L1118.66,578.6L1118.85,587.4L1119.03,587.4L1119.22,578.6L1119.41,578.6L1119.59,587.4L1119.78,587.4L1119.97,578.6L1120.34,578.6L1120.53,587.4L1120.71,578.6L1120.9,587.4L1121.83,587.4L1122.02,578.6L1122.2,578.6L1122.39,587.4L1122.58,578.6L1122.76,587.4L1122.95,587.4L1123.14,578.6L1123.32,587.4L1124.07,587.4L1124.25,578.6L1124.44,578.6L1124.63,587.4L1124.81,578.6L1126.12,578.6L1126.31,587.4L1126.49,587.4L1126.68,578.6L1126.86,578.6L1127.05,587.4L1127.61,587.4L1127.8,578.6L1127.98,587.4L1128.54,587.4L1128.73,578.6L1129.29,578.6L1129.47,587.4L1129.66,578.6L1130.03,578.6L1130.22,587.4L1130.41,578.6L1130.59,587.4L1130.78,587.4L1130.97,578.6L1131.15,578.6L1131.34,587.4L1131.53,587.4L1131.71,578.6L1131.9,578.6L1132.08,587.4L1132.27,578.6L1132.46,587.4L1132.64,578.6L1132.83,587.4L1133.2,587.4L1133.39,596.2L1133.58,587.4L1133.95,587.4L1134.14,596.2L1134.51,596.2L1134.69,587.4L1135.81,587.4L1136,596.2L1136.19,587.4L1136.37,596.2L1136.56,596.2L1136.75,587.4L1136.93,596.2L1137.49,596.2L1137.68,578.6L1137.86,596.2L1138.42,596.2L1138.61,587.4L1138.8,587.4L1138.98,596.2L1139.17,596.2L1139.36,578.6L1139.54,596.2L1139.73,587.4L1141.22,587.4L1141.41,596.2L1141.59,587.4L1141.78,587.4L1141.97,596.2L1142.15,587.4L1142.34,578.6L1142.53,587.4L1142.71,587.4L1142.9,578.6L1143.08,587.4L1143.27,596.2L1143.46,587.4L1143.64,587.4L1143.83,596.2L1144.2,596.2L1144.39,587.4L1144.58,587.4L1144.76,596.2L1144.95,587.4L1145.14,587.4L1145.32,596.2L1145.51,596.2L1145.69,587.4L1146.07,587.4L1146.25,596.2L1146.63,596.2L1146.81,587.4L1147,596.2L1147.56,596.2L1147.75,587.4L1147.93,596.2L1148.12,596.2L1148.31,587.4L1148.68,587.4L1148.86,596.2L1149.05,587.4L1149.24,587.4L1149.42,596.2L1149.61,587.4L1149.8,596.2L1150.36,596.2L1150.54,587.4L1150.92,587.4L1151.1,596.2L1151.29,596.2L1151.47,587.4L1151.66,596.2L1152.03,596.2L1152.22,587.4L1152.41,596.2L1152.59,587.4L1152.78,596.2L1152.97,587.4L1153.15,587.4L1153.34,596.2L1153.53,587.4L1153.71,587.4L1153.9,596.2L1154.08,587.4L1154.27,596.2L1154.46,587.4L1154.83,587.4L1155.02,596.2L1155.2,587.4L1155.39,596.2L1155.58,596.2L1155.76,587.4L1155.95,596.2L1156.14,596.2L1156.32,587.4L1156.51,596.2L1156.69,587.4L1157.25,587.4L1157.44,596.2L1158.37,596.2L1158.56,587.4L1158.75,596.2L1158.93,596.2L1159.12,587.4L1159.31,596.2L1159.49,587.4L1159.68,587.4L1159.86,596.2L1160.05,587.4L1160.24,596.2L1160.42,596.2L1160.61,587.4L1160.8,587.4L1160.98,596.2L1161.17,587.4L1161.36,587.4L1161.54,596.2L1161.92,596.2L1162.1,587.4L1162.29,587.4L1162.47,596.2L1162.66,587.4L1163.59,587.4L1163.78,596.2L1163.97,587.4L1164.15,596.2L1164.53,596.2L1164.71,587.4L1164.9,587.4L1165.08,596.2L1165.27,587.4L1165.83,587.4L1166.02,596.2L1166.2,587.4L1166.39,596.2L1166.58,587.4L1167.32,587.4L1167.51,596.2L1167.69,596.2L1167.88,587.4L1168.07,596.2L1168.25,596.2L1168.44,587.4L1168.63,587.4L1168.81,596.2L1169.56,596.2L1169.75,587.4L1170.12,587.4L1170.31,596.2L1170.49,596.2L1170.68,587.4L1170.86,596.2L1171.05,587.4L1171.42,587.4L1171.61,596.2L1171.8,587.4L1171.98,613.8L1172.17,587.4L1172.36,596.2L1172.54,587.4L1172.73,587.4L1172.92,596.2L1173.1,587.4L1173.29,587.4L1173.47,596.2L1173.66,596.2L1173.85,587.4L1174.03,587.4L1174.22,596.2L1174.78,596.2L1174.97,587.4L1175.15,596.2L1175.34,596.2L1175.53,587.4L1175.71,587.4L1175.9,596.2L1176.27,596.2L1176.46,605L1176.64,587.4L1176.83,596.2L1177.02,587.4L1177.2,596.2L1177.39,596.2L1177.58,587.4L1177.76,596.2L1177.95,587.4L1178.14,596.2L1178.32,587.4L1178.51,587.4L1178.69,596.2L1178.88,605L1179.07,605L1179.25,596.2L1179.44,605L1179.63,596.2L1179.81,587.4L1180,596.2L1180.19,587.4L1180.37,596.2L1180.93,596.2L1181.12,587.4L1181.31,596.2L1181.49,587.4L1181.68,596.2L1181.86,587.4L1182.05,622.6L1182.24,587.4L1182.42,596.2L1182.61,596.2L1182.8,605L1182.98,596.2L1183.17,587.4L1183.54,587.4L1183.73,596.2L1183.92,587.4L1184.1,596.2L1184.29,605L1184.47,587.4L1184.66,587.4L1184.85,596.2L1185.03,587.4L1185.22,596.2L1185.41,596.2L1185.59,605L1185.78,587.4L1185.97,587.4L1186.15,596.2L1186.34,587.4L1186.53,587.4L1186.71,596.2L1186.9,587.4L1187.08,622.6L1187.27,596.2L1187.46,596.2L1187.64,587.4L1187.83,596.2L1188.02,596.2L1188.2,587.4L1188.58,587.4L1188.76,596.2L1188.95,596.2L1189.14,587.4L1189.32,596.2L1189.88,596.2L1190.07,622.6L1190.25,596.2L1190.44,596.2L1190.63,587.4L1190.81,587.4L1191,605L1191.19,596.2L1192.31,596.2L1192.49,587.4L1192.68,596.2L1192.86,596.2L1193.05,587.4L1193.24,596.2L1193.42,587.4L1193.61,605L1193.98,605L1194.17,596.2L1194.36,605L1194.54,587.4L1194.73,587.4L1194.92,596.2L1195.1,587.4L1195.29,587.4L1195.47,596.2L1195.66,596.2L1195.85,587.4L1196.03,596.2L1196.22,587.4L1196.41,596.2L1196.59,587.4L1197.15,587.4L1197.34,596.2L1197.53,587.4L1197.71,596.2L1197.9,596.2L1198.08,587.4L1198.27,587.4L1198.46,596.2L1198.64,596.2L1198.83,587.4L1199.02,587.4L1199.2,596.2L1199.58,596.2L1199.76,587.4L1199.95,587.4L1200.14,596.2L1200.32,587.4L1200.51,587.4L1200.69,596.2L1201.07,596.2L1201.25,587.4L1201.44,596.2L1201.63,587.4L1201.81,596.2L1202,587.4L1202.19,596.2L1202.56,596.2L1202.75,587.4L1202.93,587.4L1203.12,596.2L1203.31,587.4L1203.86,587.4L1204.05,596.2L1204.42,596.2L1204.61,587.4L1204.8,587.4L1204.98,596.2L1205.17,596.2L1205.36,587.4L1205.73,587.4L1205.92,596.2L1206.47,596.2L1206.66,587.4L1206.85,596.2L1207.41,596.2L1207.59,587.4L1207.78,587.4L1207.97,596.2L1208.15,587.4L1208.34,596.2L1208.53,587.4L1208.71,596.2L1208.9,587.4L1209.08,596.2L1209.27,596.2L1209.46,587.4L1209.64,596.2L1209.83,587.4L1210.02,596.2L1210.2,596.2L1210.39,587.4L1210.58,596.2L1210.76,587.4L1211.51,587.4L1211.69,596.2L1212.81,596.2L1213,587.4L1213.37,587.4L1213.56,596.2L1213.75,587.4L1214.12,587.4L1214.31,596.2L1214.49,587.4L1214.68,596.2L1214.86,596.2L1215.05,587.4L1215.24,596.2L1215.42,587.4L1215.8,587.4L1215.98,596.2L1216.17,587.4L1216.36,587.4L1216.54,596.2L1216.73,587.4L1216.92,596.2L1217.1,587.4L1217.29,587.4L1217.47,596.2L1217.66,587.4L1217.85,596.2L1218.03,596.2L1218.22,587.4L1218.41,596.2L1218.59,596.2L1218.78,587.4L1219.53,587.4L1219.71,596.2L1220.08,596.2L1220.27,587.4L1220.46,596.2L1220.64,587.4L1220.83,596.2L1221.02,587.4L1221.2,578.6L1221.39,596.2L1222.32,596.2L1222.51,587.4L1222.69,596.2L1222.88,587.4L1223.44,587.4L1223.63,596.2L1223.81,587.4L1224,596.2L1224.19,596.2L1224.37,587.4L1224.56,587.4L1224.75,596.2L1225.31,596.2L1225.49,587.4L1225.68,596.2L1225.86,587.4L1226.05,587.4L1226.24,596.2L1226.42,587.4L1226.61,596.2L1226.8,596.2L1226.98,587.4L1227.17,587.4L1227.36,578.6L1227.54,587.4L1227.73,596.2L1227.92,587.4L1228.1,578.6L1228.29,587.4L1228.47,596.2L1228.66,587.4L1228.85,587.4L1229.03,596.2L1229.22,596.2L1229.41,587.4L1229.78,587.4L1229.97,596.2L1230.15,587.4L1230.71,587.4L1230.9,596.2L1231.08,587.4L1231.27,596.2L1231.46,587.4L1231.64,596.2L1231.83,587.4L1232.02,596.2L1232.2,587.4L1232.39,596.2L1232.58,596.2L1232.76,587.4L1232.95,596.2L1233.14,596.2L1233.32,578.6L1233.51,587.4L1234.25,587.4L1234.44,578.6L1234.63,587.4L1234.81,587.4L1235,578.6L1235.19,587.4L1235.37,587.4L1235.56,578.6L1235.75,587.4L1235.93,587.4L1236.12,578.6L1236.31,578.6L1236.49,587.4L1236.68,578.6L1236.86,578.6L1237.05,587.4L1237.24,587.4L1237.42,578.6L1237.8,578.6L1237.98,587.4L1238.36,587.4L1238.54,578.6L1238.73,578.6L1238.92,587.4L1239.1,578.6L1239.29,587.4L1239.47,578.6L1239.66,587.4L1240.22,587.4L1240.41,578.6L1240.59,578.6L1240.78,587.4L1241.15,587.4L1241.34,578.6L1241.53,587.4L1241.71,587.4L1241.9,578.6L1242.08,578.6L1242.27,587.4L1242.46,578.6L1242.64,587.4L1242.83,578.6L1243.02,631.4L1243.2,578.6L1243.39,578.6L1243.58,587.4L1244.14,587.4L1244.32,578.6L1244.51,587.4L1244.69,578.6L1244.88,587.4L1245.07,578.6L1245.63,578.6L1245.81,587.4L1246,578.6L1246.19,578.6L1246.37,587.4L1246.56,578.6L1246.75,587.4L1246.93,587.4L1247.12,578.6L1247.49,578.6L1247.68,587.4L1247.86,578.6L1248.24,578.6L1248.42,587.4L1248.61,578.6L1248.8,578.6L1248.98,587.4L1249.17,578.6L1249.54,578.6L1249.73,587.4L1249.92,578.6L1250.29,578.6L1250.47,587.4L1250.85,587.4L1251.03,578.6L1251.22,587.4L1251.41,578.6L1251.97,578.6L1252.15,587.4L1252.34,578.6L1253.27,578.6L1253.46,587.4L1253.64,578.6L1254.58,578.6L1254.76,587.4L1254.95,578.6L1255.14,587.4L1255.32,578.6L1255.51,587.4L1255.69,587.4L1255.88,578.6L1256.07,587.4L1256.44,587.4L1256.63,578.6L1256.81,587.4L1257,578.6L1257.93,578.6L1258.12,587.4L1258.31,587.4L1258.49,578.6L1258.68,587.4L1258.86,578.6L1259.05,587.4L1259.24,587.4L1259.42,578.6L1259.8,578.6L1259.98,587.4L1260.17,578.6L1260.36,587.4L1260.54,578.6L1261.29,578.6L1261.47,587.4L1261.85,587.4L1262.03,578.6L1262.22,587.4L1262.41,587.4L1262.59,578.6L1262.78,587.4L1262.97,578.6L1263.15,578.6L1263.34,587.4L1263.53,587.4L1263.71,578.6L1264.27,578.6L1264.46,587.4L1264.64,578.6L1264.83,587.4L1265.02,587.4L1265.2,578.6L1265.76,578.6L1265.95,569.8L1266.14,587.4L1266.32,587.4L1266.51,578.6L1266.69,578.6L1266.88,587.4L1267.07,587.4L1267.25,578.6L1268.19,578.6L1268.37,587.4L1268.93,587.4L1269.12,578.6L1269.49,578.6L1269.68,587.4L1270.05,587.4L1270.24,578.6L1270.42,578.6L1270.61,587.4L1270.8,578.6L1270.98,587.4L1271.17,578.6L1271.54,578.6L1271.73,587.4L1272.29,587.4L1272.47,578.6L1272.66,578.6L1272.85,587.4L1273.59,587.4L1273.78,578.6L1273.97,596.2L1274.15,587.4L1274.34,587.4L1274.53,578.6L1274.71,587.4L1274.9,587.4L1275.08,596.2L1275.27,587.4L1275.46,587.4L1275.64,596.2L1275.83,587.4L1276.2,587.4L1276.39,596.2L1276.58,587.4L1276.76,596.2L1276.95,596.2L1277.14,587.4L1277.32,587.4L1277.51,578.6L1277.69,596.2L1278.25,596.2L1278.44,578.6L1278.63,596.2L1278.81,587.4L1279,596.2L1279.37,596.2L1279.56,587.4L1279.75,596.2L1279.93,587.4L1280.12,596.2L1280.31,587.4L1280.68,587.4L1280.86,596.2L1281.05,587.4L1281.8,587.4L1281.98,596.2L1283.47,596.2L1283.66,587.4L1283.85,596.2L1284.03,578.6L1284.22,596.2L1284.97,596.2L1285.15,578.6L1285.34,587.4L1285.53,596.2L1285.71,587.4L1285.9,596.2L1286.08,587.4L1286.27,587.4L1286.46,596.2L1286.83,596.2L1287.02,587.4L1287.2,596.2L1287.39,587.4L1287.95,587.4L1288.14,596.2L1288.51,596.2L1288.69,587.4L1289.25,587.4L1289.44,596.2L1289.63,587.4L1289.81,587.4L1290,596.2L1290.37,596.2L1290.56,587.4L1290.75,587.4L1290.93,578.6L1291.12,596.2L1291.31,587.4L1292.05,587.4L1292.24,596.2L1292.42,587.4L1292.61,587.4L1292.8,596.2L1292.98,596.2L1293.17,587.4L1293.36,596.2L1293.54,587.4L1293.73,587.4L1293.92,596.2L1294.66,596.2L1294.85,587.4L1295.03,587.4L1295.22,596.2L1295.41,596.2L1295.59,587.4L1296.15,587.4L1296.34,596.2L1296.53,587.4L1296.9,587.4L1297.08,666.6L1297.27,587.4L1297.46,596.2L1297.64,587.4L1298.02,587.4L1298.2,596.2L1298.39,587.4L1299.32,587.4L1299.51,596.2L1300.44,596.2L1300.63,587.4L1300.81,587.4L1301,596.2L1301.37,596.2L1301.56,587.4L1301.75,596.2L1302.12,596.2L1302.31,587.4L1302.49,587.4L1302.68,596.2L1303.05,596.2L1303.24,587.4L1303.42,596.2L1303.61,587.4L1303.8,587.4L1303.98,596.2L1304.17,596.2L1304.36,578.6L1304.54,596.2L1304.92,596.2L1305.1,587.4L1305.29,596.2L1305.47,587.4L1305.66,596.2L1305.85,587.4L1306.03,596.2L1306.41,596.2L1306.59,587.4L1306.78,587.4L1306.97,596.2L1307.15,596.2L1307.34,587.4L1307.71,587.4L1307.9,596.2L1308.08,596.2L1308.27,587.4L1309.2,587.4L1309.39,596.2L1309.58,587.4L1309.76,596.2L1309.95,596.2L1310.14,587.4L1310.88,587.4L1311.07,596.2L1311.25,578.6L1311.44,596.2L1311.63,587.4L1311.81,596.2L1312.19,596.2L1312.37,587.4L1312.75,587.4L1312.93,596.2L1313.12,587.4L1313.31,596.2L1313.49,587.4L1313.68,587.4L1313.86,596.2L1314.05,587.4L1314.24,596.2L1314.42,596.2L1314.61,587.4L1314.8,596.2L1314.98,587.4L1315.17,587.4L1315.36,596.2L1315.54,596.2L1315.73,587.4L1316.29,587.4L1316.47,596.2L1316.85,596.2L1317.03,587.4L1317.22,587.4L1317.41,596.2L1317.59,587.4L1318.71,587.4L1318.9,596.2L1319.08,587.4L1319.27,587.4L1319.46,596.2L1319.64,587.4L1319.83,587.4L1320.02,596.2L1320.2,587.4L1320.58,587.4L1320.76,596.2L1320.95,587.4L1322.07,587.4L1322.25,596.2L1322.44,596.2L1322.63,587.4L1322.81,596.2L1323.37,596.2L1323.56,587.4L1323.75,587.4L1323.93,596.2L1324.12,587.4L1324.31,587.4L1324.49,596.2L1324.68,587.4L1325.05,587.4L1325.24,596.2L1325.42,596.2L1325.61,587.4L1325.8,596.2L1325.98,587.4L1326.36,587.4L1326.54,596.2L1326.73,578.6L1326.92,587.4L1327.1,596.2L1327.29,587.4L1327.47,596.2L1327.85,596.2L1328.03,587.4L1328.22,587.4L1328.41,596.2L1328.59,596.2L1328.78,587.4L1328.97,587.4L1329.15,596.2L1329.34,587.4L1329.53,596.2L1329.71,587.4L1330.08,587.4L1330.27,596.2L1330.64,596.2L1330.83,587.4L1331.39,587.4L1331.58,596.2L1331.76,587.4L1332.32,587.4L1332.51,596.2L1332.69,587.4L1332.88,587.4L1333.07,596.2L1333.25,587.4L1333.63,587.4L1333.81,578.6L1334,587.4L1334.19,596.2L1334.37,596.2L1334.56,587.4L1334.75,587.4L1334.93,596.2L1335.12,596.2L1335.31,587.4L1337.17,587.4L1337.36,596.2L1337.54,596.2L1337.73,587.4L1337.92,596.2L1338.1,587.4L1338.29,596.2L1338.47,587.4L1338.66,587.4L1338.85,578.6L1339.03,596.2L1339.22,587.4L1339.41,596.2L1339.97,596.2L1340.15,587.4L1340.34,587.4L1340.53,596.2L1340.71,587.4L1340.9,596.2L1341.08,578.6L1341.27,587.4L1341.64,587.4L1341.83,596.2L1342.02,587.4L1342.39,587.4L1342.58,596.2L1342.76,587.4L1342.95,578.6L1343.14,587.4L1343.32,596.2L1343.69,596.2L1343.88,587.4L1344.63,587.4L1344.81,596.2L1345,631.4L1345.19,587.4L1345.37,596.2L1345.56,587.4L1346.12,587.4L1346.31,596.2L1346.49,587.4L1346.68,596.2L1347.24,596.2L1347.42,587.4L1347.61,596.2L1347.8,587.4L1348.36,587.4L1348.54,596.2L1348.73,587.4L1348.92,587.4L1349.1,596.2L1349.85,596.2L1350.03,587.4L1350.22,596.2L1350.41,596.2L1350.59,587.4L1351.15,587.4L1351.34,596.2L1351.53,587.4L1351.71,587.4L1351.9,596.2L1352.08,587.4L1352.46,587.4L1352.64,596.2L1352.83,587.4L1353.02,587.4L1353.2,596.2L1353.39,596.2L1353.58,587.4L1353.76,587.4L1353.95,596.2L1354.14,587.4L1354.88,587.4L1355.07,596.2L1355.25,587.4L1355.63,587.4L1355.81,596.2L1356,587.4L1356.19,587.4L1356.37,596.2L1356.56,587.4L1356.75,587.4L1356.93,596.2L1357.12,587.4L1357.68,587.4L1357.86,596.2L1358.05,587.4L1358.24,587.4L1358.42,596.2L1358.61,596.2L1358.8,587.4L1358.98,596.2L1359.17,596.2L1359.36,587.4L1359.54,596.2L1359.73,596.2L1359.92,587.4L1360.1,596.2L1360.29,587.4L1360.47,596.2L1360.66,596.2L1360.85,587.4L1361.03,596.2L1361.22,587.4L1361.41,596.2L1361.97,596.2L1362.15,587.4L1363.64,587.4L1363.83,578.6L1364.02,596.2L1364.2,587.4L1364.39,596.2L1364.58,587.4L1364.76,587.4L1364.95,596.2L1365.14,587.4L1365.32,596.2L1365.51,578.6L1365.69,596.2L1365.88,596.2L1366.07,587.4L1366.25,596.2L1366.44,587.4L1366.63,587.4L1366.81,596.2L1367,587.4L1367.19,596.2L1367.37,596.2L1367.56,587.4L1367.75,596.2L1367.93,596.2L1368.12,587.4L1368.31,596.2L1368.49,587.4L1368.68,587.4L1368.86,596.2L1369.05,587.4L1369.24,587.4L1369.42,596.2L1369.61,587.4L1369.8,578.6L1369.98,587.4L1370.17,596.2L1370.36,587.4L1370.54,596.2L1371.1,596.2L1371.29,587.4L1371.47,587.4L1371.66,596.2L1371.85,587.4L1372.03,578.6L1372.22,587.4L1372.41,596.2L1372.59,587.4L1373.34,587.4L1373.53,596.2L1374.08,596.2L1374.27,587.4L1374.46,596.2L1374.64,596.2L1374.83,587.4L1375.95,587.4L1376.14,596.2L1376.32,587.4L1376.69,587.4L1376.88,596.2L1377.07,587.4L1377.81,587.4L1378,596.2L1378.19,587.4L1378.37,587.4L1378.56,596.2L1378.75,587.4L1378.93,587.4L1379.12,596.2L1379.68,596.2L1379.86,587.4L1380.05,596.2L1380.24,596.2L1380.42,587.4L1380.61,596.2L1380.8,587.4L1381.36,587.4L1381.54,596.2L1381.73,587.4L1381.92,587.4L1382.1,596.2L1382.29,587.4L1382.47,596.2L1382.66,587.4L1382.85,596.2L1383.03,596.2L1383.22,587.4L1384.15,587.4L1384.34,596.2L1384.53,587.4L1384.9,587.4L1385.08,578.6L1385.27,587.4L1385.46,596.2L1385.64,587.4L1386.2,587.4L1386.39,596.2L1386.58,587.4L1386.76,596.2L1386.95,596.2L1387.14,587.4L1387.32,596.2L1387.51,587.4L1388.07,587.4L1388.25,596.2L1388.44,587.4L1388.63,596.2L1388.81,596.2L1389,587.4L1389.56,587.4L1389.75,596.2L1389.93,596.2L1390.12,587.4L1390.31,596.2L1391.24,596.2L1391.42,587.4L1391.61,596.2L1391.8,596.2L1391.98,587.4L1392.36,587.4L1392.54,596.2L1392.73,587.4L1392.92,587.4L1393.1,596.2L1393.29,587.4L1393.47,596.2L1393.66,596.2L1393.85,587.4L1394.03,587.4L1394.22,596.2L1394.41,596.2L1394.59,587.4L1394.78,596.2L1394.97,596.2L1395.15,587.4L1395.34,596.2L1395.53,587.4L1395.71,587.4L1395.9,596.2L1396.08,587.4L1396.27,596.2L1396.46,596.2L1396.64,587.4L1397.02,587.4L1397.2,596.2L1397.39,587.4L1397.58,596.2L1397.76,587.4L1397.95,596.2L1398.14,596.2L1398.32,587.4L1398.51,613.8L1398.69,596.2L1398.88,596.2L1399.07,587.4L1399.63,587.4L1399.81,596.2L1400,578.6L1400.19,596.2L1400.37,587.4L1400.75,587.4L1400.93,596.2L1401.12,596.2L1401.31,587.4L1401.49,587.4L1401.68,596.2L1402.05,596.2L1402.24,587.4L1402.61,587.4L1402.8,596.2L1403.17,596.2L1403.36,578.6L1403.54,587.4L1403.92,587.4L1404.1,596.2L1404.29,587.4L1404.47,622.6L1404.66,587.4L1405.41,587.4L1405.59,596.2L1405.78,587.4L1405.97,587.4L1406.15,596.2L1406.34,587.4L1406.53,587.4L1406.71,596.2L1407.08,596.2L1407.27,587.4L1407.46,596.2L1407.83,596.2L1408.02,587.4L1408.58,587.4L1408.76,596.2L1408.95,587.4L1409.14,587.4L1409.32,596.2L1409.51,587.4L1410.25,587.4L1410.44,596.2L1410.63,578.6L1410.81,587.4L1412.86,587.4L1413.05,596.2L1413.24,587.4L1413.8,587.4L1413.98,596.2L1414.17,587.4L1414.36,587.4L1414.54,596.2L1414.73,587.4L1414.92,587.4L1415.1,596.2L1415.85,596.2L1416.03,587.4L1416.22,596.2L1416.41,596.2L1416.59,587.4L1417.71,587.4L1417.9,596.2L1418.08,596.2L1418.27,587.4L1418.46,596.2L1418.64,587.4L1419.2,587.4L1419.39,596.2L1420.14,596.2L1420.32,587.4L1420.51,596.2L1420.69,587.4L1420.88,587.4L1421.07,596.2L1421.25,587.4L1421.44,596.2L1422.19,596.2L1422.37,587.4L1422.56,587.4L1422.75,596.2L1422.93,587.4L1423.49,587.4L1423.68,596.2L1423.86,596.2L1424.05,587.4L1424.24,596.2L1424.42,596.2L1424.61,587.4L1424.8,596.2L1424.98,587.4L1425.17,596.2L1425.36,587.4L1425.54,613.8L1425.73,596.2L1425.92,587.4L1426.29,587.4L1426.47,596.2L1426.66,587.4L1427.22,587.4L1427.41,596.2L1427.59,596.2L1427.78,587.4L1428.15,587.4L1428.34,596.2L1428.53,578.6L1428.71,587.4L1428.9,596.2L1429.08,596.2L1429.27,587.4L1430.2,587.4L1430.39,596.2L1430.58,587.4L1430.76,596.2L1430.95,596.2L1431.14,587.4L1431.32,578.6L1431.51,587.4L1431.69,596.2L1431.88,587.4L1432.07,587.4L1432.25,596.2L1432.81,596.2L1433,587.4L1433.19,587.4L1433.37,596.2L1433.56,596.2L1433.75,587.4L1433.93,587.4L1434.12,596.2L1434.31,587.4L1434.49,578.6L1434.68,587.4L1434.86,596.2L1435.05,596.2L1435.24,587.4L1435.42,596.2L1435.61,587.4L1435.8,587.4L1435.98,596.2L1436.17,587.4L1436.36,596.2L1436.92,596.2L1437.1,587.4L1437.29,596.2L1437.47,596.2L1437.66,587.4L1437.85,596.2L1438.03,587.4L1438.59,587.4L1438.78,578.6L1438.97,587.4L1439.15,596.2L1439.34,587.4L1439.53,587.4L1439.71,578.6L1439.9,596.2L1440.08,596.2L1440.27,587.4L1440.46,596.2L1440.64,587.4L1440.83,587.4L1441.02,596.2L1441.2,587.4L1441.39,596.2L1441.58,587.4L1442.14,587.4L1442.32,596.2L1442.51,587.4L1442.69,596.2L1442.88,596.2L1443.07,587.4L1443.63,587.4L1443.81,596.2L1444,596.2L1444.19,587.4L1444.37,596.2L1444.56,587.4L1444.75,596.2L1444.93,587.4L1445.12,596.2L1445.31,587.4L1445.68,587.4L1445.86,596.2L1446.05,596.2L1446.24,587.4L1447.92,587.4L1448.1,596.2L1448.66,596.2L1448.85,587.4L1449.03,596.2L1449.22,587.4L1449.41,596.2L1449.59,596.2L1449.78,587.4L1449.97,596.2L1450.15,587.4L1450.53,587.4L1450.71,596.2L1450.9,587.4L1451.08,596.2L1451.27,587.4L1451.46,596.2L1451.64,587.4L1452.02,587.4L1452.2,596.2L1452.39,596.2L1452.58,587.4L1452.76,587.4L1452.95,596.2L1453.14,587.4L1453.32,587.4L1453.51,596.2L1453.88,596.2L1454.07,587.4L1454.25,596.2L1454.44,587.4L1454.63,596.2L1454.81,587.4L1455,587.4L1455.19,596.2L1455.37,587.4L1455.56,587.4L1455.75,596.2L1455.93,587.4L1456.12,578.6L1456.31,596.2L1456.49,587.4L1456.68,587.4L1456.86,596.2L1457.05,587.4L1457.24,596.2L1457.8,596.2L1457.98,587.4L1458.17,596.2L1458.36,587.4L1458.73,587.4L1458.92,596.2L1459.1,587.4L1459.29,596.2L1459.66,596.2L1459.85,587.4L1460.41,587.4L1460.59,596.2L1460.78,587.4L1461.71,587.4L1461.9,596.2L1462.08,587.4L1462.64,587.4L1462.83,596.2L1463.02,596.2L1463.2,587.4L1463.39,596.2L1463.58,587.4L1463.76,596.2L1463.95,587.4L1464.14,596.2L1464.69,596.2L1464.88,587.4L1466.56,587.4L1466.75,596.2L1467.12,596.2L1467.31,587.4L1467.49,587.4L1467.68,578.6L1467.86,587.4L1468.05,596.2L1468.24,596.2L1468.42,587.4L1468.61,596.2L1468.8,587.4L1468.98,587.4L1469.17,596.2L1469.36,587.4L1469.73,587.4L1469.92,596.2L1470.1,587.4L1470.29,587.4L1470.47,596.2L1470.66,587.4L1471.03,587.4L1471.22,596.2L1471.41,587.4L1471.59,596.2L1471.78,596.2L1471.97,587.4L1472.15,596.2L1472.34,587.4L1472.53,587.4L1472.71,596.2L1472.9,587.4L1473.46,587.4L1473.64,596.2L1473.83,578.6L1474.02,596.2L1474.39,596.2L1474.58,587.4L1475.51,587.4L1475.69,596.2L1475.88,587.4L1476.07,587.4L1476.25,596.2L1476.44,587.4L1476.63,587.4L1476.81,596.2L1477,587.4L1477.19,587.4L1477.37,596.2L1477.56,596.2L1477.75,587.4L1477.93,587.4L1478.12,596.2L1478.49,596.2L1478.68,587.4L1479.24,587.4L1479.42,596.2L1479.61,587.4L1480.17,587.4L1480.36,596.2L1480.54,587.4L1480.73,596.2L1480.92,587.4L1481.85,587.4L1482.03,596.2L1482.22,596.2L1482.41,587.4L1482.59,596.2L1482.78,587.4L1483.15,587.4L1483.34,578.6L1483.53,596.2L1484.08,596.2L1484.27,587.4L1484.64,587.4L1484.83,596.2L1485.58,596.2L1485.76,587.4L1486.32,587.4L1486.51,596.2L1486.69,587.4L1486.88,587.4L1487.07,596.2L1487.25,587.4L1487.63,587.4L1487.81,578.6L1488,596.2L1488.19,587.4L1488.93,587.4L1489.12,578.6L1489.31,587.4L1489.86,587.4L1490.05,596.2L1490.24,596.2L1490.42,587.4L1490.8,587.4L1490.98,596.2L1491.17,587.4L1491.54,587.4L1491.73,596.2L1491.92,596.2L1492.1,587.4L1492.29,596.2L1492.47,596.2L1492.66,587.4L1493.03,587.4L1493.22,596.2L1493.41,587.4L1493.78,587.4L1493.97,596.2L1494.15,587.4L1494.34,596.2L1494.53,596.2L1494.71,587.4L1495.46,587.4L1495.64,596.2L1495.83,596.2L1496.02,587.4L1496.2,596.2L1496.39,596.2L1496.58,587.4L1496.76,587.4L1496.95,596.2L1497.14,587.4L1497.32,596.2L1497.51,587.4L1497.69,587.4L1497.88,596.2L1498.07,578.6L1498.25,596.2L1498.44,587.4L1498.63,587.4L1498.81,596.2L1499,596.2L1499.19,587.4L1499.56,587.4L1499.75,596.2L1499.93,587.4L1500.68,587.4L1500.86,596.2L1501.05,587.4L1501.24,578.6L1501.42,587.4L1501.8,587.4L1501.98,596.2L1502.36,596.2L1502.54,587.4L1502.73,596.2L1502.92,596.2L1503.1,587.4L1503.29,587.4L1503.47,596.2L1503.66,596.2L1503.85,587.4L1504.03,587.4L1504.22,596.2L1504.41,587.4L1504.59,596.2L1504.78,587.4L1505.71,587.4L1505.9,596.2L1506.08,596.2L1506.27,587.4L1506.46,587.4L1506.64,596.2L1506.83,587.4L1507.02,587.4L1507.2,596.2L1507.39,587.4L1507.95,587.4L1508.14,578.6L1508.32,596.2L1508.69,596.2L1508.88,587.4L1509.25,587.4L1509.44,596.2L1509.63,587.4L1509.81,587.4L1510,596.2L1510.19,587.4L1510.37,587.4L1510.56,596.2L1510.75,587.4L1511.49,587.4L1511.68,596.2L1511.86,587.4L1512.05,587.4L1512.24,596.2L1512.42,587.4L1512.98,587.4L1513.17,596.2L1513.36,587.4L1513.54,596.2L1513.73,587.4L1513.92,596.2L1514.1,587.4L1514.29,596.2L1515.03,596.2L1515.22,587.4L1515.41,596.2L1515.59,596.2L1515.78,587.4L1515.97,587.4L1516.15,596.2L1516.53,596.2L1516.71,587.4L1516.9,596.2L1517.08,596.2L1517.27,587.4L1517.46,596.2L1518.02,596.2L1518.2,587.4L1518.39,587.4L1518.58,578.6L1518.76,596.2L1518.95,613.8L1519.14,596.2L1519.32,596.2L1519.51,587.4L1519.69,587.4L1519.88,596.2L1520.81,596.2L1521,587.4L1521.19,587.4L1521.37,596.2L1521.56,596.2L1521.75,587.4L1522.31,587.4L1522.49,596.2L1522.86,596.2L1523.05,587.4L1523.24,587.4L1523.42,596.2L1523.61,587.4L1523.8,587.4L1523.98,596.2L1524.17,587.4L1524.36,587.4L1524.54,596.2L1524.73,587.4L1526.03,587.4L1526.22,578.6L1526.41,596.2L1526.59,596.2L1526.78,587.4L1527.15,587.4L1527.34,596.2L1527.53,587.4L1527.9,587.4L1528.08,596.2L1528.64,596.2L1528.83,578.6L1529.02,587.4L1529.2,578.6L1529.39,587.4L1529.58,596.2L1529.95,596.2L1530.14,587.4L1530.32,596.2L1530.51,587.4L1530.69,596.2L1530.88,587.4L1531.25,587.4L1531.44,596.2L1531.63,587.4L1532,587.4L1532.19,596.2L1532.37,578.6L1532.56,587.4L1532.93,587.4L1533.12,596.2L1533.31,587.4L1533.49,587.4L1533.68,596.2L1534.05,596.2L1534.24,587.4L1534.8,587.4L1534.98,596.2L1535.17,587.4L1535.36,587.4L1535.54,596.2L1535.73,596.2L1535.92,587.4L1537.03,587.4L1537.22,596.2L1537.41,587.4L1537.59,596.2L1537.78,587.4L1537.97,596.2L1538.15,596.2L1538.34,587.4L1538.53,596.2L1538.71,587.4L1539.64,587.4L1539.83,596.2L1540.02,587.4L1541.51,587.4L1541.69,578.6L1541.88,596.2L1542.07,587.4L1542.63,587.4L1542.81,578.6L1544.68,578.6L1544.86,587.4L1545.05,578.6L1545.24,587.4L1545.42,578.6L1545.61,587.4L1545.8,578.6L1545.98,587.4L1546.17,587.4L1546.36,578.6L1546.54,587.4L1546.92,587.4L1547.1,578.6L1547.29,578.6L1547.47,587.4L1547.66,587.4L1547.85,578.6L1548.22,578.6L1548.41,587.4L1548.59,578.6L1548.78,587.4L1549.15,587.4L1549.34,578.6L1549.53,587.4L1549.71,587.4L1549.9,578.6L1550.08,587.4L1550.27,578.6L1550.46,587.4L1550.64,587.4L1550.83,578.6L1551.2,578.6L1551.39,587.4L1551.58,578.6L1551.95,578.6L1552.14,587.4L1552.51,587.4L1552.69,578.6L1552.88,578.6L1553.07,587.4L1553.25,578.6L1553.63,578.6L1553.81,587.4L1554,587.4L1554.00,473L883.00,473Z" fill="rgba(126,178,109,0.1)"/><path d="M883,534.6L883.19,525.8L883.37,534.6L883.56,543.4L883.75,534.6L884.86,534.6L885.05,517L885.24,534.6L885.42,525.8L885.61,534.6L885.8,543.4L885.98,517L886.17,534.6L886.36,525.8L886.54,525.8L886.73,534.6L886.92,543.4L887.1,525.8L887.29,543.4L887.47,525.8L887.66,534.6L887.85,534.6L888.03,525.8L888.22,543.4L888.41,534.6L888.97,534.6L889.15,525.8L889.34,534.6L889.71,534.6L889.9,543.4L890.08,525.8L890.27,534.6L890.46,543.4L890.64,534.6L890.83,525.8L891.02,525.8L891.2,534.6L891.39,534.6L891.58,517L891.76,525.8L891.95,534.6L892.14,525.8L892.32,534.6L892.51,517L892.69,525.8L892.88,525.8L893.07,534.6L893.44,534.6L893.63,525.8L893.81,525.8L894,534.6L894.19,525.8L894.37,534.6L894.56,534.6L894.75,543.4L894.93,534.6L895.31,534.6L895.49,543.4L895.68,534.6L895.86,534.6L896.05,543.4L896.24,525.8L896.42,525.8L896.61,543.4L896.8,534.6L896.98,525.8L897.17,543.4L897.36,525.8L897.73,525.8L897.92,543.4L898.1,534.6L898.29,534.6L898.47,525.8L898.66,543.4L898.85,534.6L899.03,543.4L899.22,525.8L899.41,534.6L899.78,534.6L899.97,525.8L900.15,534.6L900.34,534.6L900.53,525.8L900.71,534.6L900.9,543.4L901.08,534.6L901.27,525.8L901.46,534.6L901.83,534.6L902.02,525.8L902.2,534.6L902.76,534.6L902.95,525.8L903.14,525.8L903.32,534.6L903.51,543.4L903.69,525.8L903.88,525.8L904.07,534.6L904.25,543.4L904.44,534.6L904.63,543.4L904.81,534.6L905.19,534.6L905.37,525.8L905.56,534.6L905.75,525.8L905.93,534.6L906.12,534.6L906.31,525.8L906.49,534.6L907.61,534.6L907.8,525.8L907.98,525.8L908.17,534.6L908.36,525.8L908.54,525.8L908.73,534.6L909.29,534.6L909.47,543.4L909.66,534.6L911.34,534.6L911.53,525.8L911.71,534.6L912.27,534.6L912.46,525.8L912.64,543.4L912.83,525.8L913.02,534.6L913.2,525.8L913.39,525.8L913.58,534.6L913.76,525.8L913.95,534.6L914.88,534.6L915.07,543.4L915.25,534.6L915.44,543.4L915.63,525.8L915.81,534.6L916,525.8L916.19,543.4L916.56,543.4L916.75,534.6L916.93,543.4L917.12,534.6L917.31,543.4L917.49,543.4L917.68,534.6L918.05,534.6L918.24,525.8L918.42,534.6L918.61,543.4L918.8,534.6L918.98,525.8L919.17,534.6L920.29,534.6L920.47,543.4L920.66,525.8L920.85,534.6L921.03,543.4L921.22,534.6L921.41,534.6L921.59,543.4L921.78,534.6L921.97,525.8L922.15,534.6L922.34,534.6L922.53,525.8L922.71,534.6L922.9,534.6L923.08,525.8L923.27,534.6L923.83,534.6L924.02,543.4L924.2,525.8L924.39,534.6L924.58,525.8L924.76,534.6L924.95,534.6L925.14,525.8L925.32,534.6L925.69,534.6L925.88,543.4L926.07,534.6L927,534.6L927.19,525.8L927.37,525.8L927.56,534.6L928.68,534.6L928.86,543.4L929.05,534.6L929.24,534.6L929.42,525.8L929.61,534.6L930.92,534.6L931.1,525.8L931.29,534.6L931.66,534.6L931.85,543.4L932.03,534.6L932.22,534.6L932.41,525.8L932.59,525.8L932.78,534.6L932.97,534.6L933.15,543.4L933.34,534.6L933.71,534.6L933.9,543.4L934.08,525.8L934.27,543.4L934.46,525.8L934.83,525.8L935.02,534.6L935.2,534.6L935.39,543.4L935.58,534.6L935.76,543.4L935.95,534.6L936.14,534.6L936.32,525.8L936.51,525.8L936.69,534.6L936.88,534.6L937.07,543.4L937.44,543.4L937.63,534.6L938.19,534.6L938.37,543.4L938.56,543.4L938.75,534.6L939.49,534.6L939.68,543.4L939.86,543.4L940.05,534.6L940.24,543.4L940.42,534.6L940.61,534.6L940.8,543.4L940.98,534.6L941.17,534.6L941.36,543.4L941.54,543.4L941.73,534.6L941.92,543.4L942.1,534.6L942.85,534.6L943.03,543.4L943.22,525.8L943.41,534.6L943.59,525.8L943.78,534.6L945.46,534.6L945.64,525.8L945.83,534.6L946.2,534.6L946.39,543.4L946.95,543.4L947.14,534.6L947.32,543.4L947.51,534.6L947.69,534.6L947.88,525.8L948.07,534.6L948.25,543.4L948.44,534.6L949,534.6L949.19,543.4L949.37,534.6L949.75,534.6L949.93,525.8L950.12,543.4L950.31,534.6L950.49,534.6L950.68,525.8L950.86,525.8L951.05,534.6L951.24,534.6L951.42,525.8L951.61,534.6L953.1,534.6L953.29,543.4L953.47,543.4L953.66,534.6L954.41,534.6L954.59,517L954.78,534.6L954.97,525.8L955.15,534.6L955.34,534.6L955.53,543.4L955.71,534.6L957.02,534.6L957.2,543.4L957.39,534.6L957.58,534.6L957.76,543.4L957.95,534.6L958.14,543.4L958.51,543.4L958.69,534.6L958.88,543.4L959.07,534.6L959.25,543.4L960,543.4L960.19,534.6L960.37,543.4L960.56,543.4L960.75,534.6L960.93,543.4L961.12,534.6L961.31,552.2L961.49,534.6L961.68,543.4L962.24,543.4L962.42,552.2L962.61,543.4L962.8,543.4L962.98,552.2L963.17,534.6L963.36,543.4L963.92,543.4L964.1,534.6L964.29,552.2L964.47,543.4L965.03,543.4L965.22,552.2L965.41,543.4L965.78,543.4L965.97,552.2L966.15,543.4L966.34,543.4L966.53,552.2L966.71,543.4L966.9,543.4L967.08,552.2L967.27,543.4L967.46,543.4L967.64,552.2L968.39,552.2L968.58,543.4L969.32,543.4L969.51,552.2L969.69,552.2L969.88,543.4L970.07,552.2L970.44,552.2L970.63,543.4L970.81,561L971,552.2L971.19,552.2L971.37,561L971.56,543.4L971.75,552.2L971.93,552.2L972.12,543.4L972.31,552.2L972.49,552.2L972.68,543.4L972.86,561L973.05,552.2L973.24,552.2L973.42,543.4L973.61,552.2L973.8,552.2L973.98,561L976.78,561L976.97,552.2L977.15,561L977.34,561L977.53,569.8L977.9,569.8L978.08,561L978.27,561L978.46,569.8L979.02,569.8L979.2,578.6L979.39,569.8L979.58,569.8L979.76,578.6L979.95,569.8L980.14,569.8L980.32,578.6L981.07,578.6L981.25,569.8L981.44,578.6L981.63,578.6L981.81,587.4L982,578.6L982.19,587.4L982.56,587.4L982.75,578.6L982.93,587.4L983.31,587.4L983.49,578.6L983.68,587.4L983.86,596.2L984.05,578.6L984.24,587.4L984.42,596.2L984.8,596.2L984.98,587.4L985.17,596.2L985.36,596.2L985.54,587.4L985.73,587.4L985.92,596.2L986.47,596.2L986.66,605L986.85,596.2L987.03,605L987.22,605L987.41,596.2L987.78,596.2L987.97,605L988.53,605L988.71,613.8L988.9,605L989.08,596.2L989.27,613.8L989.46,596.2L989.64,605L989.83,613.8L990.02,631.4L990.2,613.8L990.39,605L990.58,613.8L991.51,613.8L991.69,605L991.88,613.8L992.25,613.8L992.44,605L992.63,613.8L992.81,613.8L993,631.4L993.19,605L993.37,622.6L993.56,613.8L994.86,613.8L995.05,631.4L995.24,613.8L995.98,613.8L996.17,622.6L996.54,622.6L996.73,613.8L996.92,622.6L997.1,613.8L997.29,622.6L997.47,613.8L997.66,613.8L997.85,622.6L998.22,622.6L998.41,613.8L998.59,622.6L998.78,622.6L998.97,613.8L999.34,613.8L999.53,622.6L999.71,622.6L999.9,613.8L1000.08,613.8L1000.27,631.4L1000.46,622.6L1001.02,622.6L1001.2,613.8L1001.39,622.6L1001.58,613.8L1001.76,613.8L1001.95,622.6L1002.14,622.6L1002.32,613.8L1002.51,622.6L1002.69,622.6L1002.88,613.8L1003.07,613.8L1003.25,622.6L1003.44,631.4L1003.63,631.4L1003.81,613.8L1004,613.8L1004.19,622.6L1004.75,622.6L1004.93,640.2L1005.12,622.6L1006.05,622.6L1006.24,613.8L1006.42,605L1006.61,587.4L1006.8,578.6L1006.98,561L1007.17,569.8L1007.36,561L1007.54,569.8L1007.73,561L1007.92,569.8L1008.1,561L1008.47,561L1008.66,569.8L1008.85,561L1009.03,552.2L1009.22,569.8L1009.41,569.8L1009.59,561L1009.78,569.8L1009.97,561L1010.15,561L1010.34,569.8L1010.53,561L1010.9,561L1011.08,569.8L1011.27,561L1011.46,569.8L1011.83,569.8L1012.02,561L1012.2,569.8L1012.76,569.8L1012.95,561L1013.14,561L1013.32,569.8L1013.88,569.8L1014.07,561L1014.25,561L1014.44,578.6L1014.63,569.8L1014.81,569.8L1015,552.2L1015.19,561L1015.37,569.8L1016.31,569.8L1016.49,578.6L1016.68,578.6L1016.86,569.8L1017.8,569.8L1017.98,578.6L1018.17,569.8L1019.66,569.8L1019.85,578.6L1020.03,569.8L1020.41,569.8L1020.59,561L1020.78,578.6L1020.97,578.6L1021.15,569.8L1021.34,578.6L1021.53,569.8L1021.71,578.6L1021.9,569.8L1022.08,578.6L1022.27,569.8L1022.46,578.6L1022.64,569.8L1022.83,569.8L1023.02,578.6L1023.2,578.6L1023.39,569.8L1023.58,578.6L1023.95,578.6L1024.14,569.8L1024.32,578.6L1024.69,578.6L1024.88,569.8L1025.07,569.8L1025.25,578.6L1025.44,569.8L1025.63,578.6L1026.19,578.6L1026.37,569.8L1026.56,569.8L1026.75,578.6L1027.12,578.6L1027.31,587.4L1027.49,569.8L1027.68,569.8L1027.86,578.6L1028.05,578.6L1028.24,569.8L1028.42,569.8L1028.61,578.6L1029.36,578.6L1029.54,569.8L1029.73,587.4L1029.92,578.6L1030.1,578.6L1030.29,569.8L1030.47,587.4L1030.66,578.6L1031.41,578.6L1031.59,569.8L1031.78,578.6L1032.71,578.6L1032.9,569.8L1033.08,578.6L1034.02,578.6L1034.2,587.4L1034.39,587.4L1034.58,578.6L1035.14,578.6L1035.32,587.4L1035.51,587.4L1035.69,578.6L1035.88,578.6L1036.07,587.4L1036.25,578.6L1036.44,578.6L1036.63,587.4L1036.81,587.4L1037,578.6L1037.56,578.6L1037.75,587.4L1038.12,587.4L1038.31,578.6L1038.49,587.4L1038.68,587.4L1038.86,578.6L1039.05,578.6L1039.24,569.8L1039.42,578.6L1039.61,578.6L1039.8,569.8L1039.98,587.4L1040.36,587.4L1040.54,578.6L1040.92,578.6L1041.1,587.4L1041.29,587.4L1041.47,578.6L1041.66,587.4L1042.03,587.4L1042.22,578.6L1042.41,587.4L1042.59,578.6L1042.78,578.6L1042.97,587.4L1043.34,587.4L1043.53,578.6L1043.71,587.4L1043.9,578.6L1044.08,587.4L1044.27,578.6L1044.64,578.6L1044.83,587.4L1045.02,578.6L1045.2,578.6L1045.39,587.4L1045.95,587.4L1046.14,569.8L1046.32,587.4L1046.51,578.6L1046.69,587.4L1047.07,587.4L1047.25,578.6L1047.44,587.4L1047.63,578.6L1048.19,578.6L1048.37,587.4L1048.56,587.4L1048.75,578.6L1048.93,578.6L1049.12,587.4L1049.68,587.4L1049.86,578.6L1050.42,578.6L1050.61,587.4L1051.17,587.4L1051.36,578.6L1051.73,578.6L1051.92,587.4L1052.1,587.4L1052.29,578.6L1052.47,587.4L1052.66,578.6L1052.85,578.6L1053.03,587.4L1053.22,578.6L1053.59,578.6L1053.78,587.4L1053.97,587.4L1054.15,578.6L1054.34,587.4L1054.53,587.4L1054.71,578.6L1054.9,578.6L1055.08,587.4L1056.02,587.4L1056.2,578.6L1056.39,578.6L1056.58,587.4L1057.14,587.4L1057.32,578.6L1057.51,587.4L1058.25,587.4L1058.44,578.6L1058.63,587.4L1059.19,587.4L1059.37,578.6L1059.56,587.4L1059.75,569.8L1059.93,578.6L1060.31,578.6L1060.49,587.4L1060.68,578.6L1061.24,578.6L1061.42,587.4L1061.61,587.4L1061.8,578.6L1062.17,578.6L1062.36,587.4L1062.73,587.4L1062.92,578.6L1063.29,578.6L1063.47,587.4L1063.66,578.6L1063.85,587.4L1064.03,587.4L1064.22,578.6L1064.41,578.6L1064.59,587.4L1064.78,587.4L1064.97,578.6L1065.15,578.6L1065.34,587.4L1065.53,587.4L1065.71,578.6L1065.9,578.6L1066.08,587.4L1066.46,587.4L1066.64,578.6L1068.51,578.6L1068.69,587.4L1068.88,587.4L1069.07,578.6L1070.56,578.6L1070.75,587.4L1070.93,578.6L1071.12,578.6L1071.31,587.4L1071.49,578.6L1071.86,578.6L1072.05,587.4L1072.24,578.6L1072.42,587.4L1072.61,569.8L1072.8,578.6L1072.98,578.6L1073.17,587.4L1073.36,578.6L1073.92,578.6L1074.1,587.4L1074.29,578.6L1074.47,578.6L1074.66,587.4L1074.85,578.6L1075.03,578.6L1075.22,587.4L1075.59,587.4L1075.78,569.8L1075.97,569.8L1076.15,578.6L1076.34,587.4L1076.53,578.6L1076.71,587.4L1077.46,587.4L1077.64,578.6L1077.83,578.6L1078.02,587.4L1078.39,587.4L1078.58,578.6L1078.95,578.6L1079.14,587.4L1079.32,578.6L1079.88,578.6L1080.07,587.4L1080.25,578.6L1080.44,578.6L1080.63,587.4L1080.81,578.6L1081,569.8L1081.19,587.4L1081.37,578.6L1081.56,587.4L1081.75,578.6L1081.93,587.4L1082.12,578.6L1082.31,587.4L1082.49,578.6L1083.05,578.6L1083.24,587.4L1083.42,587.4L1083.61,578.6L1083.8,587.4L1083.98,587.4L1084.17,578.6L1084.36,578.6L1084.54,587.4L1084.73,587.4L1084.92,578.6L1085.1,587.4L1085.29,578.6L1085.85,578.6L1086.03,605L1086.22,587.4L1086.41,578.6L1086.59,587.4L1086.78,578.6L1087.71,578.6L1087.9,587.4L1088.08,578.6L1088.46,578.6L1088.64,587.4L1088.83,587.4L1089.02,578.6L1089.2,587.4L1089.39,578.6L1089.58,587.4L1090.32,587.4L1090.51,578.6L1090.69,587.4L1091.25,587.4L1091.44,578.6L1091.81,578.6L1092,587.4L1092.19,578.6L1092.37,587.4L1092.75,587.4L1092.93,578.6L1093.12,587.4L1093.31,578.6L1093.49,578.6L1093.68,587.4L1094.24,587.4L1094.42,578.6L1094.61,587.4L1094.8,587.4L1094.98,578.6L1095.17,587.4L1095.36,587.4L1095.54,578.6L1095.73,578.6L1095.92,587.4L1096.1,578.6L1096.29,587.4L1096.66,587.4L1096.85,578.6L1097.03,587.4L1097.41,587.4L1097.59,578.6L1097.78,587.4L1098.34,587.4L1098.53,578.6L1099.46,578.6L1099.64,587.4L1099.83,578.6L1100.02,578.6L1100.2,587.4L1100.58,587.4L1100.76,578.6L1100.95,578.6L1101.14,587.4L1101.51,587.4L1101.69,578.6L1102.07,578.6L1102.25,587.4L1102.44,578.6L1102.63,587.4L1103,587.4L1103.19,578.6L1103.37,587.4L1103.75,587.4L1103.93,578.6L1104.12,587.4L1104.31,587.4L1104.49,578.6L1104.68,578.6L1104.86,587.4L1105.05,578.6L1105.24,578.6L1105.42,587.4L1106.17,587.4L1106.36,578.6L1106.54,578.6L1106.73,587.4L1107.47,587.4L1107.66,578.6L1107.85,578.6L1108.03,587.4L1108.22,587.4L1108.41,578.6L1109.15,578.6L1109.34,587.4L1109.53,587.4L1109.71,578.6L1109.9,578.6L1110.08,587.4L1110.27,578.6L1110.46,587.4L1110.64,587.4L1110.83,578.6L1111.02,578.6L1111.2,587.4L1111.39,578.6L1111.58,578.6L1111.76,587.4L1111.95,587.4L1112.14,578.6L1112.32,578.6L1112.51,587.4L1112.69,578.6L1112.88,587.4L1113.07,578.6L1113.44,578.6L1113.63,587.4L1113.81,578.6L1114,587.4L1114.56,587.4L1114.75,578.6L1114.93,587.4L1115.12,578.6L1115.31,578.6L1115.49,587.4L1115.68,587.4L1115.86,578.6L1116.24,578.6L1116.42,587.4L1116.61,578.6L1116.8,578.6L1116.98,587.4L1117.17,578.6L1117.36,578.6L1117.54,587.4L1117.92,587.4L1118.1,578.6L1118.29,587.4L1118.47,587.4L1118.66,578.6L1118.85,587.4L1119.03,587.4L1119.22,578.6L1119.41,578.6L1119.59,587.4L1119.78,587.4L1119.97,578.6L1120.34,578.6L1120.53,587.4L1120.71,578.6L1120.9,587.4L1121.83,587.4L1122.02,578.6L1122.2,578.6L1122.39,587.4L1122.58,578.6L1122.76,587.4L1122.95,587.4L1123.14,578.6L1123.32,587.4L1124.07,587.4L1124.25,578.6L1124.44,578.6L1124.63,587.4L1124.81,578.6L1126.12,578.6L1126.31,587.4L1126.49,587.4L1126.68,578.6L1126.86,578.6L1127.05,587.4L1127.61,587.4L1127.8,578.6L1127.98,587.4L1128.54,587.4L1128.73,578.6L1129.29,578.6L1129.47,587.4L1129.66,578.6L1130.03,578.6L1130.22,587.4L1130.41,578.6L1130.59,587.4L1130.78,587.4L1130.97,578.6L1131.15,578.6L1131.34,587.4L1131.53,587.4L1131.71,578.6L1131.9,578.6L1132.08,587.4L1132.27,578.6L1132.46,587.4L1132.64,578.6L1132.83,587.4L1133.2,587.4L1133.39,596.2L1133.58,587.4L1133.95,587.4L1134.14,596.2L1134.51,596.2L1134.69,587.4L1135.81,587.4L1136,596.2L1136.19,587.4L1136.37,596.2L1136.56,596.2L1136.75,587.4L1136.93,596.2L1137.49,596.2L1137.68,578.6L1137.86,596.2L1138.42,596.2L1138.61,587.4L1138.8,587.4L1138.98,596.2L1139.17,596.2L1139.36,578.6L1139.54,596.2L1139.73,587.4L1141.22,587.4L1141.41,596.2L1141.59,587.4L1141.78,587.4L1141.97,596.2L1142.15,587.4L1142.34,578.6L1142.53,587.4L1142.71,587.4L1142.9,578.6L1143.08,587.4L1143.27,596.2L1143.46,587.4L1143.64,587.4L1143.83,596.2L1144.2,596.2L1144.39,587.4L1144.58,587.4L1144.76,596.2L1144.95,587.4L1145.14,587.4L1145.32,596.2L1145.51,596.2L1145.69,587.4L1146.07,587.4L1146.25,596.2L1146.63,596.2L1146.81,587.4L1147,596.2L1147.56,596.2L1147.75,587.4L1147.93,596.2L1148.12,596.2L1148.31,587.4L1148.68,587.4L1148.86,596.2L1149.05,587.4L1149.24,587.4L1149.42,596.2L1149.61,587.4L1149.8,596.2L1150.36,596.2L1150.54,587.4L1150.92,587.4L1151.1,596.2L1151.29,596.2L1151.47,587.4L1151.66,596.2L1152.03,596.2L1152.22,587.4L1152.41,596.2L1152.59,587.4L1152.78,596.2L1152.97,587.4L1153.15,587.4L1153.34,596.2L1153.53,587.4L1153.71,587.4L1153.9,596.2L1154.08,587.4L1154.27,596.2L1154.46,587.4L1154.83,587.4L1155.02,596.2L1155.2,587.4L1155.39,596.2L1155.58,596.2L1155.76,587.4L1155.95,596.2L1156.14,596.2L1156.32,587.4L1156.51,596.2L1156.69,587.4L1157.25,587.4L1157.44,596.2L1158.37,596.2L1158.56,587.4L1158.75,596.2L1158.93,596.2L1159.12,587.4L1159.31,596.2L1159.49,587.4L1159.68,587.4L1159.86,596.2L1160.05,587.4L1160.24,596.2L1160.42,596.2L1160.61,587.4L1160.8,587.4L1160.98,596.2L1161.17,587.4L1161.36,587.4L1161.54,596.2L1161.92,596.2L1162.1,587.4L1162.29,587.4L1162.47,596.2L1162.66,587.4L1163.59,587.4L1163.78,596.2L1163.97,587.4L1164.15,596.2L1164.53,596.2L1164.71,587.4L1164.9,587.4L1165.08,596.2L1165.27,587.4L1165.83,587.4L1166.02,596.2L1166.2,587.4L1166.39,596.2L1166.58,587.4L1167.32,587.4L1167.51,596.2L1167.69,596.2L1167.88,587.4L1168.07,596.2L1168.25,596.2L1168.44,587.4L1168.63,587.4L1168.81,596.2L1169.56,596.2L1169.75,587.4L1170.12,587.4L1170.31,596.2L1170.49,596.2L1170.68,587.4L1170.86,596.2L1171.05,587.4L1171.42,587.4L1171.61,596.2L1171.8,587.4L1171.98,613.8L1172.17,587.4L1172.36,596.2L1172.54,587.4L1172.73,587.4L1172.92,596.2L1173.1,587.4L1173.29,587.4L1173.47,596.2L1173.66,596.2L1173.85,587.4L1174.03,587.4L1174.22,596.2L1174.78,596.2L1174.97,587.4L1175.15,596.2L1175.34,596.2L1175.53,587.4L1175.71,587.4L1175.9,596.2L1176.27,596.2L1176.46,605L1176.64,587.4L1176.83,596.2L1177.02,587.4L1177.2,596.2L1177.39,596.2L1177.58,587.4L1177.76,596.2L1177.95,587.4L1178.14,596.2L1178.32,587.4L1178.51,587.4L1178.69,596.2L1178.88,605L1179.07,605L1179.25,596.2L1179.44,605L1179.63,596.2L1179.81,587.4L1180,596.2L1180.19,587.4L1180.37,596.2L1180.93,596.2L1181.12,587.4L1181.31,596.2L1181.49,587.4L1181.68,596.2L1181.86,587.4L1182.05,622.6L1182.24,587.4L1182.42,596.2L1182.61,596.2L1182.8,605L1182.98,596.2L1183.17,587.4L1183.54,587.4L1183.73,596.2L1183.92,587.4L1184.1,596.2L1184.29,605L1184.47,587.4L1184.66,587.4L1184.85,596.2L1185.03,587.4L1185.22,596.2L1185.41,596.2L1185.59,605L1185.78,587.4L1185.97,587.4L1186.15,596.2L1186.34,587.4L1186.53,587.4L1186.71,596.2L1186.9,587.4L1187.08,622.6L1187.27,596.2L1187.46,596.2L1187.64,587.4L1187.83,596.2L1188.02,596.2L1188.2,587.4L1188.58,587.4L1188.76,596.2L1188.95,596.2L1189.14,587.4L1189.32,596.2L1189.88,596.2L1190.07,622.6L1190.25,596.2L1190.44,596.2L1190.63,587.4L1190.81,587.4L1191,605L1191.19,596.2L1192.31,596.2L1192.49,587.4L1192.68,596.2L1192.86,596.2L1193.05,587.4L1193.24,596.2L1193.42,587.4L1193.61,605L1193.98,605L1194.17,596.2L1194.36,605L1194.54,587.4L1194.73,587.4L1194.92,596.2L1195.1,587.4L1195.29,587.4L1195.47,596.2L1195.66,596.2L1195.85,587.4L1196.03,596.2L1196.22,587.4L1196.41,596.2L1196.59,587.4L1197.15,587.4L1197.34,596.2L1197.53,587.4L1197.71,596.2L1197.9,596.2L1198.08,587.4L1198.27,587.4L1198.46,596.2L1198.64,596.2L1198.83,587.4L1199.02,587.4L1199.2,596.2L1199.58,596.2L1199.76,587.4L1199.95,587.4L1200.14,596.2L1200.32,587.4L1200.51,587.4L1200.69,596.2L1201.07,596.2L1201.25,587.4L1201.44,596.2L1201.63,587.4L1201.81,596.2L1202,587.4L1202.19,596.2L1202.56,596.2L1202.75,587.4L1202.93,587.4L1203.12,596.2L1203.31,587.4L1203.86,587.4L1204.05,596.2L1204.42,596.2L1204.61,587.4L1204.8,587.4L1204.98,596.2L1205.17,596.2L1205.36,587.4L1205.73,587.4L1205.92,596.2L1206.47,596.2L1206.66,587.4L1206.85,596.2L1207.41,596.2L1207.59,587.4L1207.78,587.4L1207.97,596.2L1208.15,587.4L1208.34,596.2L1208.53,587.4L1208.71,596.2L1208.9,587.4L1209.08,596.2L1209.27,596.2L1209.46,587.4L1209.64,596.2L1209.83,587.4L1210.02,596.2L1210.2,596.2L1210.39,587.4L1210.58,596.2L1210.76,587.4L1211.51,587.4L1211.69,596.2L1212.81,596.2L1213,587.4L1213.37,587.4L1213.56,596.2L1213.75,587.4L1214.12,587.4L1214.31,596.2L1214.49,587.4L1214.68,596.2L1214.86,596.2L1215.05,587.4L1215.24,596.2L1215.42,587.4L1215.8,587.4L1215.98,596.2L1216.17,587.4L1216.36,587.4L1216.54,596.2L1216.73,587.4L1216.92,596.2L1217.1,587.4L1217.29,587.4L1217.47,596.2L1217.66,587.4L1217.85,596.2L1218.03,596.2L1218.22,587.4L1218.41,596.2L1218.59,596.2L1218.78,587.4L1219.53,587.4L1219.71,596.2L1220.08,596.2L1220.27,587.4L1220.46,596.2L1220.64,587.4L1220.83,596.2L1221.02,587.4L1221.2,578.6L1221.39,596.2L1222.32,596.2L1222.51,587.4L1222.69,596.2L1222.88,587.4L1223.44,587.4L1223.63,596.2L1223.81,587.4L1224,596.2L1224.19,596.2L1224.37,587.4L1224.56,587.4L1224.75,596.2L1225.31,596.2L1225.49,587.4L1225.68,596.2L1225.86,587.4L1226.05,587.4L1226.24,596.2L1226.42,587.4L1226.61,596.2L1226.8,596.2L1226.98,587.4L1227.17,587.4L1227.36,578.6L1227.54,587.4L1227.73,596.2L1227.92,587.4L1228.1,578.6L1228.29,587.4L1228.47,596.2L1228.66,587.4L1228.85,587.4L1229.03,596.2L1229.22,596.2L1229.41,587.4L1229.78,587.4L1229.97,596.2L1230.15,587.4L1230.71,587.4L1230.9,596.2L1231.08,587.4L1231.27,596.2L1231.46,587.4L1231.64,596.2L1231.83,587.4L1232.02,596.2L1232.2,587.4L1232.39,596.2L1232.58,596.2L1232.76,587.4L1232.95,596.2L1233.14,596.2L1233.32,578.6L1233.51,587.4L1234.25,587.4L1234.44,578.6L1234.63,587.4L1234.81,587.4L1235,578.6L1235.19,587.4L1235.37,587.4L1235.56,578.6L1235.75,587.4L1235.93,587.4L1236.12,578.6L1236.31,578.6L1236.49,587.4L1236.68,578.6L1236.86,578.6L1237.05,587.4L1237.24,587.4L1237.42,578.6L1237.8,578.6L1237.98,587.4L1238.36,587.4L1238.54,578.6L1238.73,578.6L1238.92,587.4L1239.1,578.6L1239.29,587.4L1239.47,578.6L1239.66,587.4L1240.22,587.4L1240.41,578.6L1240.59,578.6L1240.78,587.4L1241.15,587.4L1241.34,578.6L1241.53,587.4L1241.71,587.4L1241.9,578.6L1242.08,578.6L1242.27,587.4L1242.46,578.6L1242.64,587.4L1242.83,578.6L1243.02,631.4L1243.2,578.6L1243.39,578.6L1243.58,587.4L1244.14,587.4L1244.32,578.6L1244.51,587.4L1244.69,578.6L1244.88,587.4L1245.07,578.6L1245.63,578.6L1245.81,587.4L1246,578.6L1246.19,578.6L1246.37,587.4L1246.56,578.6L1246.75,587.4L1246.93,587.4L1247.12,578.6L1247.49,578.6L1247.68,587.4L1247.86,578.6L1248.24,578.6L1248.42,587.4L1248.61,578.6L1248.8,578.6L1248.98,587.4L1249.17,578.6L1249.54,578.6L1249.73,587.4L1249.92,578.6L1250.29,578.6L1250.47,587.4L1250.85,587.4L1251.03,578.6L1251.22,587.4L1251.41,578.6L1251.97,578.6L1252.15,587.4L1252.34,578.6L1253.27,578.6L1253.46,587.4L1253.64,578.6L1254.58,578.6L1254.76,587.4L1254.95,578.6L1255.14,587.4L1255.32,578.6L1255.51,587.4L1255.69,587.4L1255.88,578.6L1256.07,587.4L1256.44,587.4L1256.63,578.6L1256.81,587.4L1257,578.6L1257.93,578.6L1258.12,587.4L1258.31,587.4L1258.49,578.6L1258.68,587.4L1258.86,578.6L1259.05,587.4L1259.24,587.4L1259.42,578.6L1259.8,578.6L1259.98,587.4L1260.17,578.6L1260.36,587.4L1260.54,578.6L1261.29,578.6L1261.47,587.4L1261.85,587.4L1262.03,578.6L1262.22,587.4L1262.41,587.4L1262.59,578.6L1262.78,587.4L1262.97,578.6L1263.15,578.6L1263.34,587.4L1263.53,587.4L1263.71,578.6L1264.27,578.6L1264.46,587.4L1264.64,578.6L1264.83,587.4L1265.02,587.4L1265.2,578.6L1265.76,578.6L1265.95,569.8L1266.14,587.4L1266.32,587.4L1266.51,578.6L1266.69,578.6L1266.88,587.4L1267.07,587.4L1267.25,578.6L1268.19,578.6L1268.37,587.4L1268.93,587.4L1269.12,578.6L1269.49,578.6L1269.68,587.4L1270.05,587.4L1270.24,578.6L1270.42,578.6L1270.61,587.4L1270.8,578.6L1270.98,587.4L1271.17,578.6L1271.54,578.6L1271.73,587.4L1272.29,587.4L1272.47,578.6L1272.66,578.6L1272.85,587.4L1273.59,587.4L1273.78,578.6L1273.97,596.2L1274.15,587.4L1274.34,587.4L1274.53,578.6L1274.71,587.4L1274.9,587.4L1275.08,596.2L1275.27,587.4L1275.46,587.4L1275.64,596.2L1275.83,587.4L1276.2,587.4L1276.39,596.2L1276.58,587.4L1276.76,596.2L1276.95,596.2L1277.14,587.4L1277.32,587.4L1277.51,578.6L1277.69,596.2L1278.25,596.2L1278.44,578.6L1278.63,596.2L1278.81,587.4L1279,596.2L1279.37,596.2L1279.56,587.4L1279.75,596.2L1279.93,587.4L1280.12,596.2L1280.31,587.4L1280.68,587.4L1280.86,596.2L1281.05,587.4L1281.8,587.4L1281.98,596.2L1283.47,596.2L1283.66,587.4L1283.85,596.2L1284.03,578.6L1284.22,596.2L1284.97,596.2L1285.15,578.6L1285.34,587.4L1285.53,596.2L1285.71,587.4L1285.9,596.2L1286.08,587.4L1286.27,587.4L1286.46,596.2L1286.83,596.2L1287.02,587.4L1287.2,596.2L1287.39,587.4L1287.95,587.4L1288.14,596.2L1288.51,596.2L1288.69,587.4L1289.25,587.4L1289.44,596.2L1289.63,587.4L1289.81,587.4L1290,596.2L1290.37,596.2L1290.56,587.4L1290.75,587.4L1290.93,578.6L1291.12,596.2L1291.31,587.4L1292.05,587.4L1292.24,596.2L1292.42,587.4L1292.61,587.4L1292.8,596.2L1292.98,596.2L1293.17,587.4L1293.36,596.2L1293.54,587.4L1293.73,587.4L1293.92,596.2L1294.66,596.2L1294.85,587.4L1295.03,587.4L1295.22,596.2L1295.41,596.2L1295.59,587.4L1296.15,587.4L1296.34,596.2L1296.53,587.4L1296.9,587.4L1297.08,666.6L1297.27,587.4L1297.46,596.2L1297.64,587.4L1298.02,587.4L1298.2,596.2L1298.39,587.4L1299.32,587.4L1299.51,596.2L1300.44,596.2L1300.63,587.4L1300.81,587.4L1301,596.2L1301.37,596.2L1301.56,587.4L1301.75,596.2L1302.12,596.2L1302.31,587.4L1302.49,587.4L1302.68,596.2L1303.05,596.2L1303.24,587.4L1303.42,596.2L1303.61,587.4L1303.8,587.4L1303.98,596.2L1304.17,596.2L1304.36,578.6L1304.54,596.2L1304.92,596.2L1305.1,587.4L1305.29,596.2L1305.47,587.4L1305.66,596.2L1305.85,587.4L1306.03,596.2L1306.41,596.2L1306.59,587.4L1306.78,587.4L1306.97,596.2L1307.15,596.2L1307.34,587.4L1307.71,587.4L1307.9,596.2L1308.08,596.2L1308.27,587.4L1309.2,587.4L1309.39,596.2L1309.58,587.4L1309.76,596.2L1309.95,596.2L1310.14,587.4L1310.88,587.4L1311.07,596.2L1311.25,578.6L1311.44,596.2L1311.63,587.4L1311.81,596.2L1312.19,596.2L1312.37,587.4L1312.75,587.4L1312.93,596.2L1313.12,587.4L1313.31,596.2L1313.49,587.4L1313.68,587.4L1313.86,596.2L1314.05,587.4L1314.24,596.2L1314.42,596.2L1314.61,587.4L1314.8,596.2L1314.98,587.4L1315.17,587.4L1315.36,596.2L1315.54,596.2L1315.73,587.4L1316.29,587.4L1316.47,596.2L1316.85,596.2L1317.03,587.4L1317.22,587.4L1317.41,596.2L1317.59,587.4L1318.71,587.4L1318.9,596.2L1319.08,587.4L1319.27,587.4L1319.46,596.2L1319.64,587.4L1319.83,587.4L1320.02,596.2L1320.2,587.4L1320.58,587.4L1320.76,596.2L1320.95,587.4L1322.07,587.4L1322.25,596.2L1322.44,596.2L1322.63,587.4L1322.81,596.2L1323.37,596.2L1323.56,587.4L1323.75,587.4L1323.93,596.2L1324.12,587.4L1324.31,587.4L1324.49,596.2L1324.68,587.4L1325.05,587.4L1325.24,596.2L1325.42,596.2L1325.61,587.4L1325.8,596.2L1325.98,587.4L1326.36,587.4L1326.54,596.2L1326.73,578.6L1326.92,587.4L1327.1,596.2L1327.29,587.4L1327.47,596.2L1327.85,596.2L1328.03,587.4L1328.22,587.4L1328.41,596.2L1328.59,596.2L1328.78,587.4L1328.97,587.4L1329.15,596.2L1329.34,587.4L1329.53,596.2L1329.71,587.4L1330.08,587.4L1330.27,596.2L1330.64,596.2L1330.83,587.4L1331.39,587.4L1331.58,596.2L1331.76,587.4L1332.32,587.4L1332.51,596.2L1332.69,587.4L1332.88,587.4L1333.07,596.2L1333.25,587.4L1333.63,587.4L1333.81,578.6L1334,587.4L1334.19,596.2L1334.37,596.2L1334.56,587.4L1334.75,587.4L1334.93,596.2L1335.12,596.2L1335.31,587.4L1337.17,587.4L1337.36,596.2L1337.54,596.2L1337.73,587.4L1337.92,596.2L1338.1,587.4L1338.29,596.2L1338.47,587.4L1338.66,587.4L1338.85,578.6L1339.03,596.2L1339.22,587.4L1339.41,596.2L1339.97,596.2L1340.15,587.4L1340.34,587.4L1340.53,596.2L1340.71,587.4L1340.9,596.2L1341.08,578.6L1341.27,587.4L1341.64,587.4L1341.83,596.2L1342.02,587.4L1342.39,587.4L1342.58,596.2L1342.76,587.4L1342.95,578.6L1343.14,587.4L1343.32,596.2L1343.69,596.2L1343.88,587.4L1344.63,587.4L1344.81,596.2L1345,631.4L1345.19,587.4L1345.37,596.2L1345.56,587.4L1346.12,587.4L1346.31,596.2L1346.49,587.4L1346.68,596.2L1347.24,596.2L1347.42,587.4L1347.61,596.2L1347.8,587.4L1348.36,587.4L1348.54,596.2L1348.73,587.4L1348.92,587.4L1349.1,596.2L1349.85,596.2L1350.03,587.4L1350.22,596.2L1350.41,596.2L1350.59,587.4L1351.15,587.4L1351.34,596.2L1351.53,587.4L1351.71,587.4L1351.9,596.2L1352.08,587.4L1352.46,587.4L1352.64,596.2L1352.83,587.4L1353.02,587.4L1353.2,596.2L1353.39,596.2L1353.58,587.4L1353.76,587.4L1353.95,596.2L1354.14,587.4L1354.88,587.4L1355.07,596.2L1355.25,587.4L1355.63,587.4L1355.81,596.2L1356,587.4L1356.19,587.4L1356.37,596.2L1356.56,587.4L1356.75,587.4L1356.93,596.2L1357.12,587.4L1357.68,587.4L1357.86,596.2L1358.05,587.4L1358.24,587.4L1358.42,596.2L1358.61,596.2L1358.8,587.4L1358.98,596.2L1359.17,596.2L1359.36,587.4L1359.54,596.2L1359.73,596.2L1359.92,587.4L1360.1,596.2L1360.29,587.4L1360.47,596.2L1360.66,596.2L1360.85,587.4L1361.03,596.2L1361.22,587.4L1361.41,596.2L1361.97,596.2L1362.15,587.4L1363.64,587.4L1363.83,578.6L1364.02,596.2L1364.2,587.4L1364.39,596.2L1364.58,587.4L1364.76,587.4L1364.95,596.2L1365.14,587.4L1365.32,596.2L1365.51,578.6L1365.69,596.2L1365.88,596.2L1366.07,587.4L1366.25,596.2L1366.44,587.4L1366.63,587.4L1366.81,596.2L1367,587.4L1367.19,596.2L1367.37,596.2L1367.56,587.4L1367.75,596.2L1367.93,596.2L1368.12,587.4L1368.31,596.2L1368.49,587.4L1368.68,587.4L1368.86,596.2L1369.05,587.4L1369.24,587.4L1369.42,596.2L1369.61,587.4L1369.8,578.6L1369.98,587.4L1370.17,596.2L1370.36,587.4L1370.54,596.2L1371.1,596.2L1371.29,587.4L1371.47,587.4L1371.66,596.2L1371.85,587.4L1372.03,578.6L1372.22,587.4L1372.41,596.2L1372.59,587.4L1373.34,587.4L1373.53,596.2L1374.08,596.2L1374.27,587.4L1374.46,596.2L1374.64,596.2L1374.83,587.4L1375.95,587.4L1376.14,596.2L1376.32,587.4L1376.69,587.4L1376.88,596.2L1377.07,587.4L1377.81,587.4L1378,596.2L1378.19,587.4L1378.37,587.4L1378.56,596.2L1378.75,587.4L1378.93,587.4L1379.12,596.2L1379.68,596.2L1379.86,587.4L1380.05,596.2L1380.24,596.2L1380.42,587.4L1380.61,596.2L1380.8,587.4L1381.36,587.4L1381.54,596.2L1381.73,587.4L1381.92,587.4L1382.1,596.2L1382.29,587.4L1382.47,596.2L1382.66,587.4L1382.85,596.2L1383.03,596.2L1383.22,587.4L1384.15,587.4L1384.34,596.2L1384.53,587.4L1384.9,587.4L1385.08,578.6L1385.27,587.4L1385.46,596.2L1385.64,587.4L1386.2,587.4L1386.39,596.2L1386.58,587.4L1386.76,596.2L1386.95,596.2L1387.14,587.4L1387.32,596.2L1387.51,587.4L1388.07,587.4L1388.25,596.2L1388.44,587.4L1388.63,596.2L1388.81,596.2L1389,587.4L1389.56,587.4L1389.75,596.2L1389.93,596.2L1390.12,587.4L1390.31,596.2L1391.24,596.2L1391.42,587.4L1391.61,596.2L1391.8,596.2L1391.98,587.4L1392.36,587.4L1392.54,596.2L1392.73,587.4L1392.92,587.4L1393.1,596.2L1393.29,587.4L1393.47,596.2L1393.66,596.2L1393.85,587.4L1394.03,587.4L1394.22,596.2L1394.41,596.2L1394.59,587.4L1394.78,596.2L1394.97,596.2L1395.15,587.4L1395.34,596.2L1395.53,587.4L1395.71,587.4L1395.9,596.2L1396.08,587.4L1396.27,596.2L1396.46,596.2L1396.64,587.4L1397.02,587.4L1397.2,596.2L1397.39,587.4L1397.58,596.2L1397.76,587.4L1397.95,596.2L1398.14,596.2L1398.32,587.4L1398.51,613.8L1398.69,596.2L1398.88,596.2L1399.07,587.4L1399.63,587.4L1399.81,596.2L1400,578.6L1400.19,596.2L1400.37,587.4L1400.75,587.4L1400.93,596.2L1401.12,596.2L1401.31,587.4L1401.49,587.4L1401.68,596.2L1402.05,596.2L1402.24,587.4L1402.61,587.4L1402.8,596.2L1403.17,596.2L1403.36,578.6L1403.54,587.4L1403.92,587.4L1404.1,596.2L1404.29,587.4L1404.47,622.6L1404.66,587.4L1405.41,587.4L1405.59,596.2L1405.78,587.4L1405.97,587.4L1406.15,596.2L1406.34,587.4L1406.53,587.4L1406.71,596.2L1407.08,596.2L1407.27,587.4L1407.46,596.2L1407.83,596.2L1408.02,587.4L1408.58,587.4L1408.76,596.2L1408.95,587.4L1409.14,587.4L1409.32,596.2L1409.51,587.4L1410.25,587.4L1410.44,596.2L1410.63,578.6L1410.81,587.4L1412.86,587.4L1413.05,596.2L1413.24,587.4L1413.8,587.4L1413.98,596.2L1414.17,587.4L1414.36,587.4L1414.54,596.2L1414.73,587.4L1414.92,587.4L1415.1,596.2L1415.85,596.2L1416.03,587.4L1416.22,596.2L1416.41,596.2L1416.59,587.4L1417.71,587.4L1417.9,596.2L1418.08,596.2L1418.27,587.4L1418.46,596.2L1418.64,587.4L1419.2,587.4L1419.39,596.2L1420.14,596.2L1420.32,587.4L1420.51,596.2L1420.69,587.4L1420.88,587.4L1421.07,596.2L1421.25,587.4L1421.44,596.2L1422.19,596.2L1422.37,587.4L1422.56,587.4L1422.75,596.2L1422.93,587.4L1423.49,587.4L1423.68,596.2L1423.86,596.2L1424.05,587.4L1424.24,596.2L1424.42,596.2L1424.61,587.4L1424.8,596.2L1424.98,587.4L1425.17,596.2L1425.36,587.4L1425.54,613.8L1425.73,596.2L1425.92,587.4L1426.29,587.4L1426.47,596.2L1426.66,587.4L1427.22,587.4L1427.41,596.2L1427.59,596.2L1427.78,587.4L1428.15,587.4L1428.34,596.2L1428.53,578.6L1428.71,587.4L1428.9,596.2L1429.08,596.2L1429.27,587.4L1430.2,587.4L1430.39,596.2L1430.58,587.4L1430.76,596.2L1430.95,596.2L1431.14,587.4L1431.32,578.6L1431.51,587.4L1431.69,596.2L1431.88,587.4L1432.07,587.4L1432.25,596.2L1432.81,596.2L1433,587.4L1433.19,587.4L1433.37,596.2L1433.56,596.2L1433.75,587.4L1433.93,587.4L1434.12,596.2L1434.31,587.4L1434.49,578.6L1434.68,587.4L1434.86,596.2L1435.05,596.2L1435.24,587.4L1435.42,596.2L1435.61,587.4L1435.8,587.4L1435.98,596.2L1436.17,587.4L1436.36,596.2L1436.92,596.2L1437.1,587.4L1437.29,596.2L1437.47,596.2L1437.66,587.4L1437.85,596.2L1438.03,587.4L1438.59,587.4L1438.78,578.6L1438.97,587.4L1439.15,596.2L1439.34,587.4L1439.53,587.4L1439.71,578.6L1439.9,596.2L1440.08,596.2L1440.27,587.4L1440.46,596.2L1440.64,587.4L1440.83,587.4L1441.02,596.2L1441.2,587.4L1441.39,596.2L1441.58,587.4L1442.14,587.4L1442.32,596.2L1442.51,587.4L1442.69,596.2L1442.88,596.2L1443.07,587.4L1443.63,587.4L1443.81,596.2L1444,596.2L1444.19,587.4L1444.37,596.2L1444.56,587.4L1444.75,596.2L1444.93,587.4L1445.12,596.2L1445.31,587.4L1445.68,587.4L1445.86,596.2L1446.05,596.2L1446.24,587.4L1447.92,587.4L1448.1,596.2L1448.66,596.2L1448.85,587.4L1449.03,596.2L1449.22,587.4L1449.41,596.2L1449.59,596.2L1449.78,587.4L1449.97,596.2L1450.15,587.4L1450.53,587.4L1450.71,596.2L1450.9,587.4L1451.08,596.2L1451.27,587.4L1451.46,596.2L1451.64,587.4L1452.02,587.4L1452.2,596.2L1452.39,596.2L1452.58,587.4L1452.76,587.4L1452.95,596.2L1453.14,587.4L1453.32,587.4L1453.51,596.2L1453.88,596.2L1454.07,587.4L1454.25,596.2L1454.44,587.4L1454.63,596.2L1454.81,587.4L1455,587.4L1455.19,596.2L1455.37,587.4L1455.56,587.4L1455.75,596.2L1455.93,587.4L1456.12,578.6L1456.31,596.2L1456.49,587.4L1456.68,587.4L1456.86,596.2L1457.05,587.4L1457.24,596.2L1457.8,596.2L1457.98,587.4L1458.17,596.2L1458.36,587.4L1458.73,587.4L1458.92,596.2L1459.1,587.4L1459.29,596.2L1459.66,596.2L1459.85,587.4L1460.41,587.4L1460.59,596.2L1460.78,587.4L1461.71,587.4L1461.9,596.2L1462.08,587.4L1462.64,587.4L1462.83,596.2L1463.02,596.2L1463.2,587.4L1463.39,596.2L1463.58,587.4L1463.76,596.2L1463.95,587.4L1464.14,596.2L1464.69,596.2L1464.88,587.4L1466.56,587.4L1466.75,596.2L1467.12,596.2L1467.31,587.4L1467.49,587.4L1467.68,578.6L1467.86,587.4L1468.05,596.2L1468.24,596.2L1468.42,587.4L1468.61,596.2L1468.8,587.4L1468.98,587.4L1469.17,596.2L1469.36,587.4L1469.73,587.4L1469.92,596.2L1470.1,587.4L1470.29,587.4L1470.47,596.2L1470.66,587.4L1471.03,587.4L1471.22,596.2L1471.41,587.4L1471.59,596.2L1471.78,596.2L1471.97,587.4L1472.15,596.2L1472.34,587.4L1472.53,587.4L1472.71,596.2L1472.9,587.4L1473.46,587.4L1473.64,596.2L1473.83,578.6L1474.02,596.2L1474.39,596.2L1474.58,587.4L1475.51,587.4L1475.69,596.2L1475.88,587.4L1476.07,587.4L1476.25,596.2L1476.44,587.4L1476.63,587.4L1476.81,596.2L1477,587.4L1477.19,587.4L1477.37,596.2L1477.56,596.2L1477.75,587.4L1477.93,587.4L1478.12,596.2L1478.49,596.2L1478.68,587.4L1479.24,587.4L1479.42,596.2L1479.61,587.4L1480.17,587.4L1480.36,596.2L1480.54,587.4L1480.73,596.2L1480.92,587.4L1481.85,587.4L1482.03,596.2L1482.22,596.2L1482.41,587.4L1482.59,596.2L1482.78,587.4L1483.15,587.4L1483.34,578.6L1483.53,596.2L1484.08,596.2L1484.27,587.4L1484.64,587.4L1484.83,596.2L1485.58,596.2L1485.76,587.4L1486.32,587.4L1486.51,596.2L1486.69,587.4L1486.88,587.4L1487.07,596.2L1487.25,587.4L1487.63,587.4L1487.81,578.6L1488,596.2L1488.19,587.4L1488.93,587.4L1489.12,578.6L1489.31,587.4L1489.86,587.4L1490.05,596.2L1490.24,596.2L1490.42,587.4L1490.8,587.4L1490.98,596.2L1491.17,587.4L1491.54,587.4L1491.73,596.2L1491.92,596.2L1492.1,587.4L1492.29,596.2L1492.47,596.2L1492.66,587.4L1493.03,587.4L1493.22,596.2L1493.41,587.4L1493.78,587.4L1493.97,596.2L1494.15,587.4L1494.34,596.2L1494.53,596.2L1494.71,587.4L1495.46,587.4L1495.64,596.2L1495.83,596.2L1496.02,587.4L1496.2,596.2L1496.39,596.2L1496.58,587.4L1496.76,587.4L1496.95,596.2L1497.14,587.4L1497.32,596.2L1497.51,587.4L1497.69,587.4L1497.88,596.2L1498.07,578.6L1498.25,596.2L1498.44,587.4L1498.63,587.4L1498.81,596.2L1499,596.2L1499.19,587.4L1499.56,587.4L1499.75,596.2L1499.93,587.4L1500.68,587.4L1500.86,596.2L1501.05,587.4L1501.24,578.6L1501.42,587.4L1501.8,587.4L1501.98,596.2L1502.36,596.2L1502.54,587.4L1502.73,596.2L1502.92,596.2L1503.1,587.4L1503.29,587.4L1503.47,596.2L1503.66,596.2L1503.85,587.4L1504.03,587.4L1504.22,596.2L1504.41,587.4L1504.59,596.2L1504.78,587.4L1505.71,587.4L1505.9,596.2L1506.08,596.2L1506.27,587.4L1506.46,587.4L1506.64,596.2L1506.83,587.4L1507.02,587.4L1507.2,596.2L1507.39,587.4L1507.95,587.4L1508.14,578.6L1508.32,596.2L1508.69,596.2L1508.88,587.4L1509.25,587.4L1509.44,596.2L1509.63,587.4L1509.81,587.4L1510,596.2L1510.19,587.4L1510.37,587.4L1510.56,596.2L1510.75,587.4L1511.49,587.4L1511.68,596.2L1511.86,587.4L1512.05,587.4L1512.24,596.2L1512.42,587.4L1512.98,587.4L1513.17,596.2L1513.36,587.4L1513.54,596.2L1513.73,587.4L1513.92,596.2L1514.1,587.4L1514.29,596.2L1515.03,596.2L1515.22,587.4L1515.41,596.2L1515.59,596.2L1515.78,587.4L1515.97,587.4L1516.15,596.2L1516.53,596.2L1516.71,587.4L1516.9,596.2L1517.08,596.2L1517.27,587.4L1517.46,596.2L1518.02,596.2L1518.2,587.4L1518.39,587.4L1518.58,578.6L1518.76,596.2L1518.95,613.8L1519.14,596.2L1519.32,596.2L1519.51,587.4L1519.69,587.4L1519.88,596.2L1520.81,596.2L1521,587.4L1521.19,587.4L1521.37,596.2L1521.56,596.2L1521.75,587.4L1522.31,587.4L1522.49,596.2L1522.86,596.2L1523.05,587.4L1523.24,587.4L1523.42,596.2L1523.61,587.4L1523.8,587.4L1523.98,596.2L1524.17,587.4L1524.36,587.4L1524.54,596.2L1524.73,587.4L1526.03,587.4L1526.22,578.6L1526.41,596.2L1526.59,596.2L1526.78,587.4L1527.15,587.4L1527.34,596.2L1527.53,587.4L1527.9,587.4L1528.08,596.2L1528.64,596.2L1528.83,578.6L1529.02,587.4L1529.2,578.6L1529.39,587.4L1529.58,596.2L1529.95,596.2L1530.14,587.4L1530.32,596.2L1530.51,587.4L1530.69,596.2L1530.88,587.4L1531.25,587.4L1531.44,596.2L1531.63,587.4L1532,587.4L1532.19,596.2L1532.37,578.6L1532.56,587.4L1532.93,587.4L1533.12,596.2L1533.31,587.4L1533.49,587.4L1533.68,596.2L1534.05,596.2L1534.24,587.4L1534.8,587.4L1534.98,596.2L1535.17,587.4L1535.36,587.4L1535.54,596.2L1535.73,596.2L1535.92,587.4L1537.03,587.4L1537.22,596.2L1537.41,587.4L1537.59,596.2L1537.78,587.4L1537.97,596.2L1538.15,596.2L1538.34,587.4L1538.53,596.2L1538.71,587.4L1539.64,587.4L1539.83,596.2L1540.02,587.4L1541.51,587.4L1541.69,578.6L1541.88,596.2L1542.07,587.4L1542.63,587.4L1542.81,578.6L1544.68,578.6L1544.86,587.4L1545.05,578.6L1545.24,587.4L1545.42,578.6L1545.61,587.4L1545.8,578.6L1545.98,587.4L1546.17,587.4L1546.36,578.6L1546.54,587.4L1546.92,587.4L1547.1,578.6L1547.29,578.6L1547.47,587.4L1547.66,587.4L1547.85,578.6L1548.22,578.6L1548.41,587.4L1548.59,578.6L1548.78,587.4L1549.15,587.4L1549.34,578.6L1549.53,587.4L1549.71,587.4L1549.9,578.6L1550.08,587.4L1550.27,578.6L1550.46,587.4L1550.64,587.4L1550.83,578.6L1551.2,578.6L1551.39,587.4L1551.58,578.6L1551.95,578.6L1552.14,587.4L1552.51,587.4L1552.69,578.6L1552.88,578.6L1553.07,587.4L1553.25,578.6L1553.63,578.6L1553.81,587.4L1554,587.4" fill="none" stroke="#7eb26d" stroke-width="1"/></g></svg>
<div class="ylab" style="right:722px;top:466px">-50 dB</div>
<div class="ylab" style="right:722px;top:510px">-55 dB</div>
<div class="ylab" style="right:722px;top:554px">-60 dB</div>
<div class="ylab" style="right:722px;top:598px">-65 dB</div>
<div class="ylab" style="right:722px;top:642px">-70 dB</div>
<div class="ylab" style="right:722px;top:686px">-75 dB</div>
<div class="xlab" style="left:906.27px;top:700px">10/16</div>
<div class="xlab" style="left:1011.04px;top:700px">10/18</div>
<div class="xlab" style="left:1115.81px;top:700px">10/20</div>
<div class="xlab" style="left:1220.58px;top:700px">10/22</div>
<div class="xlab" style="left:1325.35px;top:700px">10/24</div>
<div class="xlab" style="left:1430.12px;top:700px">10/26</div>
<div class="lsw" style="left:857px;top:728.5px"></div>
<div class="ltxt" style="left:873px;top:723px;font-size:10.45px">RSSI_value</div>
<div class="ltxt lcur" style="left:934.5px;top:723px">Current: -62.00 dB</div>
</body></html>
